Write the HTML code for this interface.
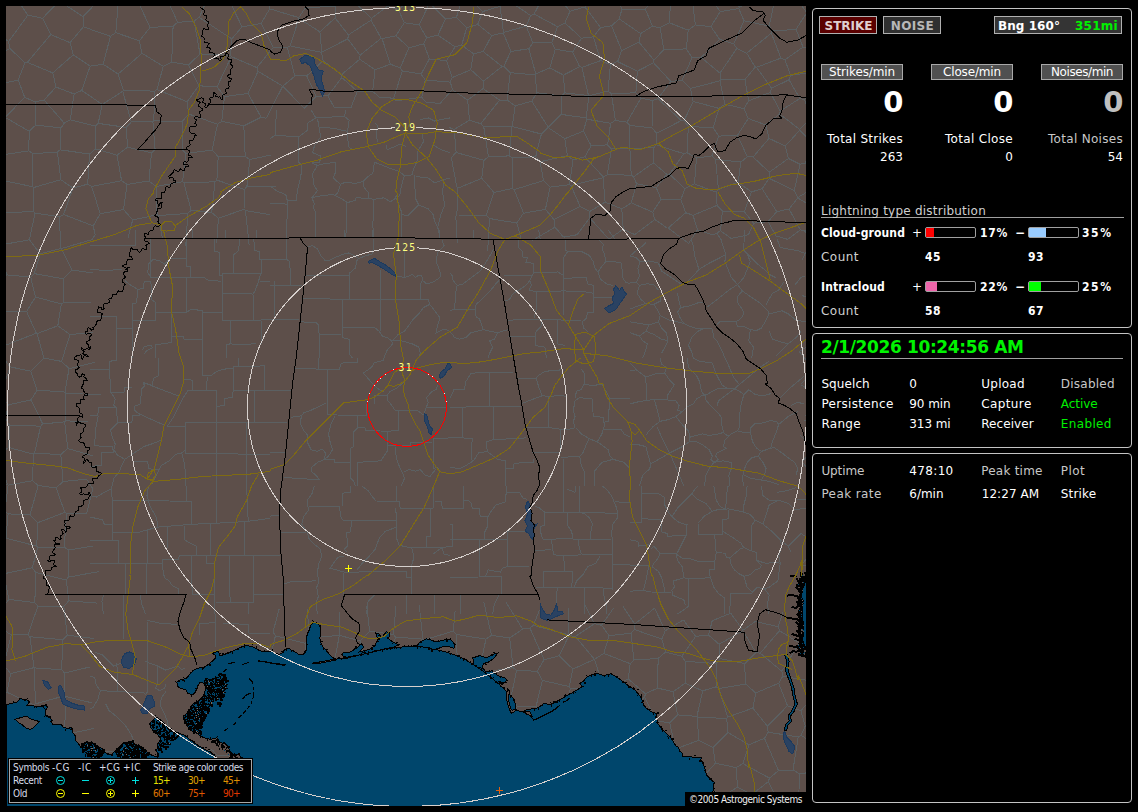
<!DOCTYPE html>
<html lang="en"><head><meta charset="utf-8"><title>Lightning Detector</title>
<style>
html,body{margin:0;padding:0;background:#000;}
body{width:1138px;height:812px;position:relative;overflow:hidden;font-family:"DejaVu Sans", "Liberation Sans", sans-serif;}
.t{position:absolute;white-space:pre;line-height:normal;}
.panel{position:absolute;border:1px solid #c4c4c4;border-radius:4px;box-sizing:border-box;background:#000;}
.box{position:absolute;box-sizing:border-box;}
#map{position:absolute;left:6px;top:6px;width:800px;height:800px;}
</style></head><body>
<svg id="map" viewBox="6 6 800 800" width="800" height="800">
<rect x="6" y="6" width="800" height="800" fill="#5d4f4a"/>
<path d="M286.6,238.7 L286.6,259.3 L289.8,261.6 L290.6,285.4 M270.0,259.3 L286.6,259.3 M270.0,285.4 L301.6,285.4 M274.7,280.6 L274.7,319.4 M270.0,319.4 L299.3,319.4 M300.1,321.8 L315.9,322.6 L318.3,324.9 L319.1,334.4 L319.1,358.0 M319.1,334.4 L341.2,334.4 M308.0,246.6 L312.7,245.8 L317.5,249.0 L320.6,255.3 L325.4,260.9 L330.1,260.1 L336.5,256.9 L344.4,253.7 L349.1,252.9 L355.4,256.1 L358.6,258.5 L364.9,256.1 L372.8,253.7 L373.6,239.5 M304.8,275.9 L349.1,275.9 L349.9,272.7 L355.4,268.0 L356.7,260.9 L358.6,258.5 M349.1,275.9 L349.1,298.8 M302.4,298.4 L322.2,298.4 L338.0,299.6 L358.6,299.6 L380.8,299.3 L396.6,299.3 L428.2,299.6 M380.8,269.6 L380.8,331.3 M342.0,300.4 L342.0,337.6 L349.1,339.2 L349.1,353.4 L352.3,358.0 M342.0,327.8 L374.4,327.3 L379.2,331.3 L382.3,336.0 L387.1,337.6 L391.8,340.8 L392.6,343.9 L387.1,350.3 L383.9,358.0 M404.5,250.6 L404.5,276.7 M396.6,275.9 L404.5,277.5 L409.2,275.9 L412.4,274.3 L415.6,277.5 L418.7,275.1 L421.9,275.9 L422.7,280.6 L426.6,283.8 L433.0,282.2 L437.7,279.1 L440.9,275.9 L439.3,269.6 L436.1,261.6 L437.7,252.2 L444.1,245.8 L441.7,239.5 M421.1,280.6 L420.3,299.6 M428.2,299.6 L429.8,304.4 L423.5,307.5 L418.7,313.9 L412.4,320.2 L409.2,324.9 L404.5,331.3 L398.2,334.4 L392.6,340.8 M429.8,304.4 L434.6,310.7 L440.1,317.8 L437.7,324.9 L436.1,332.8 L444.1,328.9 L450.1,331.3 M392.6,340.8 L401.3,340.8 L412.4,343.9 L418.7,347.1 L420.3,353.4 L418.7,358.0 M315.9,230.0 L315.9,237.9 M344.4,230.0 L344.4,237.9 M372.8,230.0 L372.8,237.9 M439.3,230.0 L439.3,237.9 M450.0,272.7 L452.4,275.9 L453.2,280.6 L457.1,285.4 L461.9,284.6 L467.4,280.6 L473.7,275.9 L480.1,271.1 L486.4,261.6 L491.1,253.7 L493.5,249.0 M457.1,285.4 L455.5,293.3 L454.7,309.1 L450.0,310.7 M454.7,309.1 L475.3,309.1 L476.1,304.4 L481.6,299.6 L489.6,291.7 L495.9,283.8 L499.1,280.6 M475.3,309.1 L476.1,317.0 L479.3,318.6 L481.6,324.9 L483.2,329.7 L470.6,332.8 L465.8,337.6 L459.5,339.2 L454.7,337.6 L450.0,331.3 M483.2,329.7 L497.5,332.8 L502.2,331.3 L507.8,329.7 M497.5,332.8 L494.3,339.2 L489.6,340.8 L492.7,347.1 L489.6,353.4 L488.0,358.0 M503.8,275.1 L532.3,275.1 L533.9,272.7 L551.3,272.7 L557.6,271.9 L563.1,275.1 M532.3,275.1 L529.9,280.6 L531.5,285.4 L529.1,290.1 L535.4,291.7 L541.8,292.0 L563.6,290.9 M504.6,301.2 L509.3,299.6 L513.3,293.3 L521.2,288.5 L525.9,285.4 L529.9,280.6 M536.2,292.0 L536.2,309.1 L533.9,318.6 M507.0,320.2 L533.9,319.4 L557.6,319.9 L567.1,320.2 L581.3,320.5 M565.5,239.5 L565.8,250.6 L567.9,251.4 L581.3,251.4 L589.2,255.3 L593.2,261.6 L594.8,268.0 L597.9,271.9 M567.9,251.4 L563.9,256.9 L563.6,315.4 M563.6,278.3 L586.1,277.5 L587.7,283.8 L593.2,285.4 L593.2,312.3 L587.7,312.3 L586.1,318.6 L582.1,321.8 L583.7,328.1 L587.7,331.3 M563.6,290.9 L584.5,291.7 L593.2,293.3 M593.2,297.2 L613.0,297.2 M597.9,271.9 L601.9,266.4 L605.9,261.6 L604.3,253.7 L601.9,249.0 L603.5,244.2 L598.7,239.5 M597.9,271.9 L600.3,279.1 L606.6,283.8 L613.0,285.4 M605.9,261.6 L614.6,261.6 L621.7,263.2 L622.5,277.5 L625.6,282.2 L630.1,283.8 M518.0,239.5 L518.0,247.4 L522.0,250.6 L522.8,256.9 L527.5,257.7 L525.9,262.4 L533.1,263.2 L533.9,272.7 M508.5,336.8 L535.4,336.0 L536.2,331.3 L541.0,326.5 L541.8,320.2 M535.4,336.0 L535.4,345.5 L544.9,347.1 L546.5,358.0 M557.6,319.9 L557.6,343.9 L565.5,345.5 M473.7,230.0 L473.7,238.7 M538.6,230.0 L540.2,238.7 M608.2,230.0 L614.6,238.7 M295.3,368.3 L318.3,369.1 L327.0,369.9 M318.3,358.0 L318.3,369.1 M327.0,369.9 L327.0,414.2 M327.0,369.9 L339.6,369.1 L340.4,364.3 L344.4,362.0 L357.8,362.0 L357.8,358.0 M327.0,414.2 L336.5,415.0 L357.8,415.3 L366.5,415.3 L366.8,403.9 M357.8,415.3 L357.8,427.6 L364.9,427.6 L365.7,430.8 L387.1,431.1 M270.0,390.4 L291.4,390.4 M270.0,422.9 L287.4,422.9 M270.0,452.9 L285.0,452.9 M290.6,417.3 L301.6,415.8 L304.0,412.6 L311.1,410.2 L317.5,407.1 L326.2,403.1 M301.6,415.8 L300.1,422.9 L304.0,430.8 L308.0,435.5 L307.2,441.9 L311.1,449.8 L317.5,451.4 L322.2,449.0 L325.4,452.9 L324.6,459.3 L334.9,459.3 L334.9,462.4 L349.9,462.4 M334.9,416.5 L330.9,424.5 L328.5,433.9 L330.1,441.9 L332.5,449.8 L328.5,456.1 L324.6,459.3 M357.8,427.6 L353.9,431.6 L353.9,446.6 L350.7,448.2 L350.7,478.3 L353.9,481.4 L355.4,486.0 M324.6,459.3 L317.5,462.4 L311.9,467.2 L311.9,471.9 L317.5,476.7 L319.1,479.8 L284.2,477.5 M357.8,486.0 L357.8,462.4 L380.8,460.8 L383.9,456.1 L387.1,451.4 L387.1,431.1 M387.1,431.1 L398.2,430.8 L399.0,410.2 L417.2,410.2 L423.5,415.0 M387.1,395.2 L387.9,400.7 L391.8,405.5 L395.0,410.2 L399.0,410.2 M374.4,403.9 L374.4,395.2 L387.1,395.2 L390.3,391.2 L396.6,388.1 L404.5,381.7 M363.4,373.0 L368.1,378.6 L373.6,384.9 L379.2,389.6 L383.9,391.2 M363.4,373.0 L371.3,367.5 L374.4,362.7 L383.1,360.4 L383.1,358.0 M387.1,431.1 L387.1,445.8 L410.8,445.8 L410.8,442.7 L432.2,442.7 M433.0,438.7 L433.0,468.8 L437.7,467.2 L440.1,471.9 M433.0,438.7 L450.1,437.9 M395.0,446.6 L396.6,459.3 L399.7,467.2 L402.9,473.5 L404.5,478.3 L401.3,486.0 M404.5,471.9 L409.2,469.6 L415.6,471.1 L420.3,469.6 L425.1,475.1 L429.8,476.7 L436.1,468.8 M424.3,413.4 L425.9,408.6 L428.2,402.3 L426.6,397.6 L431.4,392.0 L436.1,389.6 L437.7,384.9 M425.9,407.8 L445.6,407.4 M450.0,398.3 L454.0,389.6 L464.2,389.6 L465.8,381.7 L470.6,373.8 L480.1,372.2 L489.6,372.6 L513.3,373.0 M489.6,372.6 L489.6,406.3 M450.0,407.1 L462.7,407.1 L493.5,406.3 L521.2,406.3 M462.7,407.1 L462.7,437.9 L450.0,437.9 M462.7,437.9 L472.2,438.7 L471.4,452.9 L472.2,461.6 L465.8,465.6 L459.5,468.8 L450.0,467.2 M493.5,406.3 L493.5,439.5 L486.4,441.9 L487.2,451.4 L478.5,452.9 L473.7,460.8 L472.2,461.6 M493.5,439.5 L513.3,438.7 L525.9,437.9 M487.2,451.4 L497.5,459.3 L505.4,460.8 L505.4,486.0 M505.4,468.0 L513.3,468.0 L514.1,463.2 L533.9,462.4 L533.9,459.3 M518.0,378.6 L536.2,378.3 L538.6,375.4 L544.9,371.4 L551.3,370.7 L560.8,369.9 M536.2,378.3 L538.6,386.5 L541.8,395.2 L548.1,396.8 L554.4,396.0 L560.8,395.2 L566.3,396.8 M521.2,403.9 L529.1,400.7 L535.4,398.3 L541.8,396.0 M548.9,396.8 L548.9,427.6 M526.7,427.6 L548.9,427.6 L560.8,429.2 L560.8,433.9 M560.8,429.2 L567.1,430.0 L575.0,427.6 L573.4,421.3 L575.0,416.5 L573.4,410.2 L575.0,400.7 L579.7,397.6 L592.4,399.1 L593.2,416.5 L603.5,417.3 L604.3,426.0 L601.9,433.9 L597.2,441.9 M575.0,397.6 L576.6,391.2 L581.3,389.6 L584.5,383.3 L584.5,373.8 L581.3,369.1 M584.5,384.1 L592.4,385.7 L601.9,384.1 L609.8,398.3 L608.2,421.3 L604.3,422.1 M609.8,398.3 L630.1,398.3 M603.5,429.2 L620.9,429.2 L624.1,433.9 L630.1,437.1 M576.6,428.4 L581.3,433.9 L589.2,438.7 L597.2,441.9 L601.9,445.0 L608.2,449.8 L609.8,456.1 L613.0,459.3 M532.3,452.1 L544.9,452.9 L560.8,452.9 L560.8,433.9 M560.8,457.7 L568.7,456.9 L579.7,456.1 L582.9,452.9 L586.1,445.0 L589.2,438.7 M563.9,459.3 L563.9,486.0 M579.7,456.1 L581.3,465.6 L584.5,471.9 L584.5,486.0 M613.0,459.3 L601.9,462.4 L594.0,471.9 L594.0,486.0 M613.0,459.3 L624.1,462.4 L630.1,468.8 M314.3,486.0 L311.9,493.9 L307.2,500.2 L308.0,506.6 L308.8,509.7 L304.0,516.1 L301.6,524.0 L307.2,531.9 L308.8,538.2 L312.7,543.0 L320.6,549.3 L321.4,557.2 L318.3,565.1 L317.5,574.6 L319.1,580.9 L316.7,587.3 L318.3,596.8 L315.9,603.1 L317.5,614.0 M308.8,506.3 L339.6,506.3 L340.4,516.1 L342.8,520.0 L396.6,520.0 M350.7,486.0 L350.7,492.3 L342.8,493.1 L342.0,506.3 M351.5,520.0 L350.7,531.9 L346.7,532.7 L347.5,546.1 L344.4,549.3 L347.5,552.5 M281.1,532.4 L306.4,532.4 M270.0,555.6 L280.3,555.6 M270.0,594.4 L282.7,594.4 M270.0,516.1 L278.7,515.3 M283.4,584.1 L290.6,581.7 L315.9,580.9 M361.8,486.0 L368.1,490.7 L372.8,497.1 L376.0,501.0 L399.7,501.3 L400.1,508.2 L433.0,508.2 M396.6,486.0 L396.6,501.3 M395.8,508.2 L396.6,524.0 L396.6,538.2 L399.0,545.3 L410.8,547.7 L433.0,547.4 L450.1,546.9 M395.8,527.5 L385.5,531.1 L379.2,538.2 L375.2,549.3 L369.7,555.6 L363.4,561.9 L357.0,569.9 M343.6,556.4 L338.0,557.2 L333.3,563.5 L330.1,568.3 L336.5,569.9 L344.4,572.2 L406.1,571.4 L406.9,577.8 L411.6,577.8 M343.6,573.0 L343.6,593.6 M411.6,547.7 L414.0,557.2 L411.6,565.1 L411.6,593.6 M433.8,486.0 L433.8,508.2 M430.6,508.2 L430.6,536.6 L426.6,536.6 L426.6,547.4 M434.6,501.0 L440.9,501.0 L442.5,508.2 L450.1,508.2 M433.0,554.0 L441.7,547.7 L444.1,554.0 L450.1,555.6 M406.1,595.2 L406.1,614.0 M434.6,595.2 L434.6,614.0 M374.4,595.2 L368.1,601.5 L366.5,614.0 M463.4,486.0 L463.4,508.2 L450.0,508.2 M463.4,501.0 L468.2,500.2 L471.4,503.4 L472.2,508.2 L479.3,508.9 L480.1,516.1 L488.0,516.9 M506.2,486.0 L506.2,492.3 L519.6,492.6 L522.8,497.9 L527.5,499.4 M506.2,492.3 L505.4,501.8 L495.9,505.0 L491.1,511.3 L488.0,516.9 L487.2,527.1 L484.0,533.5 L484.0,539.0 M450.0,539.0 L507.0,539.0 L507.0,531.9 L525.9,531.9 M450.0,524.0 L452.4,524.8 L452.4,546.1 L450.0,546.9 M479.3,539.8 L479.3,577.0 M450.0,577.5 L479.3,577.0 L501.4,576.5 L501.9,594.4 M507.0,539.0 L507.0,566.7 L529.1,567.0 M507.0,566.7 L502.2,568.3 L500.6,572.2 L488.0,569.9 L485.6,576.5 M535.4,506.6 L538.6,507.4 L543.4,511.3 L544.9,512.1 L617.7,513.2 M544.9,512.1 L544.1,525.6 L540.2,526.3 L541.0,533.5 L542.6,539.0 M542.6,539.0 L551.3,539.5 L563.9,538.2 L578.2,539.5 L612.2,539.0 M551.3,539.5 L552.8,549.3 L553.6,554.8 L563.9,555.6 L576.6,555.3 L581.3,554.0 L612.2,554.4 M533.9,549.3 L536.2,550.9 L551.3,549.3 M563.9,486.0 L563.9,512.1 M579.7,486.0 L579.7,512.1 L584.5,513.7 L589.2,517.6 L592.4,524.0 L590.8,531.9 L590.8,539.0 M567.9,512.9 L567.9,525.6 L571.8,531.9 L572.6,538.2 M578.2,539.5 L579.0,546.1 L581.3,554.0 M563.9,555.6 L564.2,571.4 M543.4,571.4 L572.6,571.4 L571.8,587.3 M543.4,571.4 L543.7,587.3 M536.2,587.3 L612.2,588.1 M557.6,588.1 L556.0,596.8 L556.0,614.0 M584.5,588.1 L584.5,614.0 M603.5,588.1 L604.3,599.9 L606.6,603.1 L606.6,614.0 M600.3,555.6 L595.6,563.5 L587.7,566.7 L582.9,574.6 L576.6,580.9 L574.2,587.3 M612.2,538.2 L613.0,549.3 L612.2,565.1 L612.2,589.6 M612.2,564.3 L630.1,564.3 M617.7,513.2 L616.1,506.6 L611.4,495.5 L606.6,489.2 L601.9,486.0 M617.7,513.2 L617.7,517.6 L613.0,524.0 L611.4,533.5 L612.2,538.2 M614.6,501.8 L630.1,502.6 M460.3,595.2 L460.3,614.0 M499.1,595.2 L494.3,604.7 L492.7,614.0 M567.1,489.2 L575.0,492.3 L575.8,486.0 M90.0,245.8 L135.9,245.8 L135.9,236.3 M150.1,238.7 L150.1,249.8 L150.9,277.5 M90.0,269.6 L105.8,270.3 L122.4,269.6 M148.5,264.0 L153.3,259.3 L159.6,260.9 L164.4,264.0 L167.5,260.9 L170.7,258.5 L186.5,258.2 M148.5,264.0 L147.8,272.7 L150.9,277.5 M150.9,277.5 L186.5,277.2 L203.9,277.5 L208.7,280.6 L216.6,280.6 L221.3,282.2 M186.5,238.7 L186.5,266.4 L190.5,266.7 L190.5,277.2 M186.5,277.5 L186.5,312.3 M124.8,280.6 L131.1,285.4 L137.5,289.3 L143.8,288.5 L144.1,281.4 L150.9,281.4 M137.5,289.3 L136.7,302.8 L132.7,303.6 L132.7,358.0 M150.9,281.4 L151.7,299.6 L155.7,302.8 L155.7,320.2 L132.7,320.5 M155.7,312.3 L186.5,312.3 L191.3,309.1 L202.3,310.7 L202.7,358.0 M202.7,312.3 L222.1,312.3 M171.5,312.3 L171.5,342.3 L167.5,343.1 L155.7,344.7 L155.7,358.0 M171.5,336.8 L183.4,336.8 L184.1,339.2 L202.7,339.2 M90.0,316.2 L116.1,316.2 L116.9,328.1 L131.9,328.4 M116.9,328.1 L116.1,358.0 M214.2,238.7 L215.0,251.4 L219.0,252.2 L219.0,275.1 L222.1,275.1 M222.1,273.5 L260.9,273.5 M222.1,273.5 L222.1,320.2 M222.1,293.3 L245.9,293.3 L253.0,294.1 M222.1,320.2 L253.8,320.5 L270.1,319.4 M239.5,238.7 L238.7,250.6 L234.0,254.5 L233.2,273.5 M253.8,238.7 L254.6,250.6 L259.3,251.4 L259.3,259.3 L270.1,259.3 M260.9,273.5 L257.7,283.8 L254.6,291.7 L253.0,294.1 L253.8,320.5 M261.7,259.3 L261.7,273.5 M260.1,281.4 L270.1,281.4 M230.8,320.5 L230.0,343.9 L226.9,344.7 L226.1,358.0 M230.0,343.9 L246.6,344.7 L256.1,343.1 M261.7,320.5 L261.7,343.9 M142.2,350.3 L144.6,346.3 L150.9,345.5 L152.5,347.9 L147.0,350.3 L143.8,354.2 M225.3,230.0 L225.3,237.9 M256.1,230.0 L256.1,237.9 M192.8,230.0 L192.1,237.9 M135.9,230.0 L135.9,236.3 M90.0,369.1 L109.8,369.1 L109.8,361.2 L116.9,360.4 L116.9,358.0 M109.8,369.1 L110.3,392.0 L124.0,392.0 L124.8,387.3 L131.9,387.3 M110.6,392.0 L115.3,399.1 L113.7,405.5 L116.1,407.1 L117.7,422.9 L131.9,422.9 L132.4,415.8 L140.6,415.0 M90.0,415.8 L97.9,415.8 L98.2,407.1 L116.1,407.1 M98.2,415.8 L95.5,429.2 L94.7,445.8 L112.2,446.6 L113.7,452.9 L101.9,452.9 L101.1,465.6 L90.0,466.4 M117.7,422.9 L110.6,430.0 L112.2,437.1 L115.3,444.2 L113.7,449.8 L117.7,455.3 L124.8,459.3 L131.9,454.5 L143.8,446.6 L153.3,443.4 L161.2,440.3 M158.0,358.0 L158.8,375.4 L153.3,378.6 L152.5,385.7 L143.0,382.5 M143.0,382.5 L178.6,396.0 M143.0,382.5 L144.6,385.7 L141.4,388.9 L140.6,403.9 L134.3,406.3 L135.1,411.0 L139.8,414.2 L164.4,425.2 M183.4,379.4 L192.8,380.2 L192.8,389.6 M188.1,390.4 L216.6,390.4 L216.6,486.0 M188.1,390.4 L183.4,397.6 L178.6,407.1 L173.9,416.5 L167.5,426.0 L184.9,426.0 M185.7,422.1 L185.7,453.7 M185.7,422.1 L270.1,422.9 M185.7,453.7 L270.1,454.2 M202.3,358.0 L202.7,375.4 L211.8,375.1 L216.6,371.4 L224.5,369.1 L233.2,368.3 M233.2,366.7 L264.1,365.9 L264.8,389.6 M233.2,366.7 L233.2,390.4 M207.1,377.0 L206.8,390.4 M217.4,406.3 L224.5,405.5 L224.5,398.3 L232.4,397.6 L233.2,390.4 L270.1,390.4 M254.6,391.2 L254.6,422.9 M246.6,422.9 L246.6,486.0 M181.8,452.9 L184.9,465.6 L185.7,486.0 M185.7,449.8 L181.8,452.9 L175.4,454.5 L169.1,460.8 L161.2,465.6 L156.5,475.1 L151.7,484.6 M124.8,459.3 L121.6,465.6 L119.3,471.9 L113.7,478.3 L112.2,486.0 M133.5,461.6 L147.8,461.6 L148.5,468.8 L159.6,469.6 M238.7,358.0 L238.7,365.9 M111.4,486.0 L112.2,500.2 L112.2,539.8 M112.2,500.2 L147.0,500.6 L169.1,501.0 L191.3,501.3 L191.6,524.0 M90.0,495.5 L96.3,497.1 L104.2,492.3 L110.6,489.2 M90.0,516.9 L102.7,520.0 L104.2,524.0 L112.2,524.3 M112.2,532.4 L137.5,532.7 L148.5,529.5 L158.0,527.1 L167.5,526.3 L191.3,524.3 L216.6,523.2 L245.1,521.6 L270.1,518.4 M148.5,486.0 L147.0,495.5 L150.1,506.6 L156.5,517.6 L158.0,527.1 M90.0,540.3 L118.5,540.3 L118.8,563.2 M90.0,563.5 L162.8,563.2 M147.8,530.3 L147.8,563.2 M167.5,526.8 L167.5,547.7 M184.6,525.6 L184.6,539.8 L191.3,543.8 L196.0,546.1 L196.8,554.8 M179.4,555.3 L270.1,555.3 M179.4,555.3 L178.6,559.1 L162.8,559.6 L162.8,568.3 L164.4,577.8 L169.1,580.9 L172.3,585.7 L178.6,588.8 L178.9,594.4 M125.6,563.5 L125.6,594.4 M146.6,563.5 L146.6,594.4 M191.6,555.6 L192.1,594.4 M206.3,555.6 L206.3,563.2 L214.2,563.2 L215.0,614.0 M186.5,486.0 L186.5,501.0 M216.6,486.0 L216.6,523.2 M246.6,486.0 L248.2,520.8 M210.6,523.7 L210.6,555.3 M244.7,522.1 L244.7,555.3 M229.2,555.6 L229.6,593.6 L230.8,602.3 M253.0,555.6 L253.0,602.3 L215.8,602.8 M253.0,594.4 L270.1,594.4 M248.2,603.1 L248.2,614.0 M103.4,595.2 L101.9,601.5 L103.4,614.0 M123.2,595.2 L123.2,614.0 M140.3,595.2 L141.4,603.1 L145.4,614.0 M192.1,594.4 L215.0,594.4 M690.9,238.7 L693.3,245.8 L694.9,256.9 L698.0,266.4 L698.8,269.6 M698.8,269.6 L709.1,263.2 L718.6,258.5 L725.7,254.5 M698.8,269.6 L693.3,275.9 L688.5,280.6 M717.0,233.2 L721.0,239.5 L723.4,247.4 L725.7,254.5 L724.9,261.6 L728.1,269.6 L731.3,277.5 L737.6,284.6 M737.6,284.6 L743.9,277.5 L747.1,269.6 L750.3,261.6 L747.1,253.7 L743.9,250.6 L744.2,230.0 M737.6,284.6 L731.3,288.5 L724.9,293.3 L717.0,299.6 L707.5,306.7 M737.6,284.6 L742.3,290.9 L750.3,296.5 L759.7,302.8 L767.7,310.7 L769.2,313.9 M742.3,290.9 L737.6,296.5 L737.6,302.8 L742.3,309.1 L743.9,313.9 L740.8,318.6 L736.0,321.8 L728.1,321.0 L720.2,321.0 L717.0,324.9 M736.0,321.8 L737.6,326.5 L743.9,326.5 L750.3,329.7 L756.6,330.5 L761.3,328.1 L766.1,320.2 L769.2,313.9 M769.2,313.9 L781.9,310.7 L788.2,313.9 L796.1,320.2 L805.6,321.8 M747.1,253.7 L756.6,263.2 L764.5,269.6 L769.2,274.3 L775.6,277.5 M766.1,304.4 L772.4,293.3 L778.7,290.1 L783.5,282.2 M777.2,239.5 L780.3,247.4 L788.2,249.0 L797.7,250.6 L805.6,253.7 M794.6,285.4 L800.9,277.5 L805.6,275.9 M750.3,329.7 L748.7,340.8 L753.4,347.1 L751.8,358.0 M769.2,331.3 L772.4,339.2 L781.9,342.3 L788.2,343.9 L796.1,337.6 L800.9,331.3 M788.2,343.9 L781.9,350.3 L775.6,356.6 M630.0,256.1 L636.3,257.7 L640.3,261.6 L637.9,268.0 L639.5,275.9 L636.3,282.2 L630.0,282.2 M645.8,242.7 L642.7,245.8 L636.3,250.6 L630.0,256.1 M640.3,261.6 L649.0,260.9 L658.5,263.2 M636.3,282.2 L639.5,285.4 L647.4,283.8 L653.7,284.6 L658.5,290.1 M639.5,285.4 L637.1,293.3 L641.1,299.6 L645.8,303.6 L653.7,304.4 L660.1,301.2 L661.6,294.9 M658.5,263.2 L661.6,271.1 L671.1,277.5 L680.6,283.8 M677.5,293.3 L679.1,301.2 L680.6,307.5 L677.5,312.3 L680.6,318.6 L683.8,323.4 L690.1,326.5 L698.0,328.9 L704.4,328.1 L712.3,328.9 M680.6,307.5 L690.1,305.9 L698.0,302.8 L702.8,302.0 M630.0,309.1 L637.9,305.9 L645.8,303.6 M653.7,304.4 L656.9,309.1 L660.1,315.4 L658.5,321.8 L649.0,324.9 L639.5,323.4 L630.0,321.8 M660.1,315.4 L669.6,320.2 L677.5,321.8 L683.8,323.4 M658.5,321.8 L661.6,328.1 L666.4,332.8 L668.0,340.8 L664.8,347.1 L661.6,353.4 M649.0,324.9 L645.8,331.3 L639.5,336.0 L630.0,332.8 M645.8,331.3 L653.7,334.4 L661.6,339.2 L668.0,340.8 M704.4,328.1 L698.0,331.3 L691.7,337.6 L688.5,345.5 L691.7,351.8 L693.3,358.0 M712.3,328.9 L713.9,337.6 L717.0,340.8 L721.8,350.3 L724.9,358.0 M639.5,336.0 L642.7,340.8 L647.4,343.9 L645.8,350.3 L642.7,358.0 M630.0,370.7 L636.3,369.9 L645.8,377.0 L646.6,400.7 M645.8,377.0 L655.3,373.8 L664.8,373.0 L669.6,380.2 L674.3,384.9 L668.0,394.4 L667.2,399.9 M630.0,403.9 L639.5,401.5 L653.7,399.5 L667.2,399.9 L675.9,400.7 L679.1,405.5 L677.5,410.2 L682.2,411.8 M654.5,399.9 L657.7,411.8 L660.1,421.3 M682.2,411.8 L675.9,416.5 L668.0,419.7 L660.1,421.3 L653.7,426.0 L649.0,430.8 L645.8,435.5 M675.9,416.5 L682.2,424.5 L688.5,430.8 L690.1,437.1 L689.3,441.9 M656.9,426.8 L663.2,440.3 L669.6,452.9 L675.9,467.2 L680.6,478.3 L683.8,486.0 M689.3,441.9 L682.2,446.6 L675.9,449.8 L669.6,452.9 L661.6,457.7 L650.6,464.0 L649.8,468.8 L642.7,475.1 L639.5,486.0 M630.0,444.2 L639.5,445.0 L645.8,446.6 L650.6,464.0 M689.3,437.1 L696.5,435.5 L702.8,433.9 L709.1,435.5 L718.6,433.9 L723.4,432.4 L728.1,436.3 L731.3,433.9 M689.3,441.9 L696.5,441.9 L702.8,445.0 L709.1,449.8 L712.3,456.1 L710.7,459.3 L713.9,462.4 M713.9,462.4 L723.4,460.8 L731.3,462.4 L731.3,468.8 L728.9,475.1 L729.7,486.0 M713.9,462.4 L709.1,468.8 L705.9,475.1 L704.4,486.0 M731.3,433.9 L724.9,440.3 L723.4,446.6 L726.5,448.2 L717.0,452.9 L715.4,456.1 L718.6,459.3 L713.9,462.4 M723.4,432.4 L721.8,424.5 L721.0,416.5 L713.9,408.6 L709.1,403.9 L705.2,399.1 L705.9,395.2 L701.2,396.0 L696.5,399.1 L693.3,403.9 L687.0,407.1 L682.2,411.8 M705.9,395.2 L712.3,391.2 L718.6,388.1 L726.5,388.1 L734.4,388.9 L739.2,391.2 L743.9,394.4 L740.8,405.5 L739.2,418.1 L739.2,427.6 L737.6,430.8 L731.3,433.9 M717.0,405.5 L718.6,400.7 L724.9,396.0 L734.4,388.9 L740.8,383.3 L750.3,375.4 L759.7,367.5 L769.2,361.2 M687.0,358.0 L688.5,367.5 L696.5,375.4 L699.6,381.7 L701.2,389.6 L702.8,393.6 L705.9,395.2 M712.3,362.7 L715.4,372.2 L718.6,378.6 L721.8,384.9 L726.5,388.1 M731.3,372.2 L734.4,378.6 L739.2,384.1 M743.9,394.4 L748.7,389.6 L755.0,394.4 L762.9,396.0 L770.8,393.6 M737.6,430.8 L743.9,432.4 L750.3,432.4 L751.0,427.6 L755.0,423.7 L762.9,422.9 L770.8,420.5 L777.2,422.1 L778.7,424.5 M750.3,432.4 L752.6,441.9 L756.6,448.2 L761.3,451.4 L770.8,448.2 L774.0,447.4 M778.7,424.5 L775.6,433.9 L772.4,441.9 L770.8,448.2 M778.7,424.5 L788.2,416.5 L797.7,411.8 M780.3,397.6 L789.8,388.1 L797.7,381.7 L804.1,376.2 M791.4,405.5 L797.7,402.3 L804.1,403.9 M761.3,451.4 L758.2,456.1 L751.8,457.7 L747.1,462.4 L743.9,470.3 L742.3,478.3 L743.9,486.0 M758.2,456.1 L762.9,462.4 L766.1,468.8 L764.5,475.1 L761.3,479.8 M774.0,447.4 L781.9,452.9 L788.2,457.7 L794.6,462.4 L797.7,468.8 L796.1,475.1 M743.9,475.1 L750.3,478.3 L759.7,479.8 L769.2,481.4 L778.7,484.6 M630.0,362.7 L634.7,367.5 L636.3,369.9 M660.1,358.0 L661.6,364.3 L666.4,367.5 L664.8,373.0 M693.3,358.0 L699.6,361.2 L709.1,362.7 L712.3,362.7 M724.9,358.0 L728.1,364.3 L731.3,372.2 M641.9,486.0 L641.4,522.4 L630.0,522.7 M641.9,493.9 L658.5,493.6 L664.0,497.1 L664.8,505.0 L668.0,511.3 L671.9,516.9 M641.4,518.4 L650.6,519.2 L660.9,520.0 L661.6,531.9 L667.2,533.5 L668.0,536.6 L677.5,535.1 L686.2,535.1 M671.9,516.9 L679.1,522.4 L687.0,524.8 L686.2,535.1 L682.2,543.0 L677.5,552.5 L675.9,554.0 M671.9,516.9 L677.5,508.2 L685.4,500.2 L691.7,493.9 L694.9,489.2 L698.0,486.0 M691.7,493.9 L696.5,498.7 L705.9,503.4 L712.3,511.3 L704.4,516.1 L698.0,523.2 L698.4,534.3 L722.6,534.3 L722.6,519.2 L728.9,518.9 L728.9,509.7 M712.3,511.3 L718.6,509.4 L728.9,508.9 L740.8,511.3 L750.3,514.5 L755.0,520.0 L762.9,524.0 M713.9,486.0 L716.2,500.2 L720.2,506.6 L724.9,508.9 M728.1,486.0 L726.5,495.5 L725.7,508.9 M747.1,486.0 L746.3,495.5 L743.9,505.0 L743.9,512.1 M755.0,520.0 L751.8,525.6 L751.5,550.9 M722.6,531.1 L731.3,536.6 L740.8,543.0 L743.9,547.7 L751.5,550.9 L756.6,552.5 L756.6,560.4 L761.3,565.1 L759.7,568.3 M714.7,535.1 L715.4,544.5 L716.2,552.5 L714.7,561.9 L714.7,569.9 L709.9,569.1 L709.1,573.0 L710.7,577.8 M675.9,554.0 L682.2,558.0 L690.1,558.8 L698.0,561.2 L714.7,561.9 M660.1,553.2 L675.9,553.2 M650.6,549.3 L653.7,546.1 L660.1,553.2 L657.7,558.8 L653.7,563.5 L652.2,566.7 M675.9,554.0 L677.5,560.4 L682.2,566.7 L683.8,577.8 L688.5,578.6 L710.7,577.8 M716.2,552.5 L724.9,553.2 L726.5,557.2 L729.7,558.0 L731.3,565.1 L734.4,569.9 L739.2,573.8 L743.9,576.2 L750.3,574.6 L755.0,569.9 L759.7,568.3 M729.7,558.0 L736.0,552.5 L740.8,548.5 L743.9,547.7 M710.7,577.8 L713.9,587.3 L718.6,593.6 L724.9,598.3 L724.9,614.0 M743.9,576.2 L747.1,587.3 L751.8,592.0 L755.0,590.4 L756.6,587.3 M730.5,593.6 L751.8,593.3 L756.6,587.3 L764.5,588.8 L769.2,595.2 L767.7,603.1 L768.4,614.0 M730.5,593.6 L729.7,614.0 M688.5,578.6 L688.5,606.3 L682.2,611.0 L677.5,614.0 M683.8,577.8 L673.5,580.9 L674.3,587.3 L671.9,590.4 L672.7,595.2 L683.8,599.9 L685.4,604.7 M630.0,565.1 L649.0,565.1 L645.8,580.9 L643.4,590.4 L630.0,591.2 M643.4,590.4 L650.6,592.0 L671.1,592.3 M652.2,566.7 L658.5,571.4 L661.6,577.8 L664.0,587.3 L664.8,592.0 M630.0,539.8 L637.9,541.4 L638.7,546.1 L650.6,544.5 M762.9,524.0 L769.2,505.0 L778.7,500.2 L788.2,503.4 L794.6,509.7 L805.6,508.2 M762.9,524.0 L772.4,531.9 L780.3,539.8 L788.2,546.1 L791.4,552.5 M756.6,560.4 L766.1,563.5 L775.6,561.9 L780.3,563.5 M780.3,539.8 L781.9,546.1 L778.7,555.6 L780.3,563.5 L778.7,574.6 L777.9,580.9 L769.2,587.3 L764.5,588.8 M788.2,546.1 L794.6,539.8 L800.9,533.5 L805.6,536.6 M761.3,486.0 L762.9,495.5 L769.2,500.2 L778.7,500.2 M777.2,492.3 L786.6,490.7 L796.1,487.6 M276.3,110.0 L275.5,135.3 L287.4,136.1 L298.5,136.9 L298.5,162.2 L301.6,164.6 L300.9,176.5 L297.7,189.1 L296.1,200.2 L287.4,201.0 M270.0,138.5 L275.5,135.3 M270.0,185.9 L276.3,190.7 L285.8,194.7 L287.4,201.0 L286.6,238.0 M270.0,203.4 L287.4,204.1 M311.1,110.0 L315.9,117.9 L308.0,122.7 L307.2,130.6 L298.5,136.9 M315.9,117.9 L330.1,117.1 L344.4,116.3 L345.9,110.0 M344.4,116.3 L349.1,120.3 L347.5,131.4 L348.3,146.4 L352.3,149.6 M317.5,118.7 L319.1,127.4 L333.3,128.2 L347.5,131.4 M319.1,127.4 L320.6,136.9 L314.3,146.4 L312.7,152.7 L320.6,155.9 L319.8,162.2 L311.9,163.0 M311.9,163.0 L317.5,165.4 L323.8,163.8 L335.7,162.2 L335.7,171.7 L333.3,178.0 L340.4,184.4 L338.0,192.3 L334.9,195.4 M317.5,165.4 L312.7,173.3 L313.5,184.4 L317.5,190.7 L311.9,197.8 L314.3,203.4 L313.5,208.1 L315.9,212.8 L315.9,238.0 M311.9,197.8 L322.2,195.4 L333.3,194.7 L334.9,195.4 L341.2,198.6 L347.5,202.6 L355.4,200.2 L356.2,197.8 L368.1,198.3 L373.6,199.4 M340.4,184.4 L345.9,182.0 L355.4,183.6 L363.4,181.2 L368.1,176.5 L372.8,173.3 L374.4,162.2 M363.4,181.2 L364.1,187.5 L368.1,192.3 L368.9,198.3 M346.7,202.6 L345.9,238.0 M373.6,199.4 L373.6,212.8 L372.8,223.9 L373.6,238.0 M374.4,162.2 L380.8,164.6 L390.3,168.5 L399.7,171.7 L404.5,175.7 L412.4,174.9 L413.2,170.1 M373.6,199.4 L383.9,197.8 L390.3,201.8 L395.0,198.6 L396.6,195.4 M404.5,175.7 L401.3,185.9 L399.7,195.4 L396.6,198.6 L401.3,211.3 L401.3,238.0 M413.2,170.1 L417.2,160.6 L417.9,151.1 L423.5,141.6 L421.9,133.7 M414.0,174.9 L414.8,185.9 L415.6,198.6 L418.7,204.9 L428.2,208.9 L433.0,214.4 L434.6,220.8 L437.7,227.1 M415.6,176.5 L428.2,178.0 L434.6,182.8 L444.1,179.6 L450.1,178.0 M402.1,214.4 L407.7,216.0 L412.4,211.3 L418.7,204.9 M444.1,179.6 L442.5,192.3 L444.8,204.9 L440.9,214.4 L437.7,227.1 L440.1,238.0 M386.3,144.8 L387.1,149.6 L393.4,147.2 L399.7,144.0 L406.1,146.4 M374.4,122.7 L377.6,125.8 L376.0,135.3 L377.6,141.6 M420.3,119.5 L428.2,117.9 L434.6,121.1 L440.9,119.5 L450.1,117.9 M433.0,144.8 L440.9,149.6 L450.1,152.7 M123.2,614.0 L124.0,639.3 M147.0,620.3 L147.8,691.5 L145.4,694.7 M147.0,620.3 L161.2,623.5 L177.0,624.3 M199.2,634.6 L199.2,623.5 L215.0,622.7 L215.8,614.0 M215.8,622.7 L215.8,647.2 M222.9,623.5 L248.2,624.3 L249.0,633.0 L270.1,633.8 M145.4,661.5 L158.0,666.2 L165.9,670.2 L172.3,667.8 L177.8,666.2 L181.8,669.4 L184.9,668.6 M158.0,666.2 L157.2,683.6 L155.7,688.4 L159.6,690.7 L164.4,688.4 L165.9,684.4 M90.0,676.5 L94.7,677.3 L96.3,685.2 L100.3,690.7 L97.9,699.4 L93.2,707.4 L90.0,708.9 M100.3,690.7 L116.9,691.5 L145.4,693.1 M105.8,704.2 L109.0,710.5 L116.9,716.8 L124.8,724.8 L131.1,734.3 L134.3,742.0 M165.9,691.5 L161.2,697.9 L160.4,705.8 L164.4,713.7 L167.5,721.6 L169.1,731.1 M94.7,652.0 L102.7,655.1 L109.0,661.5 L113.7,666.2 L121.6,663.1 M116.9,663.1 L117.7,691.5 M835.1,828.3 L835.2,814.4 L835.3,800.5 M1817.9,756.0 L1326.6,778.2 L835.3,800.5 M333.3,753.2 L350.7,754.7 L368.0,756.3 M333.3,753.2 L334.8,768.5 L336.2,783.8 M368.0,756.3 L365.6,769.1 L363.1,781.8 M363.1,781.8 L349.7,782.8 L336.2,783.8 M657.6,688.1 L651.5,690.9 L645.4,693.8 M657.6,688.1 L665.4,689.9 L673.1,691.8 M677.5,714.9 L675.3,703.3 L673.1,691.8 M677.5,714.9 L673.6,718.9 L669.7,722.9 M669.7,722.9 L663.0,721.9 L656.3,721.0 M656.3,721.0 L650.5,709.1 L644.6,697.2 M644.6,697.2 L645.0,695.5 L645.4,693.8 M625.5,722.8 L632.8,728.3 L640.0,733.9 M625.5,722.8 L625.5,718.1 L625.5,713.5 M656.3,721.0 L648.1,727.4 L640.0,733.9 M644.6,697.2 L635.1,705.3 L625.5,713.5 M302.3,755.0 L299.2,740.4 L296.1,725.8 M302.3,755.0 L317.1,753.2 L331.8,751.4 M331.8,751.4 L333.7,739.2 L335.6,727.1 M335.6,727.1 L318.8,723.3 L301.9,719.5 M301.9,719.5 L299.0,722.6 L296.1,725.8 M302.3,755.0 L301.4,756.0 L300.5,756.9 M331.8,751.4 L332.6,752.3 L333.3,753.2 M307.7,787.1 L319.8,788.6 L331.9,790.0 M307.7,787.1 L304.9,784.7 L302.2,782.3 M336.2,783.8 L334.1,786.9 L331.9,790.0 M302.2,782.3 L301.3,769.6 L300.5,756.9 M275.5,724.4 L285.8,725.1 L296.1,725.8 M275.5,724.4 L272.6,726.9 L269.6,729.5 M269.6,729.5 L272.9,743.7 L276.3,757.9 M300.5,756.9 L288.4,757.4 L276.3,757.9 M243.1,782.7 L227.6,783.5 L212.0,784.4 M243.1,782.7 L243.7,770.1 L244.3,757.5 M244.3,757.5 L243.3,756.1 L242.2,754.7 M242.2,754.7 L229.7,755.0 L217.1,755.3 M217.1,755.3 L213.6,769.0 L210.1,782.8 M210.1,782.8 L211.1,783.6 L212.0,784.4 M247.2,730.6 L244.7,742.7 L242.2,754.7 M272.9,760.6 L274.6,759.2 L276.3,757.9 M272.9,760.6 L258.6,759.1 L244.3,757.5 M272.9,760.6 L272.0,774.8 L271.1,789.1 M243.1,782.7 L244.9,784.9 L246.6,787.1 M246.6,787.1 L258.8,788.1 L271.1,789.1 M288.4,936.1 L297.1,879.7 L305.9,823.3 M288.4,936.1 L278.4,878.4 L268.4,820.7 M305.9,823.3 L303.1,820.4 L300.4,817.6 M300.4,817.6 L288.4,814.7 L276.5,811.9 M268.4,820.7 L272.4,816.3 L276.5,811.9 M307.7,787.1 L304.0,802.4 L300.4,817.6 M302.2,782.3 L288.2,787.3 L274.3,792.3 M276.5,811.9 L275.4,802.1 L274.3,792.3 M271.1,789.1 L272.7,790.7 L274.3,792.3 M218.1,810.3 L215.1,797.4 L212.0,784.4 M218.1,810.3 L219.6,811.5 L221.0,812.8 M246.6,787.1 L243.1,799.4 L239.7,811.7 M221.0,812.8 L230.3,812.2 L239.7,811.7 M268.4,820.7 L257.9,820.1 L247.4,819.5 M247.4,819.5 L243.5,815.6 L239.7,811.7 M218.1,810.3 L201.3,813.7 L184.5,817.0 M210.1,782.8 L201.4,783.1 L192.6,783.5 M192.6,783.5 L188.6,800.2 L184.5,817.0 M305.9,823.3 L319.5,820.0 L333.1,816.7 M368.6,953.7 L350.9,885.2 L333.1,816.7 M331.9,790.0 L334.1,800.8 L336.3,811.6 M333.1,816.7 L334.7,814.2 L336.3,811.6 M1042.5,604.9 L982.5,596.2 L922.5,587.6 M1042.5,604.9 L936.7,610.2 L830.9,615.6 M922.5,587.6 L880.5,587.4 L838.5,587.3 M838.5,587.3 L832.9,598.2 L827.4,609.2 M830.9,615.6 L829.2,612.4 L827.4,609.2 M1123.6,611.3 L982.5,629.0 L841.4,646.7 M1123.6,611.3 L1083.1,608.1 L1042.5,604.9 M830.9,615.6 L827.9,624.1 L824.8,632.5 M841.4,646.7 L833.1,639.6 L824.8,632.5 M841.4,646.7 L834.2,659.9 L827.0,673.1 M863.8,693.3 L845.4,683.2 L827.0,673.1 M835.1,828.3 L825.2,830.6 L815.2,832.9 M835.3,800.5 L834.1,799.5 L833.0,798.6 M833.0,798.6 L817.6,803.6 L802.2,808.6 M815.2,832.9 L811.9,831.2 L808.5,829.5 M802.2,808.6 L805.4,819.1 L808.5,829.5 M270.5,697.2 L273.0,694.3 L275.4,691.5 M270.5,697.2 L273.0,710.8 L275.5,724.4 M301.9,719.5 L302.6,706.3 L303.3,693.0 M303.3,693.0 L289.3,692.3 L275.4,691.5 M363.1,781.8 L367.0,786.2 L371.0,790.5 M336.3,811.6 L349.9,812.2 L363.4,812.8 M371.0,790.5 L367.2,801.7 L363.4,812.8 M463.9,1041.5 L463.3,995.9 L462.6,950.3 M463.9,1041.5 L495.4,941.8 L527.0,842.1 M527.0,842.1 L520.0,828.7 L513.0,815.4 M462.6,950.3 L475.2,886.7 L487.8,823.2 M487.8,823.2 L500.4,819.3 L513.0,815.4 M712.2,620.8 L710.4,627.9 L708.5,635.0 M683.6,620.1 L689.6,628.3 L695.6,636.4 M695.6,636.4 L702.1,635.7 L708.5,635.0 M685.1,683.2 L693.9,687.0 L702.7,690.9 M685.1,683.2 L685.2,672.3 L685.2,661.3 M685.2,661.3 L700.7,662.4 L716.1,663.5 M716.1,663.5 L716.2,675.1 L716.2,686.8 M716.2,686.8 L709.4,688.8 L702.7,690.9 M677.5,714.9 L687.2,715.6 L696.9,716.4 M673.1,691.8 L679.1,687.5 L685.1,683.2 M696.9,716.4 L699.8,703.6 L702.7,690.9 M657.6,688.1 L657.9,673.3 L658.1,658.5 M681.8,656.3 L683.5,658.8 L685.2,661.3 M681.8,656.3 L673.7,654.2 L665.5,652.1 M665.5,652.1 L661.8,655.3 L658.1,658.5 M719.9,658.6 L719.5,651.5 L719.1,644.3 M719.9,658.6 L732.3,661.1 L744.7,663.6 M719.1,644.3 L731.0,637.5 L742.9,630.7 M742.9,630.7 L749.5,641.7 L756.0,652.7 M744.7,663.6 L750.3,658.2 L756.0,652.7 M681.8,656.3 L688.7,646.4 L695.6,636.4 M708.5,635.0 L713.8,639.6 L719.1,644.3 M716.1,663.5 L718.0,661.1 L719.9,658.6 M730.6,613.2 L721.4,617.0 L712.2,620.8 M730.8,613.3 L736.9,621.8 L743.0,630.2 M743.0,630.2 L742.9,630.5 L742.9,630.7 M665.3,630.7 L663.5,634.9 L661.8,639.1 M665.3,630.7 L659.9,619.4 L654.6,608.2 M661.8,639.1 L648.1,634.3 L634.4,629.5 M654.6,608.2 L644.7,616.1 L634.7,624.0 M634.7,624.0 L634.6,626.8 L634.4,629.5 M683.0,620.1 L683.3,620.1 L683.6,620.1 M683.0,620.1 L674.2,625.4 L665.3,630.7 M665.5,652.1 L663.7,645.6 L661.8,639.1 M633.8,660.0 L646.0,659.3 L658.1,658.5 M633.8,660.0 L632.5,646.6 L631.2,633.2 M631.2,633.2 L632.8,631.4 L634.4,629.5 M630.2,663.7 L629.2,671.3 L628.2,678.9 M630.2,663.7 L617.0,658.5 L603.8,653.4 M628.2,678.9 L616.5,684.3 L604.8,689.7 M603.8,653.4 L599.2,656.4 L594.6,659.3 M594.6,659.3 L599.1,674.0 L603.5,688.6 M603.5,688.6 L604.2,689.1 L604.8,689.7 M633.8,660.0 L632.0,661.8 L630.2,663.7 M645.4,693.8 L636.8,686.3 L628.2,678.9 M609.1,635.6 L620.2,634.4 L631.2,633.2 M609.1,635.6 L606.5,644.5 L603.8,653.4 M625.5,713.5 L615.3,705.1 L605.1,696.6 M605.1,696.6 L605.0,693.1 L604.8,689.7 M569.4,686.6 L569.8,687.4 L570.3,688.2 M569.4,686.6 L571.1,677.8 L572.9,669.1 M572.9,669.1 L583.6,664.2 L594.4,659.3 M594.4,659.3 L594.5,659.3 L594.6,659.3 M570.3,688.2 L586.9,688.4 L603.5,688.6 M568.6,700.1 L569.5,694.2 L570.3,688.2 M568.6,700.1 L578.3,711.2 L587.9,722.2 M587.9,722.2 L596.5,709.4 L605.1,696.6 M572.9,669.1 L566.0,662.4 L559.2,655.8 M594.4,659.3 L584.9,647.9 L575.5,636.4 M575.5,636.4 L572.2,636.0 L568.9,635.6 M559.2,655.8 L564.0,645.7 L568.9,635.6 M1114.3,324.0 L985.0,333.8 L855.7,343.6 M1114.3,324.0 L983.4,314.4 L852.5,304.7 M852.5,304.7 L843.0,310.0 L833.5,315.2 M833.5,315.2 L833.1,323.5 L832.6,331.8 M832.6,331.8 L844.2,337.7 L855.7,343.6 M1825.4,184.6 L1670.8,193.9 L1516.3,203.3 M1516.3,203.3 L1177.4,240.2 L838.5,277.1 M852.5,304.7 L842.7,294.8 L832.9,284.9 M838.5,277.1 L835.7,281.0 L832.9,284.9 M838.5,277.1 L835.8,265.7 L833.1,254.2 M832.9,284.9 L830.4,285.6 L828.0,286.2 M828.0,286.2 L819.7,276.9 L811.4,267.6 M811.4,267.6 L822.2,260.9 L833.1,254.2 M831.8,216.1 L831.2,230.3 L830.5,244.6 M831.8,216.1 L936.2,220.3 L1040.5,224.5 M1040.5,224.5 L937.7,237.3 L834.8,250.0 M830.5,244.6 L832.6,247.3 L834.8,250.0 M1516.3,203.3 L1278.4,213.9 L1040.5,224.5 M834.8,250.0 L834.0,252.1 L833.1,254.2 M973.3,4.8 L931.0,9.7 L888.7,14.6 M973.3,4.8 L908.6,-9.0 L843.9,-22.9 M843.9,-22.9 L836.8,-17.5 L829.7,-12.2 M829.7,-12.2 L831.4,-3.2 L833.0,5.8 M888.7,14.6 L860.9,10.2 L833.0,5.8 M843.9,-22.9 L832.3,-44.2 L820.6,-65.6 M829.7,-12.2 L823.5,-16.1 L817.2,-20.0 M817.2,-20.0 L818.9,-42.8 L820.6,-65.6 M764.8,-17.6 L765.1,-11.6 L765.3,-5.6 M764.8,-17.6 L767.8,-19.9 L770.8,-22.2 M770.8,-22.2 L781.3,-22.0 L791.8,-21.8 M765.3,-5.6 L769.6,-0.7 L773.9,4.1 M773.9,4.1 L786.4,2.8 L798.9,1.5 M791.8,-21.8 L796.3,-15.9 L800.9,-10.1 M798.9,1.5 L799.9,-4.3 L800.9,-10.1 M809.0,-212.3 L789.9,-117.3 L770.8,-22.2 M809.0,-212.3 L811.0,-161.0 L813.0,-109.6 M813.0,-109.6 L802.4,-65.7 L791.8,-21.8 M817.2,-20.0 L809.0,-15.0 L800.9,-10.1 M820.6,-65.6 L816.8,-87.6 L813.0,-109.6 M735.2,-625.6 L742.3,-326.1 L749.4,-26.6 M735.2,-625.6 L735.0,-654.1 L734.9,-682.6 M749.4,-26.6 L757.1,-22.1 L764.8,-17.6 M631.3,202.8 L633.9,193.3 L636.5,183.7 M631.3,202.8 L642.0,207.5 L652.7,212.2 M636.5,183.7 L646.4,185.7 L656.3,187.7 M652.7,212.2 L656.9,205.7 L661.1,199.2 M656.3,187.7 L658.7,193.5 L661.1,199.2 M828.3,579.0 L827.4,575.6 L826.6,572.2 M828.3,579.0 L833.4,583.1 L838.5,587.3 M922.5,587.6 L878.9,572.8 L835.2,558.1 M835.2,558.1 L830.9,565.1 L826.6,572.2 M101.0,394.8 L83.3,394.0 L65.7,393.1 M65.7,393.1 L65.6,407.0 L65.6,420.8 M87.7,421.8 L76.7,421.3 L65.6,420.8 M44.0,358.1 L52.8,359.7 L61.6,361.4 M44.0,358.1 L37.4,364.6 L30.8,371.2 M65.0,392.1 L51.1,391.1 L37.2,390.2 M65.0,392.1 L67.0,380.4 L69.0,368.7 M37.2,390.2 L34.0,380.7 L30.8,371.2 M69.0,368.7 L65.3,365.0 L61.6,361.4 M68.3,577.2 L68.4,563.6 L68.5,550.0 M68.3,577.2 L83.9,574.3 L99.5,571.5 M68.5,550.0 L80.8,548.0 L93.2,546.1 M65.7,393.1 L65.3,392.6 L65.0,392.1 M69.0,368.7 L81.9,365.5 L94.8,362.3 M150.4,789.1 L151.3,775.2 L152.2,761.4 M150.4,789.1 L152.6,791.4 L154.8,793.7 M152.2,761.4 L157.0,758.1 L161.8,754.9 M185.4,778.2 L170.1,786.0 L154.8,793.7 M185.4,778.2 L182.0,767.8 L178.6,757.4 M161.8,754.9 L170.2,756.1 L178.6,757.4 M212.3,749.9 L197.5,751.5 L182.7,753.0 M217.1,755.3 L214.7,752.6 L212.3,749.9 M185.4,778.2 L189.0,780.9 L192.6,783.5 M178.6,757.4 L180.7,755.2 L182.7,753.0 M155.8,816.6 L157.1,815.2 L158.4,813.9 M158.4,813.9 L171.0,816.0 L183.5,818.1 M183.5,818.1 L195.4,853.0 L207.3,888.0 M207.3,888.0 L209.6,906.4 L211.9,924.8 M154.8,793.7 L156.6,803.8 L158.4,813.9 M184.5,817.0 L184.0,817.5 L183.5,818.1 M221.0,812.8 L214.2,850.4 L207.3,888.0 M247.4,819.5 L229.6,872.1 L211.9,924.8 M827.4,609.2 L818.8,605.3 L810.2,601.4 M808.9,636.9 L816.9,634.7 L824.8,632.5 M808.9,636.9 L805.5,624.1 L802.1,611.4 M802.1,611.4 L806.2,606.4 L810.2,601.4 M828.3,579.0 L818.4,586.9 L808.5,594.7 M808.5,594.7 L809.3,598.1 L810.2,601.4 M799.4,643.0 L801.5,642.6 L803.5,642.2 M799.4,643.0 L790.6,657.1 L781.8,671.3 M803.5,642.2 L813.6,657.9 L823.7,673.7 M781.8,671.3 L782.3,673.7 L782.8,676.2 M782.8,676.2 L798.7,678.9 L814.6,681.7 M814.6,681.7 L819.1,677.7 L823.7,673.7 M779.5,630.8 L769.9,641.9 L760.2,653.1 M779.5,630.8 L789.5,636.9 L799.4,643.0 M760.2,653.1 L771.0,662.2 L781.8,671.3 M808.9,636.9 L806.2,639.5 L803.5,642.2 M827.0,673.1 L825.4,673.4 L823.7,673.7 M716.2,686.8 L717.6,687.7 L719.0,688.5 M744.7,663.6 L745.1,673.8 L745.6,684.0 M745.6,684.0 L732.3,686.3 L719.0,688.5 M787.5,705.7 L783.1,694.5 L778.7,683.3 M787.5,705.7 L777.5,716.0 L767.4,726.3 M778.7,683.3 L767.2,688.1 L755.7,692.9 M755.7,692.9 L754.3,700.5 L752.9,708.1 M767.4,726.3 L760.1,717.2 L752.9,708.1 M760.2,653.1 L758.1,652.9 L756.0,652.7 M782.8,676.2 L780.7,679.7 L778.7,683.3 M745.6,684.0 L750.6,688.5 L755.7,692.9 M719.0,688.5 L723.3,702.8 L727.7,717.1 M727.7,717.1 L740.3,712.6 L752.9,708.1 M831.3,721.3 L818.3,723.6 L805.3,725.9 M831.3,721.3 L832.8,716.9 L834.2,712.4 M834.2,712.4 L824.3,704.3 L814.5,696.2 M814.5,696.2 L807.6,703.4 L800.8,710.6 M800.8,710.6 L803.0,718.3 L805.3,725.9 M801.2,735.3 L812.7,743.0 L824.3,750.6 M801.2,735.3 L803.2,730.6 L805.3,725.9 M824.3,750.6 L830.5,742.1 L836.6,733.5 M836.6,733.5 L834.0,727.4 L831.3,721.3 M1817.9,756.0 L1360.3,754.6 L902.7,753.1 M863.8,693.3 L849.0,702.9 L834.2,712.4 M902.7,753.1 L869.6,743.3 L836.6,733.5 M814.6,681.7 L814.5,688.9 L814.5,696.2 M787.5,705.7 L794.2,708.1 L800.8,710.6 M798.2,737.1 L783.2,734.6 L768.2,732.2 M798.2,737.1 L799.7,736.2 L801.2,735.3 M768.2,732.2 L767.8,729.2 L767.4,726.3 M696.9,716.4 L697.2,716.7 L697.5,717.0 M727.7,717.1 L727.2,717.8 L726.7,718.6 M697.5,717.0 L712.1,717.8 L726.7,718.6 M842.0,766.8 L833.3,759.6 L824.5,752.3 M842.0,766.8 L836.1,776.5 L830.1,786.3 M824.5,752.3 L814.7,762.7 L805.0,773.1 M830.1,786.3 L817.5,779.7 L805.0,773.1 M824.3,750.6 L824.4,751.5 L824.5,752.3 M902.7,753.1 L872.4,760.0 L842.0,766.8 M833.0,798.6 L831.5,792.4 L830.1,786.3 M798.2,737.1 L795.6,753.5 L793.0,770.0 M799.3,773.7 L796.1,771.8 L793.0,770.0 M799.3,773.7 L802.1,773.4 L805.0,773.1 M799.3,773.7 L799.0,790.1 L798.8,806.4 M802.2,808.6 L800.5,807.5 L798.8,806.4 M594.2,973.3 L604.0,910.1 L613.9,846.9 M613.9,846.9 L623.0,838.8 L632.0,830.6 M632.0,830.6 L640.9,839.3 L649.8,848.0 M649.8,848.0 L659.5,920.7 L669.2,993.4 M808.5,829.5 L801.0,834.2 L793.5,839.0 M793.5,839.0 L783.5,1292.6 L773.4,1746.2 M778.5,770.6 L774.0,774.4 L769.5,778.1 M778.5,770.6 L771.5,754.5 L764.5,738.3 M769.5,778.1 L756.2,770.9 L742.9,763.6 M742.9,763.6 L745.9,754.2 L748.9,744.8 M764.5,738.3 L756.7,741.5 L748.9,744.8 M768.2,732.2 L766.4,735.2 L764.5,738.3 M793.0,770.0 L785.7,770.3 L778.5,770.6 M726.7,718.6 L727.3,725.6 L727.8,732.5 M727.8,732.5 L738.4,738.6 L748.9,744.8 M594.2,973.3 L585.4,921.2 L576.6,869.1 M613.9,846.9 L606.0,833.8 L598.2,820.6 M576.6,869.1 L583.5,845.4 L590.3,821.6 M590.3,821.6 L594.3,821.1 L598.2,820.6 M632.0,830.6 L632.2,823.4 L632.3,816.3 M632.3,816.3 L617.5,816.5 L602.7,816.7 M602.7,816.7 L600.4,818.7 L598.2,820.6 M610.3,761.5 L605.9,774.5 L601.5,787.4 M610.3,761.5 L621.4,769.8 L632.6,778.1 M624.5,792.1 L628.6,785.1 L632.6,778.1 M624.5,792.1 L614.9,791.9 L605.2,791.7 M605.2,791.7 L603.4,789.6 L601.5,787.4 M634.7,813.4 L637.1,812.8 L639.6,812.3 M634.7,813.4 L629.6,802.7 L624.5,792.1 M639.6,812.3 L648.4,799.7 L657.2,787.1 M657.2,787.1 L648.1,781.7 L638.9,776.2 M638.9,776.2 L635.8,777.2 L632.6,778.1 M632.3,816.3 L633.5,814.8 L634.7,813.4 M602.7,816.7 L604.0,804.2 L605.2,791.7 M338.3,724.0 L353.5,724.1 L368.7,724.2 M338.3,724.0 L337.2,713.1 L336.1,702.2 M368.7,724.2 L369.4,711.0 L370.1,697.9 M336.1,702.2 L349.9,696.3 L363.7,690.4 M370.1,697.9 L366.9,694.2 L363.7,690.4 M309.7,667.0 L306.7,679.8 L303.7,692.7 M309.7,667.0 L321.5,667.2 L333.2,667.3 M333.2,667.3 L334.9,668.5 L336.6,669.6 M336.6,669.6 L335.5,685.1 L334.4,700.5 M334.4,700.5 L319.0,696.6 L303.7,692.7 M307.0,662.7 L308.4,664.8 L309.7,667.0 M307.0,662.7 L306.2,653.0 L305.5,643.3 M305.5,643.3 L307.6,640.6 L309.6,637.9 M309.6,637.9 L324.5,636.6 L339.4,635.4 M339.4,635.4 L336.3,651.4 L333.2,667.3 M336.1,702.2 L335.2,701.4 L334.4,700.5 M363.7,690.4 L363.2,680.3 L362.8,670.2 M362.8,670.2 L349.7,669.9 L336.6,669.6 M338.3,724.0 L337.0,725.5 L335.6,727.1 M303.3,693.0 L303.5,692.9 L303.7,692.7 M307.0,662.7 L287.6,664.2 L268.3,665.7 M305.5,643.3 L290.5,639.6 L275.4,635.8 M275.4,635.8 L271.9,650.8 L268.3,665.7 M275.4,691.5 L271.8,678.6 L268.3,665.8 M339.4,635.4 L339.4,635.3 L339.5,635.3 M366.3,666.0 L364.6,668.1 L362.8,670.2 M366.3,666.0 L363.2,653.5 L360.0,641.0 M360.0,641.0 L349.7,638.2 L339.5,635.3 M544.9,811.1 L554.4,807.0 L563.8,802.9 M544.9,811.1 L545.2,821.9 L545.5,832.7 M545.5,832.7 L551.9,834.5 L558.2,836.4 M558.2,836.4 L567.1,825.1 L575.9,813.9 M563.8,802.9 L567.7,804.2 L571.5,805.6 M571.5,805.6 L573.7,809.7 L575.9,813.9 M552.8,781.3 L558.3,792.1 L563.8,802.9 M552.8,781.3 L536.5,788.2 L520.3,795.1 M520.7,799.0 L520.5,797.1 L520.3,795.1 M520.7,799.0 L532.8,805.1 L544.9,811.1 M527.0,842.1 L536.2,837.4 L545.5,832.7 M513.0,815.4 L516.9,807.2 L520.7,799.0 M576.6,869.1 L567.4,852.7 L558.2,836.4 M590.3,821.6 L583.1,817.8 L575.9,813.9 M552.8,781.3 L553.1,780.0 L553.5,778.8 M585.3,786.4 L578.4,796.0 L571.5,805.6 M585.3,786.4 L580.3,776.2 L575.2,766.0 M575.2,766.0 L564.4,772.4 L553.5,778.8 M585.3,786.4 L593.4,786.9 L601.5,787.4 M375.2,903.8 L369.7,858.8 L364.3,813.9 M375.2,903.8 L388.4,861.4 L401.7,819.0 M364.3,813.9 L382.4,815.6 L400.5,817.3 M401.7,819.0 L401.1,818.2 L400.5,817.3 M368.6,953.7 L371.9,928.8 L375.2,903.8 M363.4,812.8 L363.8,813.4 L364.3,813.9 M371.0,790.5 L383.5,789.5 L396.0,788.4 M396.0,788.4 L398.2,802.8 L400.5,817.3 M450.3,787.5 L452.9,799.8 L455.6,812.1 M450.3,787.5 L467.1,785.9 L483.8,784.4 M455.6,812.1 L466.6,811.8 L477.7,811.5 M477.7,811.5 L480.9,798.1 L484.0,784.8 M483.8,784.4 L483.9,784.6 L484.0,784.8 M487.8,823.2 L482.7,817.3 L477.7,811.5 M519.5,794.0 L501.8,789.4 L484.0,784.8 M519.5,794.0 L519.9,794.6 L520.3,795.1 M446.4,859.8 L449.7,837.3 L452.9,814.8 M446.4,859.8 L432.4,839.1 L418.3,818.5 M452.9,814.8 L440.0,812.7 L427.1,810.7 M418.3,818.5 L422.7,814.6 L427.1,810.7 M462.6,950.3 L454.5,905.0 L446.4,859.8 M455.6,812.1 L454.2,813.5 L452.9,814.8 M401.7,819.0 L410.0,818.8 L418.3,818.5 M396.0,788.4 L396.7,787.5 L397.3,786.6 M428.0,787.5 L412.7,787.0 L397.3,786.6 M428.0,787.5 L427.6,799.1 L427.1,810.7 M456.3,634.5 L456.9,650.0 L457.5,665.6 M456.3,634.5 L471.1,636.8 L485.9,639.2 M457.5,665.6 L468.7,666.9 L479.8,668.2 M485.9,639.2 L482.9,653.7 L479.8,668.2 M482.9,693.5 L482.0,694.7 L481.0,695.9 M482.9,693.5 L483.1,682.9 L483.3,672.3 M481.0,695.9 L468.8,698.4 L456.5,700.9 M456.5,700.9 L455.0,684.7 L453.5,668.4 M457.5,665.6 L455.5,667.0 L453.5,668.4 M483.3,672.3 L481.5,670.3 L479.8,668.2 M585.0,604.8 L589.8,614.3 L594.5,623.7 M613.6,608.1 L607.5,616.7 L601.5,625.2 M601.5,625.2 L598.0,624.5 L594.5,623.7 M609.1,635.6 L605.3,630.4 L601.5,625.2 M623.1,606.7 L628.9,615.3 L634.7,624.0 M575.5,636.4 L585.0,630.1 L594.5,623.7 M829.1,169.7 L844.5,175.1 L859.9,180.6 M829.1,169.7 L831.5,157.8 L833.9,146.0 M833.9,146.0 L946.9,143.2 L1060.0,140.3 M859.9,180.6 L1027.4,167.3 L1195.0,154.1 M1195.0,154.1 L1127.5,147.2 L1060.0,140.3 M831.1,195.5 L825.7,189.7 L820.3,184.0 M831.1,195.5 L845.5,188.0 L859.9,180.6 M820.3,184.0 L820.6,179.1 L821.0,174.2 M821.0,174.2 L825.1,171.9 L829.1,169.7 M1825.4,184.6 L1510.2,169.3 L1195.0,154.1 M831.8,216.1 L830.3,214.8 L828.7,213.6 M828.7,213.6 L829.9,204.6 L831.1,195.5 M840.3,61.2 L837.1,69.5 L834.0,77.7 M834.0,77.7 L875.1,95.9 L916.1,114.1 M916.1,114.1 L988.1,127.2 L1060.0,140.3 M813.9,50.6 L808.5,48.8 L803.0,47.1 M813.9,50.6 L821.8,47.2 L829.6,43.8 M803.0,47.1 L799.6,38.2 L796.1,29.4 M829.6,43.8 L829.8,43.3 L830.0,42.8 M830.0,42.8 L824.8,28.9 L819.6,15.0 M796.1,29.4 L801.4,21.0 L806.7,12.7 M806.7,12.7 L813.1,13.8 L819.6,15.0 M840.3,61.2 L834.9,52.5 L829.6,43.8 M888.7,14.6 L859.4,28.7 L830.0,42.8 M833.0,5.8 L826.3,10.4 L819.6,15.0 M771.8,30.9 L784.0,30.2 L796.1,29.4 M771.8,30.9 L770.5,28.5 L769.2,26.1 M769.2,26.1 L771.6,15.1 L773.9,4.1 M798.9,1.5 L802.8,7.1 L806.7,12.7 M834.0,77.7 L829.1,80.6 L824.2,83.6 M813.9,50.6 L813.5,61.4 L813.0,72.3 M813.0,72.3 L818.6,77.9 L824.2,83.6 M549.4,-26.3 L555.9,-20.5 L562.4,-14.7 M549.4,-26.3 L559.0,-63.5 L568.6,-100.8 M584.2,-28.8 L576.4,-64.8 L568.6,-100.8 M584.2,-28.8 L583.0,-26.4 L581.9,-23.9 M581.9,-23.9 L572.1,-19.3 L562.4,-14.7 M652.0,127.9 L654.3,130.6 L656.7,133.2 M652.0,127.9 L652.2,114.2 L652.4,100.5 M652.4,100.5 L655.2,99.6 L657.9,98.6 M657.9,98.6 L669.6,109.6 L681.3,120.5 M656.7,133.2 L669.0,126.9 L681.3,120.5 M611.4,148.7 L609.4,161.7 L607.3,174.6 M611.4,148.7 L620.5,148.5 L629.5,148.2 M629.5,148.2 L629.7,148.4 L629.9,148.6 M629.9,148.6 L630.6,161.9 L631.2,175.2 M631.2,175.2 L619.3,174.9 L607.3,174.6 M654.9,219.5 L661.2,223.9 L667.5,228.3 M654.9,219.5 L653.8,215.9 L652.7,212.2 M680.8,199.6 L670.9,199.4 L661.1,199.2 M680.8,199.6 L683.3,206.1 L685.7,212.7 M667.5,228.3 L667.8,228.2 L668.2,228.1 M668.2,228.1 L676.9,220.4 L685.7,212.7 M694.5,183.9 L705.4,188.1 L716.3,192.2 M694.5,183.9 L689.7,186.3 L684.9,188.6 M717.1,205.4 L716.7,198.8 L716.3,192.2 M717.1,205.4 L705.1,210.3 L693.0,215.3 M684.9,188.6 L682.9,194.1 L680.8,199.6 M693.0,215.3 L689.4,214.0 L685.7,212.7 M17.9,0.7 L22.9,7.9 L27.9,15.1 M17.9,0.7 L2.1,7.0 L-13.6,13.3 M27.9,15.1 L18.3,28.3 L8.6,41.5 M8.6,41.5 L-4.8,32.0 L-18.1,22.6 M-13.6,13.3 L-15.9,17.9 L-18.1,22.6 M-7.9,-27.3 L5.0,-17.2 L17.9,-7.0 M-7.9,-27.3 L-14.3,-21.0 L-20.6,-14.6 M-20.6,-14.6 L-17.1,-0.7 L-13.6,13.3 M17.9,-7.0 L17.9,-3.1 L17.9,0.7 M-232.9,-12.2 L-127.6,6.0 L-22.3,24.2 M-232.9,-12.2 L-126.7,-13.4 L-20.6,-14.6 M-22.3,24.2 L-20.2,23.4 L-18.1,22.6 M-7.9,-27.3 L-2.1,-139.7 L3.8,-252.0 M17.9,-7.0 L23.2,-12.3 L28.5,-17.7 M28.5,-17.7 L16.1,-134.9 L3.8,-252.0 M843.3,475.7 L839.1,484.0 L834.8,492.3 M843.3,475.7 L961.1,489.0 L1078.9,502.3 M912.6,509.8 L995.8,506.0 L1078.9,502.3 M912.6,509.8 L877.2,506.7 L841.7,503.6 M841.7,503.6 L838.2,498.0 L834.8,492.3 M823.1,471.0 L833.1,473.3 L843.1,475.5 M823.1,471.0 L819.0,473.4 L815.0,475.8 M843.3,475.7 L843.2,475.6 L843.1,475.5 M834.8,492.3 L827.7,493.3 L820.7,494.3 M820.7,494.3 L817.8,485.1 L815.0,475.8 M35.5,572.3 L50.9,576.2 L66.3,580.2 M35.5,572.3 L35.2,587.5 L34.9,602.7 M34.9,602.7 L36.4,604.5 L37.9,606.3 M37.9,606.3 L50.8,606.3 L63.8,606.3 M66.3,580.2 L67.5,590.6 L68.7,600.9 M68.7,600.9 L66.3,603.6 L63.8,606.3 M32.3,567.8 L35.0,557.8 L37.7,547.8 M32.3,567.8 L33.9,570.0 L35.5,572.3 M68.3,577.2 L67.3,578.7 L66.3,580.2 M37.7,547.8 L51.0,547.4 L64.2,547.1 M68.5,550.0 L66.3,548.5 L64.2,547.1 M97.0,603.1 L82.9,602.0 L68.7,600.9 M32.3,567.8 L18.0,570.8 L3.7,573.8 M34.9,602.7 L22.0,601.0 L9.0,599.3 M9.0,599.3 L6.3,586.5 L3.7,573.8 M-85.0,472.7 L-57.1,479.1 L-29.2,485.5 M-85.0,472.7 L-54.9,459.2 L-24.9,445.7 M-29.2,485.5 L-22.5,469.8 L-15.8,454.1 M-15.8,454.1 L-20.3,449.9 L-24.9,445.7 M-1238.9,521.8 L-662.0,497.3 L-85.0,472.7 M-173.9,409.5 L-101.0,418.7 L-28.1,428.0 M-24.9,445.7 L-26.5,436.8 L-28.1,428.0 M-173.9,409.5 L-101.0,403.1 L-28.2,396.8 M-28.2,396.8 L-27.2,410.9 L-26.3,425.1 M-28.1,428.0 L-27.2,426.5 L-26.3,425.1 M-29.2,485.5 L-28.6,486.3 L-28.0,487.0 M-28.0,487.0 L-10.1,485.9 L7.8,484.8 M-15.8,454.1 L-9.3,454.6 L-2.8,455.2 M7.8,484.8 L2.5,470.0 L-2.8,455.2 M65.6,420.8 L65.1,421.3 L64.7,421.8 M92.9,455.9 L80.3,452.2 L67.7,448.5 M64.7,421.8 L66.2,435.2 L67.7,448.5 M31.0,399.9 L19.7,402.4 L8.3,404.9 M31.0,399.9 L36.9,411.9 L42.7,423.9 M42.7,423.9 L41.7,425.0 L40.7,426.1 M40.7,426.1 L25.1,425.8 L9.5,425.5 M8.3,404.9 L6.9,411.4 L5.5,417.9 M5.5,417.9 L7.5,421.7 L9.5,425.5 M0.7,394.3 L5.4,380.6 L10.0,366.9 M0.7,394.3 L4.5,399.6 L8.3,404.9 M37.2,390.2 L34.1,395.1 L31.0,399.9 M10.0,366.9 L20.4,369.0 L30.8,371.2 M64.7,421.8 L53.7,422.9 L42.7,423.9 M-24.6,391.8 L-26.4,394.3 L-28.2,396.8 M-24.6,391.8 L-12.0,393.1 L0.7,394.3 M-26.3,425.1 L-10.4,421.5 L5.5,417.9 M-2.8,455.2 L3.0,451.3 L8.7,447.5 M8.7,447.5 L9.1,436.5 L9.5,425.5 M61.6,361.4 L65.8,347.9 L70.0,334.5 M92.9,332.7 L81.5,333.6 L70.0,334.5 M37.1,333.6 L47.5,329.7 L57.8,325.8 M37.1,333.6 L40.5,345.9 L44.0,358.1 M57.8,325.8 L63.9,330.1 L70.0,334.5 M-17.9,817.4 L-17.6,817.1 L-17.4,816.9 M-17.9,817.4 L-169.2,814.5 L-320.5,811.6 M-17.4,816.9 L-21.8,802.5 L-26.3,788.2 M-26.3,788.2 L-173.4,799.9 L-320.5,811.6 M-1238.9,521.8 L-708.0,533.3 L-177.1,544.7 M-32.3,607.2 L-29.4,603.2 L-26.6,599.2 M-177.1,544.7 L-136.8,550.6 L-96.4,556.5 M-96.4,556.5 L-61.5,571.1 L-26.6,585.8 M-26.6,599.2 L-26.6,592.5 L-26.6,585.8 M125.0,821.4 L140.4,819.0 L155.8,816.6 M125.0,821.4 L110.4,868.1 L95.8,914.8 M84.4,991.4 L90.1,953.1 L95.8,914.8 M123.7,819.4 L123.3,803.5 L122.9,787.7 M123.7,819.4 L107.6,814.0 L91.5,808.6 M91.5,808.6 L95.3,795.7 L99.2,782.9 M99.2,782.9 L109.4,783.8 L119.5,784.8 M119.5,784.8 L121.2,786.2 L122.9,787.7 M125.0,821.4 L124.3,820.4 L123.7,819.4 M150.4,789.1 L136.6,788.4 L122.9,787.7 M89.1,810.7 L92.4,862.7 L95.8,914.8 M89.1,810.7 L90.3,809.6 L91.5,808.6 M152.2,761.4 L141.5,758.8 L130.9,756.1 M130.9,756.1 L125.2,770.5 L119.5,784.8 M86.7,513.5 L89.8,501.0 L92.8,488.6 M64.2,547.1 L65.4,530.4 L66.7,513.6 M86.7,513.5 L76.7,513.5 L66.7,513.6 M37.7,547.8 L37.3,547.0 L36.8,546.1 M36.8,546.1 L37.2,534.4 L37.7,522.7 M37.7,522.7 L51.2,517.6 L64.8,512.4 M66.7,513.6 L65.7,513.0 L64.8,512.4 M92.8,488.6 L89.7,483.9 L86.6,479.2 M755.2,621.5 L766.7,624.1 L778.1,626.7 M778.1,626.7 L780.4,619.6 L782.6,612.5 M779.5,630.8 L778.8,628.7 L778.1,626.7 M743.0,630.2 L749.1,625.9 L755.2,621.5 M751.8,976.8 L740.8,910.1 L729.8,843.3 M751.8,976.8 L758.2,906.9 L764.6,837.0 M729.8,843.3 L736.4,836.9 L742.9,830.5 M764.6,837.0 L753.8,833.7 L742.9,830.5 M793.5,839.0 L782.4,834.1 L771.3,829.2 M773.4,1746.2 L762.6,1361.5 L751.8,976.8 M771.3,829.2 L767.9,833.1 L764.6,837.0 M798.8,806.4 L790.4,807.8 L782.0,809.2 M769.5,778.1 L768.9,779.8 L768.4,781.5 M768.4,781.5 L775.2,795.4 L782.0,809.2 M771.3,829.2 L771.7,824.4 L772.2,819.6 M782.0,809.2 L777.1,814.4 L772.2,819.6 M679.4,923.2 L674.3,958.3 L669.2,993.4 M679.4,923.2 L693.5,875.3 L707.5,827.4 M729.8,843.3 L719.0,835.4 L708.3,827.4 M707.5,827.4 L707.9,827.4 L708.3,827.4 M657.2,787.1 L659.4,786.8 L661.7,786.5 M638.9,776.2 L642.1,763.7 L645.3,751.2 M645.3,751.2 L656.5,752.6 L667.7,754.0 M661.7,786.5 L664.7,770.3 L667.7,754.0 M585.2,757.3 L586.6,740.6 L588.0,723.9 M585.2,757.3 L597.6,758.9 L610.0,760.5 M613.0,754.9 L610.7,743.8 L608.3,732.6 M613.0,754.9 L611.5,757.7 L610.0,760.5 M608.3,732.6 L598.2,728.2 L588.0,723.9 M610.3,761.5 L610.2,761.0 L610.0,760.5 M575.2,766.0 L575.6,764.6 L576.0,763.2 M576.0,763.2 L580.6,760.3 L585.2,757.3 M625.5,722.8 L616.9,727.7 L608.3,732.6 M640.0,733.9 L640.5,740.2 L641.0,746.6 M641.0,746.6 L627.0,750.8 L613.0,754.9 M641.0,746.6 L643.2,748.9 L645.3,751.2 M587.9,722.2 L587.9,723.0 L587.9,723.8 M587.9,723.8 L588.0,723.8 L588.0,723.9 M564.8,731.7 L562.9,740.0 L561.0,748.3 M564.8,731.7 L555.1,724.7 L545.5,717.6 M561.0,748.3 L548.3,750.9 L535.5,753.6 M545.5,717.6 L536.6,734.2 L527.7,750.9 M535.5,753.6 L531.6,752.2 L527.7,750.9 M587.9,723.8 L576.4,727.8 L564.8,731.7 M576.0,763.2 L568.5,755.8 L561.0,748.3 M568.6,700.1 L556.8,707.5 L544.9,714.8 M544.9,714.8 L545.2,716.2 L545.5,717.6 M553.5,778.8 L544.5,766.2 L535.5,753.6 M428.5,698.0 L412.5,696.3 L396.4,694.6 M428.5,698.0 L428.1,683.1 L427.8,668.2 M425.2,665.7 L426.5,666.9 L427.8,668.2 M425.2,665.7 L411.4,669.0 L397.6,672.3 M397.6,672.3 L397.0,683.4 L396.4,694.6 M429.2,699.1 L428.9,698.6 L428.5,698.0 M429.2,699.1 L442.1,700.7 L455.1,702.3 M456.5,700.9 L455.8,701.6 L455.1,702.3 M453.5,668.4 L440.6,668.3 L427.8,668.2 M423.9,640.0 L424.6,652.9 L425.2,665.7 M423.9,640.0 L438.5,635.6 L453.1,631.2 M453.1,631.2 L454.7,632.9 L456.3,634.5 M387.3,664.4 L392.4,668.3 L397.6,672.3 M387.3,664.4 L391.4,650.7 L395.5,637.0 M395.5,637.0 L409.2,638.1 L422.9,639.2 M422.9,639.2 L423.4,639.6 L423.9,640.0 M387.3,664.4 L376.8,665.2 L366.3,666.0 M370.1,697.9 L383.2,696.3 L396.4,694.6 M396.4,694.6 L396.4,694.6 L396.4,694.6 M428.0,787.5 L430.2,785.7 L432.3,783.9 M450.3,787.5 L448.7,786.0 L447.2,784.4 M447.2,784.4 L439.7,784.2 L432.3,783.9 M429.2,699.1 L424.9,712.4 L420.5,725.6 M396.4,694.6 L397.3,707.7 L398.3,720.8 M420.5,725.6 L409.4,723.2 L398.3,720.8 M396.0,606.5 L394.7,620.5 L393.4,634.4 M366.7,606.2 L368.2,618.7 L369.7,631.3 M393.4,634.4 L381.5,632.8 L369.7,631.3 M395.5,637.0 L394.4,635.7 L393.4,634.4 M360.0,641.0 L364.8,636.1 L369.7,631.3 M339.5,635.3 L339.4,623.9 L339.3,612.4 M483.8,602.3 L487.7,618.9 L491.5,635.4 M453.1,631.2 L454.2,620.9 L455.2,610.5 M485.9,639.2 L488.7,637.3 L491.5,635.4 M422.9,639.2 L421.0,621.9 L419.2,604.7 M569.4,686.6 L555.8,683.5 L542.3,680.4 M544.9,714.8 L540.5,710.7 L536.0,706.6 M536.0,706.6 L539.2,693.5 L542.3,680.4 M482.9,693.5 L497.0,695.2 L511.1,696.8 M481.0,695.9 L484.3,708.7 L487.7,721.4 M511.1,696.8 L514.3,701.7 L517.4,706.6 M517.4,706.6 L513.3,713.5 L509.2,720.5 M487.7,721.4 L498.4,720.9 L509.2,720.5 M527.7,750.9 L524.3,751.6 L520.9,752.4 M517.4,706.6 L526.7,706.6 L536.0,706.6 M509.2,720.5 L515.0,736.4 L520.9,752.4 M519.5,794.0 L520.1,773.2 L520.7,752.5 M520.7,752.5 L520.8,752.4 L520.9,752.4 M509.7,638.0 L511.4,652.8 L513.1,667.6 M509.7,638.0 L516.2,633.5 L522.6,629.1 M522.6,629.1 L526.3,628.6 L529.9,628.1 M529.9,628.1 L537.0,644.0 L544.1,659.8 M544.1,659.8 L540.7,665.5 L537.3,671.2 M537.3,671.2 L526.9,670.9 L516.6,670.7 M513.1,667.6 L514.8,669.1 L516.6,670.7 M491.5,635.4 L500.6,636.7 L509.7,638.0 M483.3,672.3 L498.2,670.0 L513.1,667.6 M505.7,601.7 L514.2,615.4 L522.6,629.1 M533.4,625.4 L531.6,626.8 L529.9,628.1 M533.4,625.4 L536.4,617.7 L539.4,610.1 M559.2,655.8 L551.6,657.8 L544.1,659.8 M568.1,634.7 L568.5,635.1 L568.9,635.6 M568.1,634.7 L550.7,630.0 L533.4,625.4 M542.3,680.4 L539.8,675.8 L537.3,671.2 M511.1,696.8 L513.8,683.7 L516.6,670.7 M568.1,634.7 L568.1,621.3 L568.1,608.0 M840.2,453.0 L832.1,450.2 L824.0,447.3 M840.2,453.0 L841.7,464.3 L843.1,475.5 M823.1,471.0 L823.5,459.2 L823.8,447.4 M823.8,447.4 L823.9,447.3 L824.0,447.3 M832.6,331.8 L826.0,334.8 L819.5,337.7 M819.5,337.7 L819.4,337.9 L819.3,338.0 M819.3,338.0 L823.1,350.8 L826.8,363.6 M855.7,343.6 L845.6,353.3 L835.4,363.0 M835.4,363.0 L831.1,363.3 L826.8,363.6 M819.5,337.7 L813.3,331.2 L807.2,324.7 M819.3,338.0 L809.3,344.9 L799.3,351.7 M833.5,315.2 L825.4,309.3 L817.3,303.3 M807.2,324.7 L812.3,314.0 L817.3,303.3 M828.0,286.2 L822.2,293.3 L816.3,300.4 M817.3,303.3 L816.8,301.8 L816.3,300.4 M715.6,159.3 L728.3,160.7 L740.9,162.0 M715.6,159.3 L717.0,174.4 L718.4,189.4 M740.9,162.0 L739.5,172.1 L738.1,182.3 M718.4,189.4 L728.3,185.8 L738.1,182.3 M694.5,183.9 L695.5,170.9 L696.5,158.0 M716.3,192.2 L717.4,190.8 L718.4,189.4 M696.5,158.0 L704.2,157.0 L711.9,155.9 M711.9,155.9 L713.8,157.6 L715.6,159.3 M828.7,213.6 L826.2,213.8 L823.7,214.0 M820.3,184.0 L809.0,190.8 L797.7,197.6 M797.7,197.6 L797.7,197.7 L797.7,197.9 M823.7,214.0 L810.7,205.9 L797.7,197.9 M794.3,190.5 L781.8,184.5 L769.2,178.4 M794.3,190.5 L797.2,177.4 L800.0,164.2 M788.4,158.5 L794.2,161.3 L800.0,164.2 M788.4,158.5 L778.8,165.4 L769.2,172.2 M769.2,172.2 L769.2,175.3 L769.2,178.4 M821.0,174.2 L812.8,168.8 L804.7,163.3 M804.7,163.3 L802.3,163.7 L800.0,164.2 M797.7,197.6 L796.0,194.1 L794.3,190.5 M785.2,146.2 L777.2,142.3 L769.1,138.4 M785.2,146.2 L786.8,152.3 L788.4,158.5 M769.1,138.4 L761.1,147.7 L753.1,157.0 M753.1,157.0 L761.2,164.6 L769.2,172.2 M804.7,163.3 L810.0,154.6 L815.4,145.8 M785.2,146.2 L792.5,138.2 L799.8,130.1 M799.8,130.1 L807.6,138.0 L815.4,145.8 M833.9,146.0 L831.9,144.7 L829.8,143.5 M829.8,143.5 L822.6,144.7 L815.4,145.8 M771.7,88.3 L764.1,77.8 L756.4,67.4 M771.7,88.3 L780.4,84.0 L789.0,79.8 M756.4,67.4 L768.6,62.7 L780.9,58.1 M789.0,79.8 L789.8,77.5 L790.6,75.3 M790.6,75.3 L787.8,67.6 L784.9,59.8 M784.9,59.8 L782.9,58.9 L780.9,58.1 M803.0,47.1 L794.0,53.4 L784.9,59.8 M813.0,72.3 L801.8,73.8 L790.6,75.3 M771.8,30.9 L771.6,32.1 L771.3,33.2 M771.3,33.2 L776.1,45.6 L780.9,58.1 M747.3,156.7 L742.4,146.0 L737.4,135.3 M747.3,156.7 L744.1,159.4 L740.9,162.0 M711.9,155.9 L715.3,146.0 L718.7,136.1 M718.7,136.1 L728.1,135.7 L737.4,135.3 M769.1,138.4 L767.3,131.6 L765.6,124.8 M765.6,124.8 L756.9,121.7 L748.3,118.5 M753.1,157.0 L750.2,156.9 L747.3,156.7 M737.4,135.3 L742.9,126.9 L748.3,118.5 M611.4,93.6 L613.4,107.0 L615.3,120.4 M611.4,93.6 L623.7,93.2 L635.9,92.8 M641.0,98.0 L638.4,95.4 L635.9,92.8 M641.0,98.0 L634.0,110.1 L627.0,122.2 M627.0,122.2 L621.1,121.3 L615.3,120.4 M629.9,125.5 L640.9,126.7 L652.0,127.9 M629.9,125.5 L628.4,123.8 L627.0,122.2 M652.4,100.5 L646.7,99.3 L641.0,98.0 M586.1,117.9 L587.5,106.8 L588.9,95.8 M586.1,117.9 L573.7,116.2 L561.3,114.4 M561.3,114.4 L561.2,105.1 L561.2,95.9 M588.5,95.5 L588.7,95.6 L588.9,95.8 M588.5,95.5 L576.6,94.2 L564.6,92.9 M564.6,92.9 L562.9,94.4 L561.2,95.9 M629.9,125.5 L629.7,136.8 L629.5,148.2 M611.4,148.7 L609.5,146.8 L607.6,144.9 M615.3,120.4 L613.0,121.8 L610.6,123.3 M607.6,144.9 L609.1,134.1 L610.6,123.3 M608.0,91.1 L598.4,93.4 L588.9,95.8 M608.0,91.1 L609.7,92.4 L611.4,93.6 M586.1,117.9 L586.4,118.5 L586.7,119.2 M610.6,123.3 L598.7,121.2 L586.7,119.2 M593.3,36.9 L597.0,48.7 L600.7,60.6 M593.3,36.9 L587.4,37.5 L581.5,38.2 M581.5,38.2 L577.0,45.1 L572.6,52.1 M572.6,52.1 L576.1,59.4 L579.6,66.7 M600.7,60.6 L591.3,64.0 L581.9,67.4 M579.6,66.7 L580.8,67.0 L581.9,67.4 M608.0,91.1 L609.2,77.8 L610.5,64.6 M610.5,64.6 L605.6,62.6 L600.7,60.6 M588.5,95.5 L585.2,81.5 L581.9,67.4 M563.5,75.1 L564.1,84.0 L564.6,92.9 M563.5,75.1 L571.6,70.9 L579.6,66.7 M563.5,75.1 L556.6,71.5 L549.7,68.0 M572.6,52.1 L563.9,50.7 L555.3,49.3 M555.3,49.3 L552.5,58.7 L549.7,68.0 M570.0,11.3 L564.6,4.6 L559.3,-2.1 M570.0,11.3 L577.5,9.1 L585.0,7.0 M559.3,-2.1 L560.8,-8.4 L562.4,-14.7 M581.9,-23.9 L585.2,-11.6 L588.4,0.6 M585.0,7.0 L586.7,3.8 L588.4,0.6 M564.9,22.9 L573.2,30.5 L581.5,38.2 M564.9,22.9 L567.4,17.1 L570.0,11.3 M593.3,36.9 L597.0,32.3 L600.6,27.6 M585.0,7.0 L592.8,17.3 L600.6,27.6 M608.7,-23.3 L616.4,-31.3 L624.2,-39.4 M608.7,-23.3 L610.9,-13.8 L613.1,-4.4 M613.1,-4.4 L616.0,-2.1 L619.0,0.1 M619.0,0.1 L629.4,-8.8 L639.7,-17.7 M624.2,-39.4 L631.9,-28.5 L639.7,-17.7 M584.2,-28.8 L596.4,-26.1 L608.7,-23.3 M568.6,-100.8 L549.3,-619.1 L530.1,-1137.5 M644.6,-265.1 L634.4,-152.2 L624.2,-39.4 M588.4,0.6 L600.7,-1.9 L613.1,-4.4 M600.6,27.6 L606.1,26.7 L611.6,25.8 M611.6,25.8 L615.4,22.3 L619.2,18.9 M619.2,18.9 L620.5,14.3 L621.8,9.8 M621.8,9.8 L620.4,4.9 L619.0,0.1 M653.8,147.6 L653.6,155.2 L653.4,162.8 M653.8,147.6 L655.0,146.2 L656.2,144.8 M656.2,144.8 L670.0,149.3 L683.8,153.7 M653.4,162.8 L660.1,168.6 L666.8,174.4 M683.8,153.7 L676.7,164.0 L669.5,174.2 M669.5,174.2 L668.2,174.3 L666.8,174.4 M633.6,176.9 L643.5,169.8 L653.4,162.8 M633.6,176.9 L632.4,176.0 L631.2,175.2 M629.9,148.6 L641.9,148.1 L653.8,147.6 M656.7,133.2 L656.5,139.0 L656.2,144.8 M636.5,183.7 L635.1,180.3 L633.6,176.9 M656.3,187.7 L661.5,181.1 L666.8,174.4 M684.9,188.6 L677.2,181.4 L669.5,174.2 M696.5,158.0 L691.8,155.3 L687.0,152.7 M687.0,152.7 L685.4,153.2 L683.8,153.7 M684.0,120.7 L686.2,123.6 L688.4,126.4 M684.0,120.7 L688.6,111.1 L693.2,101.5 M688.4,126.4 L700.8,127.1 L713.1,127.8 M693.2,101.5 L706.1,104.9 L719.0,108.4 M719.0,108.4 L716.1,118.1 L713.1,127.8 M687.0,152.7 L687.7,139.5 L688.4,126.4 M681.3,120.5 L682.7,120.6 L684.0,120.7 M718.7,136.1 L715.9,131.9 L713.1,127.8 M724.8,104.2 L721.9,106.3 L719.0,108.4 M724.8,104.2 L734.4,106.4 L744.0,108.6 M744.0,108.6 L746.1,113.6 L748.3,118.5 M520.9,238.2 L518.9,230.6 L516.8,223.0 M487.7,251.1 L488.6,234.8 L489.5,218.5 M489.5,218.5 L503.1,220.8 L516.8,223.0 M532.4,240.5 L543.7,233.8 L555.0,227.2 M554.0,219.7 L554.5,223.4 L555.0,227.2 M554.0,219.7 L549.7,214.5 L545.4,209.4 M545.4,209.4 L534.5,211.3 L523.5,213.2 M516.8,223.0 L520.1,218.1 L523.5,213.2 M457.2,242.8 L456.5,229.4 L455.8,216.0 M455.8,216.0 L456.3,215.5 L456.9,215.0 M489.5,218.5 L488.0,216.8 L486.4,215.1 M456.9,215.0 L471.7,215.1 L486.4,215.1 M421.8,97.3 L424.0,99.9 L426.1,102.4 M421.8,97.3 L409.1,99.0 L396.4,100.7 M449.6,-38.6 L452.2,-32.3 L454.7,-26.0 M449.6,-38.6 L434.0,-30.8 L418.4,-23.0 M454.7,-26.0 L452.8,-18.3 L450.9,-10.6 M450.9,-10.6 L439.7,-6.6 L428.4,-2.6 M418.4,-23.0 L418.0,-19.6 L417.6,-16.1 M417.6,-16.1 L419.2,-12.1 L420.8,-8.1 M420.8,-8.1 L424.6,-5.3 L428.4,-2.6 M450.9,-10.6 L456.5,-5.4 L462.0,-0.1 M462.0,-0.1 L459.2,8.6 L456.4,17.4 M456.4,17.4 L450.9,18.2 L445.5,19.0 M445.5,19.0 L437.5,11.1 L429.5,3.1 M428.4,-2.6 L429.0,0.3 L429.5,3.1 M634.7,234.6 L644.8,227.0 L654.9,219.5 M688.6,243.4 L693.1,236.6 L697.5,229.7 M697.5,229.7 L705.5,232.4 L713.4,235.1 M668.2,228.1 L678.4,235.8 L688.6,243.4 M693.0,215.3 L695.3,222.5 L697.5,229.7 M717.1,205.4 L719.7,208.2 L722.3,211.0 M722.3,211.0 L721.5,220.9 L720.6,230.8 M720.6,230.8 L717.0,232.9 L713.4,235.1 M720.6,230.8 L725.8,234.6 L731.0,238.4 M555.0,227.2 L559.3,232.2 L563.5,237.2 M634.7,234.6 L628.9,231.8 L623.2,229.1 M631.3,202.8 L626.6,205.9 L621.8,208.9 M623.2,229.1 L622.5,219.0 L621.8,208.9 M603.1,177.7 L586.9,181.6 L570.8,185.5 M603.1,177.7 L604.1,189.9 L605.1,202.1 M570.8,185.5 L575.5,195.9 L580.2,206.4 M580.2,206.4 L585.0,208.9 L589.7,211.5 M589.7,211.5 L597.4,206.8 L605.1,202.1 M607.3,174.6 L605.4,175.8 L603.4,177.0 M603.1,177.7 L603.2,177.4 L603.4,177.0 M621.8,208.9 L613.5,205.5 L605.1,202.1 M-27.1,55.5 L-23.4,60.0 L-19.8,64.4 M-27.1,55.5 L-464.0,21.4 L-900.9,-12.7 M-19.8,64.4 L-31.9,77.1 L-43.9,89.8 M-900.9,-12.7 L-472.4,38.6 L-43.9,89.8 M-22.3,24.2 L-24.7,39.9 L-27.1,55.5 M-581.9,161.8 L-561.6,161.0 L-541.4,160.2 M-541.4,160.2 L-286.2,141.6 L-31.1,123.0 M-43.9,89.8 L-40.5,92.6 L-37.1,95.4 M-37.1,95.4 L-34.1,109.2 L-31.1,123.0 M8.6,41.5 L9.2,45.0 L9.9,48.4 M-19.8,64.4 L-19.3,64.5 L-18.8,64.7 M9.9,48.4 L-4.5,56.5 L-18.8,64.7 M-541.4,160.2 L-285.5,155.7 L-29.6,151.2 M-31.1,123.0 L-28.6,124.9 L-26.0,126.9 M-26.0,126.9 L-26.5,138.0 L-27.1,149.2 M-29.6,151.2 L-28.3,150.2 L-27.1,149.2 M-581.9,161.8 L-346.5,178.1 L-111.1,194.3 M-111.1,194.3 L-70.6,186.7 L-30.0,179.0 M-29.6,151.2 L-29.8,165.1 L-30.0,179.0 M3.8,-252.0 L3.6,-337.1 L3.4,-422.3 M912.6,509.8 L874.4,517.7 L836.2,525.6 M841.7,503.6 L836.2,510.0 L830.8,516.4 M836.2,525.6 L833.5,521.0 L830.8,516.4 M817.4,499.4 L819.0,496.9 L820.7,494.3 M817.4,499.4 L819.7,506.6 L822.1,513.7 M822.1,513.7 L826.4,515.1 L830.8,516.4 M815.0,475.8 L814.0,475.6 L813.0,475.4 M813.0,447.1 L818.4,447.2 L823.8,447.4 M813.0,447.1 L807.7,454.6 L802.4,462.1 M813.0,475.4 L807.7,468.7 L802.4,462.1 M813.0,447.1 L806.5,441.1 L800.0,435.1 M817.4,499.4 L807.4,499.5 L797.4,499.6 M808.5,524.4 L815.3,519.1 L822.1,513.7 M130.9,756.1 L128.8,753.1 L126.7,750.0 M-23.3,636.9 L-22.7,649.9 L-22.1,662.9 M-23.3,636.9 L-10.4,633.1 L2.5,629.3 M11.2,634.9 L6.9,632.1 L2.5,629.3 M11.2,634.9 L7.5,650.0 L3.8,665.1 M3.8,665.1 L-9.1,664.0 L-22.1,662.9 M-32.3,607.2 L-29.4,621.0 L-26.6,634.7 M-26.6,634.7 L-24.9,635.8 L-23.3,636.9 M1.1,609.7 L-12.7,604.4 L-26.6,599.2 M1.1,609.7 L1.8,619.5 L2.5,629.3 M27.9,634.8 L32.9,620.5 L37.9,606.3 M27.9,634.8 L19.5,634.9 L11.2,634.9 M9.0,599.3 L5.1,604.5 L1.1,609.7 M67.2,635.2 L80.4,636.8 L93.6,638.5 M67.2,635.2 L65.5,620.7 L63.8,606.3 M-96.4,556.5 L-63.7,553.3 L-30.9,550.1 M-26.6,585.8 L-21.6,580.9 L-16.5,576.1 M-30.9,550.1 L-23.7,563.1 L-16.5,576.1 M3.7,573.8 L2.3,573.0 L0.9,572.3 M0.9,572.3 L-7.8,574.2 L-16.5,576.1 M-24.2,512.2 L-9.7,511.4 L4.9,510.6 M-24.2,512.2 L-25.3,513.7 L-26.3,515.2 M-26.3,515.2 L-23.2,527.0 L-20.0,538.8 M4.9,510.6 L6.5,512.3 L8.1,513.9 M8.1,513.9 L7.0,526.1 L6.0,538.3 M-20.0,538.8 L-10.7,541.5 L-1.3,544.2 M6.0,538.3 L2.3,541.3 L-1.3,544.2 M-28.0,487.0 L-26.1,499.6 L-24.2,512.2 M8.1,485.1 L7.9,484.9 L7.8,484.8 M8.1,485.1 L6.5,497.8 L4.9,510.6 M-177.1,544.7 L-101.7,530.0 L-26.3,515.2 M-30.9,550.1 L-25.5,544.4 L-20.0,538.8 M36.8,546.1 L21.4,542.2 L6.0,538.3 M30.0,514.7 L33.8,518.7 L37.7,522.7 M30.0,514.7 L19.0,514.3 L8.1,513.9 M0.9,572.3 L-0.2,558.2 L-1.3,544.2 M38.2,485.5 L47.2,486.8 L56.2,488.0 M38.2,485.5 L35.4,483.1 L32.7,480.7 M32.7,480.7 L33.0,467.5 L33.3,454.2 M56.2,488.0 L59.6,484.7 L63.0,481.5 M63.0,481.5 L61.9,468.0 L60.8,454.6 M60.8,454.6 L47.7,453.9 L34.5,453.3 M33.3,454.2 L33.9,453.8 L34.5,453.3 M30.0,514.7 L34.1,500.1 L38.2,485.5 M64.8,512.4 L60.5,500.2 L56.2,488.0 M8.1,485.1 L20.4,482.9 L32.7,480.7 M8.7,447.5 L21.0,450.8 L33.3,454.2 M86.6,479.2 L74.8,480.3 L63.0,481.5 M67.7,448.5 L64.2,451.5 L60.8,454.6 M40.7,426.1 L37.6,439.7 L34.5,453.3 M0.7,281.2 L0.0,293.2 L-0.7,305.3 M0.7,281.2 L-13.0,280.0 L-26.7,278.9 M-26.7,278.9 L-28.6,293.0 L-30.5,307.1 M-0.7,305.3 L-15.6,306.2 L-30.5,307.1 M89.1,810.7 L79.3,810.0 L69.5,809.4 M58.2,868.6 L71.3,930.0 L84.4,991.4 M58.2,868.6 L59.9,843.7 L61.6,818.7 M61.6,818.7 L65.6,814.1 L69.5,809.4 M100.8,752.2 L113.8,751.1 L126.7,750.0 M100.8,752.2 L97.0,758.6 L93.2,764.9 M99.2,782.9 L97.6,780.9 L95.9,778.9 M93.2,764.9 L94.6,771.9 L95.9,778.9 M69.5,809.4 L64.3,798.0 L59.1,786.6 M95.9,778.9 L77.5,782.7 L59.1,786.6 M273.0,631.9 L276.2,620.2 L279.3,608.5 M275.4,635.8 L274.2,633.9 L273.0,631.9 M307.2,608.9 L308.4,623.4 L309.6,637.9 M700.4,822.5 L698.5,817.8 L696.6,813.1 M700.4,822.5 L689.4,828.3 L678.5,834.0 M696.6,813.1 L686.6,806.9 L676.7,800.8 M676.7,800.8 L669.6,811.6 L662.6,822.4 M678.5,834.0 L671.0,829.7 L663.5,825.4 M662.6,822.4 L663.1,823.9 L663.5,825.4 M679.4,923.2 L678.9,878.6 L678.5,834.0 M707.5,827.4 L703.9,825.0 L700.4,822.5 M639.6,812.3 L651.1,817.3 L662.6,822.4 M661.7,786.5 L668.0,789.9 L674.3,793.2 M674.3,793.2 L675.5,797.0 L676.7,800.8 M649.8,848.0 L656.7,836.7 L663.5,825.4 M742.9,830.5 L741.0,822.9 L739.1,815.4 M772.2,819.6 L762.0,813.1 L751.8,806.6 M739.1,815.4 L745.4,811.0 L751.8,806.6 M708.3,827.4 L718.1,819.8 L728.0,812.1 M739.1,815.4 L733.5,813.7 L728.0,812.1 M768.4,781.5 L760.2,788.0 L751.9,794.5 M751.9,794.5 L751.8,800.5 L751.8,806.6 M696.6,813.1 L703.9,801.5 L711.1,789.8 M728.0,812.1 L726.1,803.9 L724.2,795.6 M711.1,789.8 L717.7,792.7 L724.2,795.6 M742.9,763.6 L739.6,765.6 L736.3,767.6 M751.9,794.5 L744.7,790.8 L737.4,787.1 M736.3,767.6 L736.9,777.3 L737.4,787.1 M737.4,787.1 L730.8,791.3 L724.2,795.6 M447.2,784.4 L452.9,770.7 L458.6,756.9 M432.3,783.9 L428.5,770.1 L424.6,756.3 M458.6,756.9 L441.6,756.6 L424.6,756.3 M397.3,786.6 L397.3,773.7 L397.3,760.7 M397.3,760.7 L408.8,756.6 L420.2,752.4 M424.6,756.3 L422.4,754.3 L420.2,752.4 M369.2,724.6 L381.5,724.1 L393.8,723.6 M369.2,724.6 L370.1,739.4 L370.9,754.2 M393.8,723.6 L394.7,741.5 L395.5,759.5 M370.9,754.2 L383.2,756.9 L395.5,759.5 M368.7,724.2 L369.0,724.4 L369.2,724.6 M398.3,720.8 L396.0,722.2 L393.8,723.6 M368.0,756.3 L369.5,755.3 L370.9,754.2 M420.5,725.6 L422.4,728.8 L424.3,732.1 M397.3,760.7 L396.4,760.1 L395.5,759.5 M424.3,732.1 L422.3,742.2 L420.2,752.4 M840.2,453.0 L852.5,446.0 L864.7,438.9 M1344.7,509.7 L1211.8,506.0 L1078.9,502.3 M864.7,438.9 L1325.2,424.2 L1785.7,409.5 M847.9,379.9 L841.7,371.5 L835.4,363.0 M847.9,379.9 L1172.9,392.1 L1497.8,404.4 M1785.7,409.5 L1641.8,406.9 L1497.8,404.4 M824.0,447.3 L827.2,437.9 L830.4,428.4 M804.3,420.0 L817.3,424.2 L830.4,428.4 M864.7,438.9 L849.2,432.5 L833.7,426.1 M830.4,428.4 L832.0,427.2 L833.7,426.1 M799.3,351.7 L807.1,360.8 L814.9,369.8 M801.0,383.8 L808.0,376.8 L814.9,369.8 M826.8,363.6 L823.7,366.2 L820.7,368.9 M814.9,369.8 L817.8,369.4 L820.7,368.9 M765.6,124.8 L772.6,119.4 L779.6,114.0 M799.8,130.1 L799.8,129.8 L799.8,129.5 M799.8,129.5 L789.7,121.7 L779.6,114.0 M748.6,100.8 L759.5,96.6 L770.3,92.4 M748.6,100.8 L746.3,104.7 L744.0,108.6 M770.3,92.4 L775.3,101.8 L780.2,111.2 M780.2,111.2 L779.9,112.6 L779.6,114.0 M770.3,92.4 L771.0,90.4 L771.7,88.3 M789.0,79.8 L794.4,89.1 L799.9,98.4 M780.2,111.2 L790.0,104.8 L799.9,98.4 M739.3,7.5 L739.1,8.0 L738.8,8.6 M739.3,7.5 L735.6,-5.5 L731.9,-18.5 M738.8,8.6 L729.5,10.1 L720.2,11.6 M720.2,11.6 L715.1,4.5 L709.9,-2.6 M709.9,-2.6 L713.6,-10.9 L717.2,-19.1 M731.9,-18.5 L728.0,-19.8 L724.2,-21.1 M724.2,-21.1 L720.7,-20.1 L717.2,-19.1 M769.2,26.1 L756.6,23.4 L744.0,20.8 M765.3,-5.6 L752.3,1.0 L739.3,7.5 M744.0,20.8 L741.4,14.7 L738.8,8.6 M749.4,-26.6 L740.6,-22.5 L731.9,-18.5 M735.2,-625.6 L729.7,-323.4 L724.2,-21.1 M734.9,-682.6 L717.6,-355.5 L700.4,-28.4 M700.4,-28.4 L708.8,-23.8 L717.2,-19.1 M607.6,144.9 L599.4,145.3 L591.1,145.7 M586.7,119.2 L585.1,125.1 L583.6,131.0 M583.6,131.0 L587.3,138.3 L591.1,145.7 M548.1,127.6 L548.1,127.3 L548.2,127.1 M548.1,127.6 L556.4,133.1 L564.8,138.7 M548.2,127.1 L554.7,120.7 L561.3,114.4 M583.6,131.0 L574.2,134.8 L564.8,138.7 M603.4,177.0 L594.1,167.0 L584.8,156.9 M591.1,145.7 L588.0,151.3 L584.8,156.9 M611.6,25.8 L616.7,38.2 L621.7,50.5 M619.2,18.9 L629.9,26.3 L640.6,33.6 M640.6,33.6 L639.8,37.9 L639.0,42.1 M639.0,42.1 L630.4,46.3 L621.7,50.5 M610.5,64.6 L614.0,63.0 L617.6,61.5 M617.6,61.5 L619.7,56.0 L621.7,50.5 M635.9,92.8 L636.6,82.0 L637.3,71.2 M617.6,61.5 L627.4,66.4 L637.3,71.2 M450.3,82.1 L451.4,85.9 L452.4,89.7 M450.3,82.1 L437.8,81.1 L425.2,80.0 M425.2,80.0 L423.5,88.7 L421.8,97.3 M426.1,102.4 L433.1,102.9 L440.1,103.4 M440.1,103.4 L446.2,96.5 L452.4,89.7 M418.4,-23.0 L403.9,-55.8 L389.4,-88.6 M417.6,-16.1 L401.2,-16.1 L384.9,-16.0 M384.9,-16.0 L387.2,-52.3 L389.4,-88.6 M239.6,-46.7 L256.8,-31.6 L274.0,-16.5 M239.6,-46.7 L238.5,-26.7 L237.4,-6.6 M237.4,-6.6 L252.6,-3.8 L267.8,-1.0 M267.8,-1.0 L270.9,-8.8 L274.0,-16.5 M212.0,-107.1 L203.2,-174.8 L194.3,-242.5 M212.0,-107.1 L225.8,-76.9 L239.6,-46.7 M194.3,-242.5 L182.3,-957.3 L170.2,-1672.2 M344.9,-1475.5 L322.3,-767.6 L299.6,-59.7 M299.6,-59.7 L288.9,-39.2 L278.1,-18.7 M274.0,-16.5 L276.1,-17.6 L278.1,-18.7 M420.8,-8.1 L409.5,0.7 L398.3,9.5 M429.5,3.1 L424.3,14.0 L419.2,24.9 M419.2,24.9 L411.7,23.8 L404.3,22.7 M404.3,22.7 L401.3,16.1 L398.3,9.5 M523.5,213.2 L518.9,201.4 L514.2,189.6 M493.9,192.4 L490.2,203.8 L486.4,215.1 M493.9,192.4 L503.1,190.5 L512.3,188.5 M512.3,188.5 L513.3,189.0 L514.2,189.6 M484.0,160.3 L470.0,156.4 L456.1,152.5 M484.0,160.3 L482.9,169.3 L481.8,178.3 M481.8,178.3 L469.8,183.3 L457.7,188.2 M451.3,157.5 L453.7,155.0 L456.1,152.5 M451.3,157.5 L454.1,172.4 L456.9,187.4 M456.9,187.4 L457.3,187.8 L457.7,188.2 M493.9,192.4 L487.9,185.3 L481.8,178.3 M456.9,215.0 L457.3,201.6 L457.7,188.2 M449.0,127.4 L451.6,128.4 L454.3,129.4 M454.3,129.4 L455.2,141.0 L456.1,152.5 M483.2,51.6 L492.6,59.0 L502.0,66.5 M483.2,51.6 L478.3,52.7 L473.4,53.7 M502.0,66.5 L492.8,73.8 L483.6,81.2 M483.6,81.2 L477.2,75.5 L470.8,69.7 M473.4,53.7 L472.1,61.7 L470.8,69.7 M437.8,35.2 L446.4,41.0 L455.0,46.8 M437.8,35.2 L432.3,36.5 L426.8,37.8 M426.8,37.8 L425.2,40.8 L423.7,43.8 M423.7,43.8 L426.6,51.3 L429.4,58.9 M429.4,58.9 L438.0,59.8 L446.6,60.7 M446.6,60.7 L450.8,53.7 L455.0,46.8 M466.6,27.8 L461.5,22.6 L456.4,17.4 M466.6,27.8 L464.2,36.4 L461.7,45.0 M445.5,19.0 L441.7,27.1 L437.8,35.2 M461.7,45.0 L458.3,45.9 L455.0,46.8 M419.2,24.9 L423.0,31.4 L426.8,37.8 M409.0,47.7 L402.5,41.8 L395.9,35.8 M409.0,47.7 L416.4,45.8 L423.7,43.8 M404.3,22.7 L400.1,29.2 L395.9,35.8 M421.1,74.1 L425.2,66.5 L429.4,58.9 M421.1,74.1 L423.1,77.0 L425.2,80.0 M450.3,82.1 L451.2,79.8 L452.2,77.6 M452.2,77.6 L449.4,69.1 L446.6,60.7 M461.7,45.0 L467.5,49.4 L473.4,53.7 M452.2,77.6 L461.5,73.7 L470.8,69.7 M577.2,234.7 L583.5,226.2 L589.7,217.8 M589.7,217.8 L599.3,228.5 L608.9,239.3 M563.5,237.2 L570.4,235.9 L577.2,234.7 M554.0,219.7 L567.1,213.0 L580.2,206.4 M589.7,211.5 L589.7,214.6 L589.7,217.8 M623.2,229.1 L616.0,234.2 L608.9,239.3 M103.1,64.2 L96.7,65.2 L90.2,66.2 M103.1,64.2 L106.8,50.3 L110.4,36.3 M90.2,66.2 L81.7,60.5 L73.3,54.8 M70.0,42.6 L71.6,48.7 L73.3,54.8 M70.0,42.6 L76.7,34.7 L83.4,26.8 M83.4,26.8 L96.9,31.6 L110.4,36.3 M103.1,64.2 L110.6,69.1 L118.1,74.0 M118.1,74.0 L130.1,63.7 L142.0,53.3 M142.0,53.3 L140.7,47.1 L139.4,40.8 M139.4,40.8 L127.6,36.7 L115.8,32.7 M110.4,36.3 L113.1,34.5 L115.8,32.7 M212.0,-107.1 L209.8,-92.8 L207.6,-78.5 M194.3,-242.5 L173.3,-145.1 L152.4,-47.8 M152.4,-47.8 L157.3,-28.5 L162.2,-9.2 M207.6,-78.5 L196.2,-47.4 L184.9,-16.3 M184.9,-16.3 L174.1,-12.4 L163.4,-8.6 M162.2,-9.2 L162.8,-8.9 L163.4,-8.6 M-37.1,95.4 L-24.0,96.0 L-10.9,96.7 M-26.0,126.9 L-14.6,121.5 L-3.1,116.2 M-10.9,96.7 L-7.0,106.5 L-3.1,116.2 M-18.8,64.7 L-12.0,74.8 L-5.2,84.9 M-10.9,96.7 L-8.0,90.8 L-5.2,84.9 M188.5,65.0 L180.1,63.6 L171.7,62.2 M188.5,65.0 L194.3,59.4 L200.0,53.9 M171.7,62.2 L172.4,44.1 L173.1,26.1 M200.0,53.9 L197.0,37.4 L194.1,21.0 M194.1,21.0 L185.9,21.7 L177.7,22.3 M173.1,26.1 L175.4,24.2 L177.7,22.3 M163.2,66.3 L160.1,77.9 L157.0,89.5 M163.2,66.3 L167.5,64.2 L171.7,62.2 M157.0,89.5 L172.0,95.6 L187.1,101.7 M198.8,85.8 L192.9,93.8 L187.1,101.7 M198.8,85.8 L193.6,75.4 L188.5,65.0 M198.8,85.8 L207.9,86.3 L217.1,86.8 M217.1,86.8 L224.2,71.7 L231.3,56.6 M231.3,56.6 L230.9,56.0 L230.6,55.3 M230.6,55.3 L215.3,54.6 L200.0,53.9 M142.0,53.3 L152.6,59.8 L163.2,66.3 M139.4,40.8 L144.7,34.1 L150.1,27.5 M150.1,27.5 L161.6,26.8 L173.1,26.1 M150.1,27.5 L144.0,14.4 L137.9,1.2 M137.9,1.2 L150.1,-4.0 L162.2,-9.2 M163.4,-8.6 L170.5,6.8 L177.7,22.3 M92.1,239.6 L93.6,237.2 L95.1,234.8 M1.9,155.8 L1.4,166.8 L0.9,177.8 M1.9,155.8 L-12.6,152.5 L-27.1,149.2 M-30.0,179.0 L-25.7,182.5 L-21.4,185.9 M-21.4,185.9 L-10.3,181.9 L0.9,177.8 M188.7,114.0 L203.1,119.1 L217.5,124.3 M188.7,114.0 L185.4,117.8 L182.2,121.6 M212.2,150.1 L199.1,151.8 L186.1,153.4 M212.2,150.1 L214.8,137.2 L217.5,124.3 M182.2,121.6 L182.2,135.8 L182.2,150.0 M186.1,153.4 L184.1,151.7 L182.2,150.0 M216.9,180.1 L217.5,168.3 L218.2,156.6 M216.9,180.1 L215.9,180.9 L215.0,181.8 M218.2,156.6 L215.2,153.4 L212.2,150.1 M215.0,181.8 L199.4,182.3 L183.9,182.8 M183.9,182.8 L183.2,182.3 L182.6,181.7 M186.1,153.4 L184.3,167.6 L182.6,181.7 M28.5,-17.7 L37.4,-17.9 L46.3,-18.1 M3.4,-422.3 L31.7,-235.1 L60.0,-47.9 M46.3,-18.1 L53.1,-33.0 L60.0,-47.9 M60.9,128.0 L60.4,138.9 L60.0,149.8 M60.9,128.0 L62.6,125.6 L64.2,123.1 M64.2,123.1 L67.3,121.5 L70.3,119.9 M70.3,119.9 L82.9,123.0 L95.4,126.1 M60.0,149.8 L74.7,151.9 L89.5,154.1 M95.4,126.1 L95.5,137.5 L95.6,148.8 M89.5,154.1 L92.5,151.5 L95.6,148.8 M81.7,90.4 L77.9,92.2 L74.1,94.0 M81.7,90.4 L92.0,97.4 L102.2,104.5 M102.2,104.5 L100.2,113.9 L98.2,123.4 M98.2,123.4 L96.8,124.8 L95.4,126.1 M74.1,94.0 L72.2,106.9 L70.3,119.9 M98.2,123.4 L112.2,125.4 L126.3,127.4 M117.0,155.2 L122.2,151.2 L127.5,147.3 M117.0,155.2 L106.3,152.0 L95.6,148.8 M126.3,127.4 L126.9,137.3 L127.5,147.3 M87.7,184.2 L89.6,185.3 L91.6,186.4 M87.7,184.2 L88.6,169.2 L89.5,154.1 M91.6,186.4 L106.6,183.6 L121.6,180.7 M121.6,180.7 L119.3,168.0 L117.0,155.2 M835.2,558.1 L835.1,557.8 L835.1,557.5 M1344.7,509.7 L1094.1,525.8 L843.5,541.8 M835.1,557.5 L839.3,549.7 L843.5,541.8 M836.2,525.6 L835.8,527.5 L835.4,529.5 M843.5,541.8 L839.5,535.7 L835.4,529.5 M826.6,572.2 L814.7,568.5 L802.9,564.9 M-23.4,688.3 L-24.6,677.9 L-25.8,667.5 M-23.4,688.3 L-59.5,700.5 L-95.7,712.6 M-25.8,667.5 L-114.2,664.1 L-202.6,660.6 M-95.7,712.6 L-334.2,728.2 L-572.8,743.8 M-24.9,721.3 L-60.3,717.0 L-95.7,712.6 M-24.9,721.3 L-20.9,708.1 L-16.8,694.9 M-16.8,694.9 L-20.1,691.6 L-23.4,688.3 M-26.6,634.7 L-114.6,647.6 L-202.6,660.6 M-22.1,662.9 L-23.9,665.2 L-25.8,667.5 M67.2,635.2 L64.9,637.5 L62.7,639.8 M27.9,634.8 L28.9,635.8 L29.9,636.7 M29.9,636.7 L46.3,638.2 L62.7,639.8 M61.7,669.7 L62.2,654.7 L62.7,639.8 M61.7,669.7 L63.1,671.3 L64.6,673.0 M64.6,673.0 L77.4,669.9 L90.2,666.9 M10.7,673.6 L8.8,682.9 L6.9,692.2 M10.7,673.6 L22.4,670.6 L34.1,667.6 M34.1,667.6 L34.3,667.8 L34.5,667.9 M34.5,667.9 L34.9,685.9 L35.3,703.9 M6.9,692.2 L20.5,698.6 L34.0,705.0 M34.0,705.0 L34.6,704.5 L35.3,703.9 M-16.8,694.9 L-7.2,695.0 L2.4,695.1 M2.4,695.1 L4.7,693.6 L6.9,692.2 M3.8,665.1 L7.3,669.3 L10.7,673.6 M29.9,636.7 L32.0,652.2 L34.1,667.6 M61.7,669.7 L48.1,668.8 L34.5,667.9 M64.6,673.0 L64.7,684.3 L64.9,695.7 M64.9,695.7 L50.1,699.8 L35.3,703.9 M36.3,333.2 L31.4,322.3 L26.6,311.4 M36.3,333.2 L20.2,339.5 L4.2,345.8 M26.6,311.4 L15.0,311.2 L3.5,311.1 M3.5,311.1 L0.2,324.0 L-3.2,336.8 M-3.2,336.8 L0.5,341.3 L4.2,345.8 M-24.6,391.8 L-26.9,381.4 L-29.2,371.0 M10.0,366.9 L7.4,363.3 L4.7,359.7 M4.7,359.7 L-12.2,365.3 L-29.2,371.0 M37.1,333.6 L36.7,333.4 L36.3,333.2 M4.7,359.7 L4.4,352.7 L4.2,345.8 M-892.4,319.0 L-864.3,319.1 L-836.1,319.1 M-836.1,319.1 L-435.1,342.9 L-34.1,366.7 M-29.2,371.0 L-31.6,368.9 L-34.1,366.7 M-127.8,315.8 L-77.4,327.7 L-27.0,339.7 M-127.8,315.8 L-79.5,311.8 L-31.3,307.9 M-31.3,307.9 L-26.5,321.8 L-21.8,335.7 M-27.0,339.7 L-24.4,337.7 L-21.8,335.7 M-836.1,319.1 L-592.3,313.6 L-348.5,308.0 M-348.5,308.0 L-238.1,311.9 L-127.8,315.8 M-34.1,366.7 L-30.5,353.2 L-27.0,339.7 M-33.3,271.9 L-190.9,290.0 L-348.5,308.0 M-33.3,271.9 L-30.0,275.4 L-26.7,278.9 M-30.5,307.1 L-30.9,307.5 L-31.3,307.9 M3.5,311.1 L1.4,308.2 L-0.7,305.3 M-3.2,336.8 L-12.5,336.2 L-21.8,335.7 M38.4,810.9 L39.1,797.8 L39.9,784.7 M38.4,810.9 L34.2,815.7 L29.9,820.5 M39.9,784.7 L24.7,789.2 L9.5,793.8 M29.9,820.5 L20.9,820.3 L11.8,820.2 M9.5,793.8 L7.3,803.7 L5.1,813.7 M11.8,820.2 L8.4,816.9 L5.1,813.7 M58.2,868.6 L44.0,844.6 L29.9,820.5 M61.6,818.7 L50.0,814.8 L38.4,810.9 M-17.4,816.9 L-6.1,815.3 L5.1,813.7 M-26.3,788.2 L-26.1,787.9 L-25.9,787.7 M-25.9,787.7 L-11.5,786.6 L2.9,785.5 M2.9,785.5 L6.2,789.6 L9.5,793.8 M2.9,725.5 L4.8,726.9 L6.6,728.3 M2.9,725.5 L-9.2,725.7 L-21.2,725.9 M6.6,728.3 L8.7,741.1 L10.7,753.9 M-21.2,725.9 L-22.9,740.3 L-24.5,754.7 M-24.5,754.7 L-23.4,755.7 L-22.4,756.7 M-22.4,756.7 L-9.5,757.7 L3.3,758.7 M10.7,753.9 L7.0,756.3 L3.3,758.7 M2.4,695.1 L2.6,710.3 L2.9,725.5 M32.6,716.6 L19.6,722.5 L6.6,728.3 M32.6,716.6 L33.3,710.8 L34.0,705.0 M-24.9,721.3 L-23.1,723.6 L-21.2,725.9 M-572.8,743.8 L-298.7,749.3 L-24.5,754.7 M-25.9,787.7 L-24.1,772.2 L-22.4,756.7 M2.9,785.5 L3.1,772.1 L3.3,758.7 M32.6,716.6 L33.3,717.7 L34.0,718.7 M65.7,696.4 L65.3,696.0 L64.9,695.7 M65.7,696.4 L65.2,713.7 L64.7,731.1 M34.0,718.7 L49.3,724.9 L64.7,731.1 M40.1,784.3 L47.9,784.4 L55.6,784.5 M40.1,784.3 L35.1,770.8 L30.2,757.2 M55.6,784.5 L62.2,769.8 L68.7,755.0 M30.2,757.2 L32.8,754.5 L35.3,751.9 M35.3,751.9 L49.2,748.4 L63.0,744.9 M68.7,755.0 L65.9,749.9 L63.0,744.9 M59.1,786.6 L57.4,785.6 L55.6,784.5 M39.9,784.7 L40.0,784.5 L40.1,784.3 M10.7,753.9 L20.4,755.5 L30.2,757.2 M93.2,764.9 L81.0,759.9 L68.7,755.0 M34.0,718.7 L34.7,735.3 L35.3,751.9 M66.4,734.3 L64.7,739.6 L63.0,744.9 M66.4,734.3 L65.5,732.7 L64.7,731.1 M94.3,728.4 L80.4,731.3 L66.4,734.3 M245.4,210.5 L247.3,227.7 L249.1,244.9 M245.4,210.5 L257.9,212.6 L270.3,214.7 M216.9,180.1 L230.6,184.8 L244.4,189.6 M218.2,156.6 L231.7,156.5 L245.2,156.4 M244.4,189.6 L245.6,188.1 L246.9,186.6 M245.2,156.4 L247.5,157.9 L249.8,159.5 M246.9,186.6 L248.3,173.0 L249.8,159.5 M715.3,763.3 L710.0,769.3 L704.7,775.4 M715.3,763.3 L714.2,755.4 L713.1,747.6 M713.1,747.6 L705.8,744.0 L698.4,740.4 M695.1,775.0 L685.0,762.7 L675.0,750.3 M695.1,775.0 L699.9,775.2 L704.7,775.4 M698.4,740.4 L687.0,744.7 L675.6,749.1 M675.6,749.1 L675.3,749.7 L675.0,750.3 M711.1,789.8 L707.9,782.6 L704.7,775.4 M736.3,767.6 L725.8,765.4 L715.3,763.3 M727.8,732.5 L720.5,740.0 L713.1,747.6 M697.5,717.0 L698.0,728.7 L698.4,740.4 M674.3,793.2 L684.7,784.1 L695.1,775.0 M667.7,754.0 L671.4,752.1 L675.0,750.3 M669.7,722.9 L672.6,736.0 L675.6,749.1 M457.3,729.9 L471.1,727.5 L484.9,725.0 M457.3,729.9 L457.0,730.3 L456.8,730.7 M456.8,730.7 L459.0,742.9 L461.2,755.0 M484.9,725.0 L488.5,740.2 L492.1,755.4 M461.2,755.0 L471.9,758.7 L482.7,762.5 M482.7,762.5 L487.4,758.9 L492.1,755.4 M455.1,702.3 L456.2,716.1 L457.3,729.9 M487.7,721.4 L486.3,723.2 L484.9,725.0 M424.3,732.1 L440.6,731.4 L456.8,730.7 M458.6,756.9 L459.9,755.9 L461.2,755.0 M520.7,752.5 L506.4,753.9 L492.1,755.4 M483.8,784.4 L483.2,773.4 L482.7,762.5 M847.0,406.4 L840.9,412.3 L834.7,418.1 M847.0,406.4 L841.3,398.6 L835.6,390.8 M834.7,418.1 L828.1,410.5 L821.6,402.9 M835.6,390.8 L833.2,390.8 L830.8,390.8 M830.8,390.8 L826.6,394.4 L822.3,397.9 M821.6,402.9 L822.0,400.4 L822.3,397.9 M1497.8,404.4 L1172.4,405.4 L847.0,406.4 M833.7,426.1 L834.2,422.1 L834.7,418.1 M847.9,379.9 L841.7,385.4 L835.6,390.8 M804.9,415.8 L813.2,409.4 L821.6,402.9 M820.7,368.9 L825.8,379.9 L830.8,390.8 M801.4,385.2 L811.9,391.5 L822.3,397.9 M816.3,300.4 L809.0,297.9 L801.7,295.4 M811.4,267.6 L809.6,267.4 L807.9,267.2 M797.7,197.9 L793.4,203.5 L789.1,209.0 M769.2,178.4 L765.7,183.5 L762.1,188.7 M789.1,209.0 L782.9,210.3 L776.8,211.6 M776.8,211.6 L769.4,200.2 L762.1,188.7 M738.1,182.3 L744.8,187.1 L751.5,191.9 M722.3,211.0 L733.3,211.4 L744.4,211.8 M744.4,211.8 L747.9,201.9 L751.5,191.9 M751.5,191.9 L756.8,190.3 L762.1,188.7 M804.6,231.0 L802.4,230.5 L800.3,229.9 M804.6,231.0 L807.9,236.0 L811.2,240.9 M800.3,229.9 L794.0,234.7 L787.8,239.4 M811.2,240.9 L806.5,250.6 L801.9,260.3 M823.7,214.0 L814.1,222.5 L804.6,231.0 M789.1,209.0 L794.7,219.5 L800.3,229.9 M830.5,244.6 L820.9,242.7 L811.2,240.9 M811.5,116.8 L807.9,108.2 L804.3,99.6 M811.5,116.8 L819.1,117.6 L826.7,118.3 M836.8,110.2 L830.3,97.5 L823.9,84.7 M836.8,110.2 L831.8,114.3 L826.7,118.3 M823.9,84.7 L814.1,92.2 L804.3,99.6 M799.8,129.5 L805.7,123.1 L811.5,116.8 M799.9,98.4 L802.1,99.0 L804.3,99.6 M829.8,143.5 L828.3,130.9 L826.7,118.3 M916.1,114.1 L876.5,112.2 L836.8,110.2 M824.2,83.6 L824.0,84.1 L823.9,84.7 M771.3,33.2 L759.0,43.2 L746.7,53.2 M756.4,67.4 L755.8,67.2 L755.3,67.1 M746.7,53.2 L751.0,60.1 L755.3,67.1 M744.0,20.8 L738.9,32.3 L733.8,43.8 M733.8,43.8 L735.3,46.1 L736.7,48.5 M746.7,53.2 L741.7,50.9 L736.7,48.5 M748.6,100.8 L746.8,90.2 L745.0,79.6 M755.3,67.1 L750.1,73.3 L745.0,79.6 M657.9,98.6 L664.4,90.0 L670.8,81.4 M637.3,71.2 L645.4,67.0 L653.6,62.8 M670.8,81.4 L662.2,72.1 L653.6,62.8 M639.0,42.1 L646.5,51.2 L654.0,60.2 M653.6,62.8 L653.8,61.5 L654.0,60.2 M720.2,11.6 L715.6,19.1 L710.9,26.6 M733.8,43.8 L726.7,41.5 L719.6,39.2 M710.9,26.6 L715.2,32.9 L719.6,39.2 M663.6,-61.6 L672.3,-42.2 L681.0,-22.7 M663.6,-61.6 L657.0,-38.7 L650.3,-15.8 M681.0,-22.7 L667.3,-17.6 L653.6,-12.4 M650.3,-15.8 L652.0,-14.1 L653.6,-12.4 M644.6,-265.1 L654.1,-163.4 L663.6,-61.6 M700.4,-28.4 L692.7,-24.5 L685.1,-20.6 M685.1,-20.6 L683.0,-21.7 L681.0,-22.7 M639.7,-17.7 L645.0,-16.7 L650.3,-15.8 M621.8,9.8 L633.6,9.5 L645.4,9.2 M653.6,-12.4 L654.4,-8.9 L655.1,-5.4 M645.4,9.2 L650.3,1.9 L655.1,-5.4 M640.6,33.6 L646.5,29.9 L652.4,26.2 M645.4,9.2 L648.9,17.7 L652.4,26.2 M663.7,49.6 L658.9,54.9 L654.0,60.2 M663.7,49.6 L661.9,38.6 L660.1,27.7 M652.4,26.2 L656.3,27.0 L660.1,27.7 M692.5,1.2 L690.1,-0.5 L687.8,-2.2 M692.5,1.2 L693.9,13.1 L695.4,24.9 M687.8,-2.2 L679.1,1.7 L670.3,5.5 M670.3,5.5 L669.8,14.1 L669.3,22.7 M669.3,22.7 L678.7,26.5 L688.2,30.2 M688.2,30.2 L691.8,27.6 L695.4,24.9 M709.9,-2.6 L701.2,-0.7 L692.5,1.2 M685.1,-20.6 L686.4,-11.4 L687.8,-2.2 M710.9,26.6 L703.2,25.8 L695.4,24.9 M655.1,-5.4 L662.7,0.1 L670.3,5.5 M660.1,27.7 L664.7,25.2 L669.3,22.7 M663.7,49.6 L675.0,49.3 L686.3,48.9 M686.3,48.9 L687.3,39.6 L688.2,30.2 M488.4,156.7 L486.1,141.7 L483.7,126.6 M488.4,156.7 L498.9,156.3 L509.3,155.9 M509.3,155.9 L510.6,141.4 L511.9,127.0 M483.7,126.6 L497.8,126.8 L511.9,127.0 M512.0,157.6 L512.1,173.1 L512.3,188.5 M512.0,157.6 L510.6,156.8 L509.3,155.9 M484.0,160.3 L486.2,158.5 L488.4,156.7 M541.4,134.0 L526.8,130.3 L512.3,126.6 M541.4,134.0 L538.5,145.4 L535.7,156.8 M512.3,126.6 L512.1,126.8 L511.9,127.0 M535.7,156.8 L523.8,157.2 L512.0,157.6 M549.4,-26.3 L542.2,-23.1 L535.1,-20.0 M559.3,-2.1 L550.2,-0.8 L541.1,0.6 M535.1,-20.0 L534.2,-18.2 L533.4,-16.4 M533.4,-16.4 L537.2,-7.9 L541.1,0.6 M507.6,-23.2 L513.8,-35.4 L520.0,-47.6 M507.6,-23.2 L497.6,-21.9 L487.6,-20.7 M485.8,-22.3 L483.9,-151.7 L482.0,-281.1 M485.8,-22.3 L486.1,-21.8 L486.3,-21.3 M520.0,-47.6 L516.8,-396.5 L513.6,-745.4 M486.3,-21.3 L487.0,-21.0 L487.6,-20.7 M513.6,-745.4 L497.8,-513.3 L482.0,-281.1 M535.1,-20.0 L527.5,-33.8 L520.0,-47.6 M533.4,-16.4 L525.5,-14.3 L517.7,-12.2 M517.7,-12.2 L512.6,-17.7 L507.6,-23.2 M500.0,6.2 L506.1,4.6 L512.1,2.9 M500.0,6.2 L493.8,-7.2 L487.6,-20.7 M517.7,-12.2 L514.9,-4.6 L512.1,2.9 M449.6,-38.6 L465.8,-159.8 L482.0,-281.1 M454.7,-26.0 L470.2,-24.1 L485.8,-22.3 M462.0,-0.1 L466.3,-0.5 L470.5,-0.9 M470.5,-0.9 L478.4,-11.1 L486.3,-21.3 M530.1,-1137.5 L521.8,-941.4 L513.6,-745.4 M344.9,-1475.5 L351.7,-1183.3 L358.5,-891.1 M358.5,-891.1 L372.9,-495.0 L387.3,-99.0 M387.3,-99.0 L388.4,-93.8 L389.4,-88.6 M564.9,22.9 L561.3,24.8 L557.6,26.7 M555.3,49.3 L553.6,46.1 L551.8,42.9 M557.6,26.7 L554.7,34.8 L551.8,42.9 M541.1,0.6 L537.6,7.4 L534.1,14.1 M557.6,26.7 L545.9,20.4 L534.1,14.1 M512.1,2.9 L521.4,9.3 L530.7,15.6 M534.1,14.1 L532.4,14.9 L530.7,15.6 M470.5,-0.9 L476.6,5.3 L482.6,11.6 M500.0,6.2 L500.0,6.3 L500.0,6.3 M482.6,11.6 L491.3,8.9 L500.0,6.3 M466.6,27.8 L472.2,26.1 L477.7,24.4 M482.6,11.6 L480.2,18.0 L477.7,24.4 M483.2,51.6 L487.5,43.5 L491.7,35.5 M477.7,24.4 L484.7,29.9 L491.7,35.5 M421.1,74.1 L411.7,72.5 L402.3,71.0 M409.0,47.7 L404.6,57.8 L400.2,67.9 M402.3,71.0 L401.3,69.5 L400.2,67.9 M396.4,100.7 L395.0,99.4 L393.6,98.1 M402.3,71.0 L398.0,84.6 L393.6,98.1 M393.6,98.1 L386.9,97.9 L380.1,97.7 M515.2,105.8 L523.5,103.5 L531.8,101.2 M515.2,105.8 L511.1,102.9 L507.0,100.0 M507.0,100.0 L508.6,86.3 L510.3,72.7 M531.8,101.2 L534.3,97.0 L536.9,92.7 M536.9,92.7 L536.0,83.8 L535.0,75.0 M535.0,75.0 L522.7,73.8 L510.3,72.7 M548.1,127.6 L544.7,130.8 L541.4,134.0 M548.2,127.1 L540.0,114.2 L531.8,101.2 M512.3,126.6 L513.7,116.2 L515.2,105.8 M561.2,95.9 L549.0,94.3 L536.9,92.7 M549.7,68.0 L542.8,70.9 L535.8,73.9 M535.8,73.9 L535.4,74.4 L535.0,75.0 M499.6,100.1 L491.4,94.4 L483.1,88.6 M499.6,100.1 L490.2,111.9 L480.8,123.7 M483.1,88.6 L475.4,94.4 L467.7,100.2 M467.7,100.2 L468.6,110.2 L469.4,120.2 M480.8,123.7 L475.1,122.0 L469.4,120.2 M503.7,66.4 L502.9,66.5 L502.0,66.5 M503.7,66.4 L507.0,69.6 L510.3,72.7 M483.6,81.2 L483.4,84.9 L483.1,88.6 M507.0,100.0 L503.3,100.0 L499.6,100.1 M483.7,126.6 L482.2,125.2 L480.8,123.7 M452.4,89.7 L460.1,94.9 L467.7,100.2 M454.3,129.4 L461.9,124.8 L469.4,120.2 M384.9,-16.0 L384.4,-15.4 L383.9,-14.8 M398.3,9.5 L392.9,7.9 L387.4,6.4 M383.9,-14.8 L385.7,-4.2 L387.4,6.4 M187.1,101.7 L187.9,107.8 L188.7,114.0 M217.5,124.3 L219.6,122.8 L221.7,121.3 M217.1,86.8 L220.8,91.7 L224.6,96.6 M221.7,121.3 L223.1,108.9 L224.6,96.6 M245.2,156.4 L244.5,141.1 L243.8,125.8 M221.7,121.3 L232.7,123.5 L243.8,125.8 M299.6,-59.7 L308.4,-40.9 L317.3,-22.1 M278.1,-18.7 L290.7,-14.1 L303.3,-9.5 M303.3,-9.5 L310.3,-15.8 L317.3,-22.1 M540.0,161.8 L541.8,171.2 L543.5,180.6 M540.0,161.8 L553.7,158.7 L567.4,155.6 M569.4,184.7 L571.2,172.3 L573.0,159.9 M569.4,184.7 L559.7,185.9 L550.1,187.1 M550.1,187.1 L546.8,183.9 L543.5,180.6 M567.4,155.6 L570.2,157.7 L573.0,159.9 M535.7,156.8 L537.9,159.3 L540.0,161.8 M514.2,189.6 L528.9,185.1 L543.5,180.6 M564.8,138.7 L566.1,147.2 L567.4,155.6 M570.8,185.5 L570.1,185.1 L569.4,184.7 M584.8,156.9 L578.9,158.4 L573.0,159.9 M545.4,209.4 L547.8,198.3 L550.1,187.1 M204.0,6.9 L209.1,3.5 L214.2,0.0 M204.0,6.9 L201.6,12.2 L199.2,17.4 M199.2,17.4 L215.5,28.2 L231.8,38.9 M214.2,0.0 L221.7,0.2 L229.2,0.3 M229.2,0.3 L235.6,13.6 L242.1,26.9 M242.1,26.9 L236.9,32.9 L231.8,38.9 M207.6,-78.5 L210.9,-39.3 L214.2,0.0 M184.9,-16.3 L194.4,-4.7 L204.0,6.9 M194.1,21.0 L196.6,19.2 L199.2,17.4 M230.6,55.3 L231.2,47.1 L231.8,38.9 M237.4,-6.6 L233.3,-3.2 L229.2,0.3 M261.1,23.5 L251.6,25.2 L242.1,26.9 M261.1,23.5 L265.4,16.1 L269.7,8.8 M269.7,8.8 L268.8,3.9 L267.8,-1.0 M3.3,154.7 L16.1,152.8 L28.8,150.9 M3.3,154.7 L2.5,136.4 L1.7,118.1 M1.7,118.1 L3.4,117.7 L5.1,117.3 M5.1,117.3 L17.1,124.3 L29.2,131.3 M28.8,150.9 L29.0,141.1 L29.2,131.3 M1.9,155.8 L2.6,155.3 L3.3,154.7 M0.9,177.8 L2.4,179.2 L3.8,180.6 M3.8,180.6 L18.3,183.7 L32.7,186.7 M32.7,153.7 L32.7,170.2 L32.7,186.7 M32.7,153.7 L30.8,152.3 L28.8,150.9 M-3.1,116.2 L-0.7,117.2 L1.7,118.1 M35.8,125.0 L32.5,128.1 L29.2,131.3 M35.8,125.0 L48.4,126.5 L60.9,128.0 M57.4,152.2 L45.1,152.9 L32.7,153.7 M57.4,152.2 L58.7,151.0 L60.0,149.8 M18.2,80.2 L21.5,88.8 L24.7,97.4 M18.2,80.2 L21.5,71.5 L24.9,62.8 M24.9,62.8 L26.1,62.6 L27.3,62.4 M27.3,62.4 L40.0,67.6 L52.7,72.9 M52.7,72.9 L54.4,80.0 L56.0,87.1 M56.0,87.1 L50.0,93.5 L44.0,100.0 M24.7,97.4 L30.2,99.7 L35.6,101.9 M35.6,101.9 L39.8,100.9 L44.0,100.0 M-5.2,84.9 L6.5,82.5 L18.2,80.2 M5.1,117.3 L14.9,107.4 L24.7,97.4 M9.9,48.4 L17.4,55.6 L24.9,62.8 M27.9,15.1 L35.2,16.7 L42.5,18.3 M42.5,18.3 L46.6,26.4 L50.7,34.6 M50.7,34.6 L39.0,48.5 L27.3,62.4 M70.0,42.6 L60.3,38.6 L50.7,34.6 M73.3,54.8 L63.0,63.8 L52.7,72.9 M90.2,66.2 L85.9,78.3 L81.7,90.4 M74.1,94.0 L65.1,90.5 L56.0,87.1 M64.2,123.1 L54.1,111.5 L44.0,100.0 M35.8,125.0 L35.7,113.4 L35.6,101.9 M93.0,273.0 L82.5,271.5 L72.1,270.0 M92.1,239.6 L76.7,244.1 L61.2,248.6 M61.2,248.6 L66.7,259.3 L72.1,270.0 M93.2,225.9 L96.7,219.8 L100.2,213.8 M93.2,225.9 L78.4,220.2 L63.6,214.5 M100.2,213.8 L95.9,200.1 L91.6,186.4 M87.7,184.2 L80.3,186.1 L73.0,188.0 M63.6,214.5 L68.3,201.2 L73.0,188.0 M3.8,180.6 L3.7,196.6 L3.5,212.6 M32.7,186.7 L33.1,187.1 L33.4,187.6 M3.5,212.6 L18.7,212.1 L34.0,211.7 M34.0,211.7 L33.7,199.6 L33.4,187.6 M57.4,152.2 L59.1,165.9 L60.8,179.7 M33.4,187.6 L47.1,183.6 L60.8,179.7 M73.0,188.0 L66.9,183.9 L60.8,179.7 M127.1,184.4 L138.0,182.7 L149.0,181.0 M127.1,184.4 L125.3,196.9 L123.5,209.5 M157.1,214.8 L144.9,217.4 L132.7,219.9 M157.1,214.8 L156.7,200.7 L156.3,186.5 M156.3,186.5 L152.6,183.8 L149.0,181.0 M123.5,209.5 L128.1,214.7 L132.7,219.9 M121.6,180.7 L124.3,182.6 L127.1,184.4 M127.5,147.3 L139.5,150.0 L151.5,152.8 M151.5,152.8 L150.2,166.9 L149.0,181.0 M100.2,213.8 L111.8,211.6 L123.5,209.5 M127.9,238.2 L130.3,229.0 L132.7,219.9 M162.6,239.2 L160.3,227.4 L157.9,215.6 M157.9,215.6 L157.5,215.2 L157.1,214.8 M182.2,150.0 L168.7,149.8 L155.1,149.5 M182.6,181.7 L169.4,184.1 L156.3,186.5 M155.1,149.5 L153.3,151.2 L151.5,152.8 M95.1,234.8 L94.2,230.4 L93.2,225.9 M131.3,121.9 L142.1,121.9 L152.9,121.8 M131.3,121.9 L127.0,106.6 L122.7,91.3 M154.7,91.2 L139.0,90.6 L123.3,90.1 M154.7,91.2 L154.3,106.0 L153.8,120.8 M153.8,120.8 L153.4,121.3 L152.9,121.8 M123.3,90.1 L123.0,90.7 L122.7,91.3 M126.3,127.4 L128.8,124.7 L131.3,121.9 M155.1,149.5 L154.0,135.7 L152.9,121.8 M102.2,104.5 L112.5,97.9 L122.7,91.3 M118.1,74.0 L120.7,82.0 L123.3,90.1 M157.0,89.5 L155.8,90.3 L154.7,91.2 M182.2,121.6 L168.0,121.2 L153.8,120.8 M42.5,18.3 L50.9,9.7 L59.3,1.1 M83.4,26.8 L83.3,21.7 L83.1,16.6 M59.3,1.1 L71.2,8.9 L83.1,16.6 M46.3,-18.1 L52.9,-9.8 L59.5,-1.5 M59.3,1.1 L59.4,-0.2 L59.5,-1.5 M60.0,-47.9 L69.9,-34.0 L79.9,-20.1 M59.5,-1.5 L69.7,-10.8 L79.9,-20.1 M803.1,562.9 L810.7,553.4 L818.4,544.0 M807.6,530.8 L812.8,536.2 L818.0,541.6 M818.4,544.0 L818.2,542.8 L818.0,541.6 M808.5,524.4 L808.0,527.6 L807.6,530.8 M835.1,557.5 L826.7,550.8 L818.4,544.0 M835.4,529.5 L826.7,535.5 L818.0,541.6 M244.4,189.6 L244.2,199.5 L244.0,209.4 M244.0,209.4 L244.7,210.0 L245.4,210.5 M246.9,186.6 L261.4,186.3 L275.8,186.1 M249.8,159.5 L260.3,157.3 L270.8,155.1 M185.7,246.5 L186.8,229.9 L187.8,213.4 M216.7,242.7 L217.6,230.4 L218.4,218.2 M187.8,213.4 L189.5,211.8 L191.2,210.3 M191.2,210.3 L201.4,211.4 L211.7,212.6 M211.7,212.6 L215.1,215.4 L218.4,218.2 M157.9,215.6 L172.9,214.5 L187.8,213.4 M244.0,209.4 L231.2,213.8 L218.4,218.2 M183.9,182.8 L187.5,196.6 L191.2,210.3 M215.0,181.8 L213.3,197.2 L211.7,212.6 M753.7,223.2 L760.9,222.4 L768.1,221.7 M753.7,223.2 L751.0,229.0 L748.4,234.8 M768.1,221.7 L772.1,228.8 L776.0,235.9 M776.8,211.6 L772.4,216.7 L768.1,221.7 M744.4,211.8 L749.0,217.5 L753.7,223.2 M731.0,238.4 L739.7,236.6 L748.4,234.8 M787.8,239.4 L781.9,237.6 L776.0,235.9 M720.0,73.1 L720.4,76.1 L720.8,79.1 M720.0,73.1 L710.6,65.3 L701.2,57.5 M720.0,80.8 L705.3,84.6 L690.6,88.5 M720.0,80.8 L720.4,79.9 L720.8,79.1 M690.6,88.5 L686.4,84.5 L682.1,80.4 M682.1,80.4 L687.1,69.1 L692.0,57.8 M701.2,57.5 L696.6,57.7 L692.0,57.8 M736.7,48.5 L728.4,60.8 L720.0,73.1 M745.0,79.6 L732.9,79.3 L720.8,79.1 M719.6,39.2 L710.4,48.4 L701.2,57.5 M724.8,104.2 L722.4,92.5 L720.0,80.8 M693.2,101.5 L691.9,95.0 L690.6,88.5 M670.8,81.4 L676.5,80.9 L682.1,80.4 M686.3,48.9 L689.2,53.3 L692.0,57.8 M526.2,26.1 L529.5,34.4 L532.8,42.7 M526.2,26.1 L514.9,29.3 L503.5,32.5 M510.9,51.4 L507.1,42.1 L503.2,32.9 M510.9,51.4 L519.9,50.1 L528.8,48.7 M528.8,48.7 L530.8,45.7 L532.8,42.7 M503.2,32.9 L503.4,32.7 L503.5,32.5 M551.8,42.9 L542.3,42.8 L532.8,42.7 M530.7,15.6 L528.4,20.8 L526.2,26.1 M500.0,6.3 L501.8,19.4 L503.5,32.5 M503.7,66.4 L507.3,58.9 L510.9,51.4 M491.7,35.5 L497.5,34.2 L503.2,32.9 M535.8,73.9 L532.3,61.3 L528.8,48.7 M387.3,-99.0 L373.0,-62.5 L358.6,-26.1 M383.9,-14.8 L376.4,-14.7 L368.9,-14.7 M358.6,-26.1 L363.7,-20.4 L368.9,-14.7 M387.4,6.4 L379.3,12.4 L371.2,18.5 M371.2,18.5 L364.0,11.3 L356.8,4.2 M368.9,-14.7 L362.8,-5.2 L356.8,4.2 M261.1,23.5 L267.2,35.5 L273.3,47.5 M231.3,56.6 L244.1,62.1 L256.8,67.6 M256.8,67.6 L265.0,57.5 L273.3,47.5 M351.0,107.5 L342.8,107.7 L334.5,108.0 M305.3,8.0 L320.5,7.0 L335.8,6.1 M305.3,8.0 L302.0,12.8 L298.7,17.6 M298.7,17.6 L298.8,18.0 L298.9,18.4 M298.9,18.4 L309.4,25.1 L319.9,31.9 M319.9,31.9 L327.5,24.9 L335.1,17.9 M335.8,6.1 L335.5,12.0 L335.1,17.9 M269.7,8.8 L284.2,13.2 L298.7,17.6 M303.3,-9.5 L304.3,-0.8 L305.3,8.0 M321.8,52.1 L320.8,42.0 L319.9,31.9 M321.8,52.1 L334.8,45.5 L347.8,38.8 M348.4,34.9 L348.1,36.9 L347.8,38.8 M348.4,34.9 L341.7,26.4 L335.1,17.9 M395.9,35.8 L389.0,37.2 L382.1,38.6 M371.2,18.5 L371.2,19.3 L371.1,20.2 M371.1,20.2 L376.1,29.2 L381.2,38.3 M382.1,38.6 L381.7,38.4 L381.2,38.3 M400.2,67.9 L395.3,66.1 L390.4,64.2 M382.1,38.6 L386.2,51.4 L390.4,64.2 M371.1,20.2 L359.7,27.5 L348.4,34.9 M347.8,38.8 L353.9,47.0 L360.1,55.1 M381.2,38.3 L370.6,46.7 L360.1,55.1 M60.9,248.5 L50.6,251.1 L40.2,253.8 M60.9,248.5 L60.1,232.6 L59.4,216.7 M40.2,253.8 L34.8,246.8 L29.4,239.8 M29.4,239.8 L32.2,226.5 L35.1,213.1 M59.4,216.7 L47.2,214.9 L35.1,213.1 M61.2,248.6 L61.1,248.5 L60.9,248.5 M63.6,214.5 L61.5,215.6 L59.4,216.7 M34.0,211.7 L34.5,212.4 L35.1,213.1 M63.2,278.8 L48.7,276.2 L34.2,273.6 M63.2,278.8 L63.5,290.5 L63.9,302.2 M61.4,303.9 L62.7,303.1 L63.9,302.2 M61.4,303.9 L48.4,300.5 L35.5,297.0 M35.5,297.0 L33.1,287.1 L30.7,277.1 M30.7,277.1 L32.4,275.4 L34.2,273.6 M72.1,270.0 L67.6,274.4 L63.2,278.8 M40.2,253.8 L37.2,263.7 L34.2,273.6 M91.1,303.0 L77.5,302.6 L63.9,302.2 M57.8,325.8 L59.6,314.9 L61.4,303.9 M26.6,311.4 L31.0,304.2 L35.5,297.0 M0.7,281.2 L3.8,278.0 L6.9,274.9 M6.9,274.9 L18.8,276.0 L30.7,277.1 M2.5,213.3 L2.1,229.0 L1.7,244.7 M2.5,213.3 L-10.5,211.6 L-23.5,210.0 M-29.8,215.1 L-26.6,212.5 L-23.5,210.0 M-29.8,215.1 L-28.9,228.0 L-27.9,241.0 M-27.9,241.0 L-26.1,243.2 L-24.2,245.4 M-24.2,245.4 L-12.5,246.4 L-0.8,247.5 M-0.8,247.5 L0.4,246.1 L1.7,244.7 M3.5,212.6 L3.0,213.0 L2.5,213.3 M29.4,239.8 L15.6,242.3 L1.7,244.7 M-21.4,185.9 L-22.5,198.0 L-23.5,210.0 M-111.1,194.3 L-70.5,204.7 L-29.8,215.1 M-892.4,319.0 L-460.2,280.0 L-27.9,241.0 M-33.3,271.9 L-28.8,258.7 L-24.2,245.4 M6.9,274.9 L3.0,261.2 L-0.8,247.5 M104.7,-34.4 L95.2,-26.8 L85.8,-19.2 M104.7,-34.4 L114.6,-25.4 L124.5,-16.4 M85.8,-19.2 L91.4,-8.5 L96.9,2.1 M96.9,2.1 L107.5,3.1 L118.1,4.1 M124.5,-16.4 L125.3,-9.3 L126.2,-2.2 M126.2,-2.2 L122.2,0.9 L118.1,4.1 M170.2,-1672.2 L137.5,-853.3 L104.7,-34.4 M79.9,-20.1 L82.9,-19.6 L85.8,-19.2 M152.4,-47.8 L138.4,-32.1 L124.5,-16.4 M83.1,16.6 L90.0,9.4 L96.9,2.1 M115.8,32.7 L117.0,18.4 L118.1,4.1 M137.9,1.2 L132.1,-0.5 L126.2,-2.2 M65.7,696.4 L78.7,699.6 L91.7,702.8 M318.4,-21.8 L328.0,-9.1 L337.6,3.5 M318.4,-21.8 L328.3,-26.2 L338.3,-30.6 M338.3,-30.6 L343.1,-27.1 L347.8,-23.6 M347.8,-23.6 L344.3,-10.7 L340.9,2.2 M337.6,3.5 L339.3,2.9 L340.9,2.2 M317.3,-22.1 L317.8,-21.9 L318.4,-21.8 M335.8,6.1 L336.7,4.8 L337.6,3.5 M358.5,-891.1 L348.4,-460.9 L338.3,-30.6 M358.6,-26.1 L353.2,-24.9 L347.8,-23.6 M356.8,4.2 L348.8,3.2 L340.9,2.2 M224.6,96.6 L236.3,95.0 L248.1,93.4 M243.8,125.8 L252.5,121.5 L261.1,117.2 M248.1,93.4 L254.6,105.3 L261.1,117.2 M256.8,67.6 L257.4,69.5 L258.0,71.3 M248.1,93.4 L253.1,82.4 L258.0,71.3 M290.2,45.9 L305.9,49.2 L321.6,52.4 M290.2,45.9 L288.8,46.7 L287.4,47.6 M287.4,47.6 L291.2,61.8 L294.9,76.0 M321.6,52.4 L322.4,56.6 L323.2,60.7 M323.2,60.7 L314.9,68.3 L306.7,75.9 M294.9,76.0 L300.8,75.9 L306.7,75.9 M321.8,52.1 L321.7,52.3 L321.6,52.4 M298.9,18.4 L294.6,32.1 L290.2,45.9 M273.3,47.5 L280.3,47.5 L287.4,47.6 M359.7,59.2 L367.4,64.5 L375.0,69.7 M359.7,59.2 L350.6,67.0 L341.4,74.8 M375.0,69.7 L373.8,80.6 L372.6,91.4 M341.7,77.5 L341.6,76.2 L341.4,74.8 M341.7,77.5 L349.6,84.4 L357.4,91.4 M357.4,91.4 L365.0,91.4 L372.6,91.4 M390.4,64.2 L382.7,67.0 L375.0,69.7 M360.1,55.1 L359.9,57.1 L359.7,59.2 M323.2,60.7 L332.3,67.8 L341.4,74.8 M380.1,97.7 L376.3,94.5 L372.6,91.4 M328.0,95.9 L322.0,96.0 L316.1,96.2 M328.0,95.9 L334.9,86.7 L341.7,77.5 M316.1,96.2 L311.4,86.0 L306.7,75.9 M351.0,107.5 L354.2,99.4 L357.4,91.4 M334.5,108.0 L331.2,101.9 L328.0,95.9 M282.8,86.2 L282.8,86.2 L282.7,86.2 M282.8,86.2 L293.5,97.2 L304.2,108.2 M282.7,86.2 L274.5,102.2 L266.4,118.2 M258.0,71.3 L270.4,78.8 L282.7,86.2 M294.9,76.0 L288.9,81.1 L282.8,86.2 M316.1,96.2 L310.1,102.2 L304.2,108.2 M261.1,117.2 L263.8,117.7 L266.4,118.2" fill="none" stroke="#5b6062" stroke-width="1" shape-rendering="crispEdges"/>
<path d="M299.7,59.3 L304.4,55.8 L309.1,55.0 L313.9,58.1 L315.1,64.1 L318.6,70.0 L323.4,71.2 L321.0,78.3 L322.7,84.2 L324.6,91.3 L322.7,96.1 L319.8,90.2 L316.3,84.2 L313.9,75.9 L310.3,66.4 L305.6,62.2 L302.0,63.6Z M368.5,261.3 L374.4,258.4 L380.3,262.0 L386.3,265.5 L391.0,269.1 L395.7,273.9 L396.2,276.7 L391.0,273.9 L383.9,269.1 L377.9,265.5 L372.0,262.7 L369.2,263.2Z M438.9,377.1 L440.8,372.3 L445.1,368.7 L447.9,363.3 L450.3,364.0 L451.5,367.6 L446.7,371.1 L444.4,375.9 L440.8,378.2Z M604.5,308.3 L608.8,313.0 L615.9,309.4 L620.7,302.3 L626.6,294.0 L624.2,291.6 L621.9,286.9 L619.5,290.5 L615.9,285.7 L613.5,289.3 L614.7,294.0 L612.4,297.6 L613.5,303.5 L608.8,305.9Z M526.2,502.6 L528.6,501.4 L529.8,507.4 L532.2,513.3 L531.0,520.4 L534.5,525.2 L536.9,524.0 L533.3,529.9 L534.5,535.8 L532.2,539.4 L528.6,533.5 L525.0,531.1 L527.4,526.3 L525.0,520.4 L527.4,514.5 L525.8,508.6Z M424.2,413.7 L426.6,414.8 L427.8,419.6 L429.4,425.5 L432.5,429.1 L431.3,434.5 L428.5,432.6 L427.8,427.9 L425.4,423.1 L424.2,418.4Z M122.2,657.9 L124.6,653.8 L129.3,651.9 L134.0,653.8 L136.4,659.0 L134.0,665.0 L129.3,668.5 L123.8,667.3 L121.5,662.6Z M142.3,707.7 L144.7,701.7 L147.1,695.8 L151.8,695.8 L154.2,701.7 L154.2,706.5 L149.5,708.9 L147.1,713.6 L142.3,713.6 L140.5,710.0Z M42.7,680.4 L47.4,681.6 L51.0,687.5 L48.6,689.4 L45.1,686.3Z M58.1,686.3 L60.5,685.1 L64.1,692.3 L65.2,699.4 L71.2,702.9 L78.3,705.3 L84.2,706.0 L84.2,710.0 L75.9,708.9 L68.8,706.5 L62.9,704.1 L60.5,697.0 L58.1,692.3Z M540.0,603.3 L542.4,609.2 L545.9,614.0 L550.7,615.1 L554.2,610.4 L556.6,604.0 L557.8,611.1 L562.5,611.1 L563.3,614.0 L556.6,616.3 L551.9,618.7 L547.1,620.4 L542.4,618.7 L540.0,617.5Z M784.4,730.2 L786.7,737.3 L791.5,742.1 L795.0,746.8 L792.7,753.9 L789.1,751.6 L785.6,744.4 L783.2,737.3Z" fill="#2a4262" stroke="#1c3a5e" stroke-width="1" shape-rendering="crispEdges"/>
<path d="M6.0,806.0 L6.0,705.0 L6.0,705.0 L11.1,703.4 L17.4,701.9 L19.8,698.7 L26.1,699.5 L29.3,701.9 L26.9,705.8 L31.6,705.8 L41.1,706.6 L46.7,705.0 L47.5,707.4 L45.1,710.6 L45.9,716.1 L50.6,717.7 L52.2,724.0 L57.0,724.8 L60.1,724.0 L63.3,727.2 L68.0,728.8 L71.2,727.2 L72.8,732.7 L75.2,735.9 L75.9,740.6 L79.1,744.6 L82.3,748.5 L86.2,742.2 L91.0,742.2 L94.9,744.6 L98.9,747.8 L103.6,749.3 L105.2,752.5 L110.8,754.9 L115.5,750.9 L120.3,745.4 L126.6,742.2 L131.3,741.4 L136.1,744.6 L140.8,747.0 L145.6,750.1 L147.9,753.3 L151.9,755.7 L158.2,756.5 L157.6,755.3 L156.8,750.5 L157.6,744.1 L160.8,739.3 L157.6,734.5 L154.4,731.3 L150.4,727.3 L149.6,723.3 L152.8,720.1 L156.0,716.9 L160.8,720.1 L167.2,726.5 L172.0,730.5 L178.4,732.9 L184.8,735.3 L189.6,739.3 L196.1,744.1 L204.1,748.9 L210.5,752.1 L216.9,757.7 L220.1,762.5 L242.5,762.5 L240.9,757.7 L239.3,754.5 L232.9,754.5 L229.7,750.5 L226.5,744.1 L220.1,742.5 L216.9,737.7 L210.5,739.3 L204.1,737.7 L200.9,736.1 L196.1,732.9 L189.6,729.7 L186.4,724.9 L183.2,718.5 L186.4,713.7 L191.2,708.9 L194.5,704.1 L200.9,699.3 L204.1,694.5 L205.7,688.0 L204.1,683.2 L200.1,682.4 L197.7,686.4 L196.1,691.2 L192.9,694.5 L188.0,693.7 L185.6,689.6 L181.6,688.8 L177.6,686.4 L176.8,682.4 L180.0,680.0 L186.4,678.4 L189.6,674.4 L194.5,669.6 L199.3,668.0 L204.1,667.2 L208.9,664.0 L213.7,660.0 L216.1,656.0 L212.9,653.6 L215.3,651.2 L218.5,652.0 L220.1,656.0 L228.1,652.8 L234.5,650.4 L240.9,647.2 L245.7,645.6 L252.1,646.4 L258.5,649.6 L261.7,651.2 L266.5,652.0 L271.3,651.2 L276.1,653.6 L279.8,654.3 L281.7,653.1 L284.8,649.4 L288.5,648.1 L292.1,650.6 L295.8,652.4 L299.5,654.9 L303.2,654.3 L305.7,651.8 L306.9,646.9 L306.3,642.0 L306.9,635.8 L308.7,630.9 L310.6,626.0 L313.1,621.7 L317.4,623.5 L320.4,626.0 L321.0,632.1 L319.8,638.3 L321.0,643.2 L322.9,646.9 L325.4,649.4 L327.8,652.4 L330.3,655.5 L332.7,657.4 L335.2,659.2 L350.7,657.1 L360.2,654.3 L369.6,651.4 L376.8,650.0 L383.9,649.1 L393.4,647.9 L405.2,646.7 L417.1,646.2 L426.6,647.2 L436.1,649.5 L445.6,651.9 L455.1,655.0 L464.5,659.0 L474.0,665.0 L481.2,669.7 L485.9,673.3 L493.0,679.2 L500.1,685.1 L504.9,689.9 L509.6,694.6 L514.4,699.4 L515.6,706.5 L516.2,710.3 L521.9,711.7 L527.5,709.6 L531.7,708.9 L535.9,708.9 L540.1,706.1 L544.4,703.3 L550.0,704.7 L555.6,701.9 L561.2,699.1 L566.9,695.5 L572.5,692.7 L578.1,689.2 L582.3,686.4 L579.5,683.6 L583.7,680.8 L586.5,677.3 L592.2,674.4 L596.9,673.3 L604.1,675.6 L611.2,673.7 L618.3,678.0 L627.8,685.1 L634.9,689.9 L640.8,697.0 L644.4,706.5 L650.3,711.2 L656.3,713.6 L657.4,723.1 L663.4,730.2 L670.5,737.3 L674.0,742.7 L676.0,746.3 L678.5,747.2 L679.7,751.2 L681.9,752.9 L682.5,756.0 L684.2,756.3 L689.9,756.8 L696.7,757.4 L701.2,757.4 L700.6,761.4 L702.3,761.9 L703.5,765.9 L704.6,766.5 L705.7,772.1 L708.0,776.7 L711.4,780.1 L714.2,782.3 L713.7,788.0 L712.5,792.5 L712.5,806.0Z" fill="#00466c" stroke="#000" stroke-width="1" stroke-linejoin="round" shape-rendering="crispEdges"/>
<path d="M342.4,653.1 L350.7,651.9 L357.8,647.2 L361.3,643.6 L363.7,647.2 L359.0,651.9 L369.6,649.5 L374.4,646.0 L377.9,640.1 L375.6,632.9 L379.1,634.1 L381.5,637.7 L386.3,631.8 L389.8,632.9 L388.6,638.9 L393.4,642.4 L399.3,644.8 L393.4,647.2 L383.9,649.1 L376.8,651.0 L364.9,653.8 L353.0,656.2 L343.5,657.9Z M417.1,646.0 L419.5,642.4 L426.6,638.9 L431.3,640.1 L436.1,642.0 L443.2,640.1 L450.3,638.9 L455.1,644.8 L453.9,648.4 L446.7,646.0 L440.8,647.2 L436.1,650.0 L426.6,647.6Z M474.0,665.0 L472.8,657.9 L480.0,655.5 L485.9,657.9 L493.0,654.3 L497.8,653.1 L494.2,657.9 L489.5,661.4 L483.5,663.8 L482.3,667.3 L485.9,672.1 L491.8,670.9 L497.8,675.6 L504.9,678.0 L507.2,680.4 L503.7,682.8 L498.9,681.6 L500.1,685.1 L493.0,679.2 L485.9,673.3 L481.2,669.7Z M806.0,582.2 L803.5,588.3 L801.7,596.9 L804.1,600.6 L802.5,609.3 L803.3,619.1 L804.5,629.0 L803.3,638.8 L805.1,646.2 L806.5,646.2 L806.5,582.2Z M784.4,654.3 L786.7,661.4 L785.6,670.9 L789.1,680.4 L791.5,687.5 L792.7,694.6 L795.0,704.1 L791.5,711.2 L787.9,716.0 L789.1,720.7 L785.6,724.3 L784.4,730.2 L786.7,730.2 L787.9,725.0 L791.5,721.2 L790.3,716.5 L793.9,711.7 L797.4,704.1 L795.0,694.6 L793.9,687.5 L791.5,680.4 L788.2,670.9 L789.1,661.4 L787.2,654.3Z" fill="#00466c" stroke="#000" stroke-width="1" shape-rendering="crispEdges"/>
<path d="M15.0,719.3 L20.6,717.7 L26.1,716.1 L31.6,719.3 L37.2,720.9 L39.6,721.6 L37.2,724.0 L34.0,727.2 L30.1,729.6 L26.1,728.0 L22.2,724.8 L18.2,722.4Z" fill="#5d4f4a" stroke="#000" stroke-width="1" shape-rendering="crispEdges"/>
<path d="M507.8,689.2 L506.4,694.8 L507.1,701.9 L509.2,708.9 L511.3,713.1 L514.1,712.0 L516.0,710.3 L514.1,709.6 L512.0,710.3 L510.3,707.5 L508.9,701.9 L508.5,695.5 L509.9,691.3Z M521.9,711.4 L530.3,712.0 L532.0,715.9 L527.5,714.5Z M335.2,659.0 L329.0,660.2 L321.7,661.7 L313.1,662.9 L312.4,663.9 L321.7,662.9 L329.0,661.4 L335.2,660.2Z" fill="#5d4f4a" stroke="#000" stroke-width="1" shape-rendering="crispEdges"/>
<path d="M530.3,715.9 L533.8,720.1 L538.7,718.0 L544.4,715.2 L550.0,712.4 L555.6,708.9 L560.5,704.7 M562.6,702.6 L566.9,700.5 L569.7,698.3 M270.0,663.1 L277.4,663.9 L286.0,664.7" fill="none" stroke="#000" stroke-width="1.2" shape-rendering="crispEdges"/>
<path d="M13,701h1v1h-1zM18,700h1v1h-1zM24,700h2v1h-2zM27,698h1v1h-1zM28,700h1v1h-1zM34,706h1v1h-1zM34,707h1v1h-1zM36,707h1v1h-1zM41,705h2v2h-2zM43,706h1v2h-1zM45,704h2v1h-2zM46,706h1v1h-1zM44,708h1v1h-1zM46,715h1v1h-1zM44,716h1v1h-1zM46,715h2v2h-2zM49,716h2v1h-2zM51,720h2v1h-2zM50,721h2v1h-2zM55,724h2v1h-2zM57,724h1v1h-1zM60,724h2v1h-2zM62,725h1v2h-1zM65,729h1v2h-1zM72,728h1v2h-1zM70,729h1v1h-1zM75,737h1v1h-1zM81,745h1v1h-1zM83,750h2v2h-2zM92,742h1v1h-1zM93,745h1v1h-1zM94,744h1v1h-1zM96,748h1v1h-1zM100,747h1v2h-1zM103,749h2v2h-2zM104,751h1v1h-1zM107,754h2v1h-2zM111,755h2v1h-2zM112,754h1v1h-1zM115,752h2v1h-2zM116,748h1v1h-1zM117,748h2v2h-2zM120,746h2v1h-2zM122,743h2v1h-2zM123,742h2v1h-2zM128,743h1v2h-1zM128,742h1v1h-1zM132,740h2v2h-2zM138,744h1v1h-1zM139,746h1v2h-1zM146,750h1v1h-1zM145,752h1v1h-1zM150,754h2v1h-2zM155,754h1v1h-1zM157,756h1v2h-1zM157,755h2v1h-2zM157,752h1v1h-1zM155,749h2v2h-2zM157,748h1v1h-1zM158,747h1v2h-1zM159,743h1v1h-1zM159,741h1v1h-1zM159,741h2v1h-2zM153,730h1v1h-1zM153,728h1v1h-1zM152,729h1v2h-1zM150,724h1v1h-1zM152,720h1v2h-1zM155,715h1v1h-1zM156,717h1v1h-1zM162,723h2v2h-2zM171,729h1v1h-1zM172,731h2v1h-2zM187,735h1v2h-1zM189,739h1v1h-1zM192,740h1v1h-1zM193,741h2v2h-2zM198,745h1v2h-1zM198,745h1v1h-1zM202,747h2v2h-2zM205,747h2v1h-2zM208,749h2v1h-2zM210,751h1v2h-1zM214,754h1v2h-1zM240,757h1v1h-1zM240,756h1v2h-1zM238,753h2v1h-2zM236,755h1v1h-1zM234,753h1v2h-1zM228,747h1v1h-1zM224,742h1v1h-1zM223,742h1v1h-1zM219,741h1v1h-1zM218,740h1v1h-1zM217,736h1v1h-1zM216,739h2v1h-2zM210,737h1v2h-1zM207,739h1v2h-1zM202,736h1v2h-1zM202,736h1v1h-1zM193,732h1v2h-1zM184,723h2v1h-2zM185,720h1v1h-1zM184,718h1v1h-1zM189,711h1v1h-1zM192,707h1v1h-1zM191,707h1v1h-1zM191,705h1v1h-1zM199,700h1v1h-1zM203,696h2v1h-2zM204,695h2v1h-2zM204,693h1v1h-1zM197,685h1v2h-1zM195,688h2v1h-2zM195,690h1v2h-1zM191,695h1v2h-1zM186,690h1v1h-1zM175,681h1v1h-1zM179,681h1v1h-1zM182,680h2v1h-2zM183,677h1v1h-1zM184,680h1v2h-1zM190,672h1v1h-1zM192,671h1v1h-1zM192,670h1v1h-1zM203,668h1v1h-1zM202,668h1v2h-1zM209,664h2v2h-2zM215,658h1v1h-1zM213,652h1v1h-1zM215,651h1v2h-1zM217,650h2v1h-2zM220,653h1v1h-1zM222,653h2v1h-2zM224,654h2v1h-2zM228,652h1v2h-1zM230,652h1v1h-1zM232,652h1v2h-1zM237,649h2v1h-2zM244,647h1v1h-1zM244,644h1v2h-1zM252,644h1v1h-1zM256,646h1v2h-1zM258,650h1v1h-1zM264,650h1v1h-1zM272,649h1v2h-1zM278,654h1v1h-1zM281,651h1v1h-1zM282,652h2v1h-2zM286,649h1v2h-1zM291,650h1v2h-1zM291,650h1v1h-1zM293,650h1v2h-1zM301,654h1v1h-1zM304,651h1v1h-1zM307,644h1v1h-1zM307,632h1v1h-1zM309,630h1v1h-1zM310,626h1v1h-1zM311,624h1v1h-1zM312,620h1v1h-1zM316,622h1v1h-1zM319,625h1v2h-1zM320,631h1v1h-1zM321,641h2v1h-2zM322,641h1v1h-1zM320,644h1v1h-1zM323,648h1v2h-1zM326,649h2v1h-2zM333,658h2v2h-2zM338,657h2v2h-2zM341,659h1v1h-1zM346,658h2v1h-2zM350,657h1v1h-1zM353,655h2v1h-2zM354,655h1v2h-1zM361,653h1v1h-1zM362,654h1v1h-1zM365,652h1v1h-1zM364,653h2v1h-2zM367,653h2v2h-2zM374,650h1v1h-1zM374,650h1v1h-1zM382,650h1v2h-1zM390,649h1v1h-1zM394,648h1v1h-1zM396,648h1v1h-1zM400,648h1v1h-1zM404,645h1v1h-1zM408,645h1v1h-1zM411,645h1v1h-1zM413,645h2v1h-2zM417,647h1v2h-1zM428,647h2v1h-2zM428,649h1v1h-1zM431,650h2v2h-2zM436,648h2v2h-2zM439,651h1v1h-1zM448,651h2v1h-2zM450,654h1v1h-1zM458,655h2v1h-2zM460,658h1v1h-1zM463,659h1v2h-1zM466,659h1v1h-1zM470,661h1v1h-1zM471,663h1v2h-1zM479,667h2v1h-2zM490,675h1v1h-1zM490,678h2v1h-2zM498,683h2v1h-2zM501,683h2v2h-2zM500,686h2v1h-2zM503,687h2v2h-2zM507,691h1v1h-1zM510,696h1v2h-1zM510,695h2v1h-2zM511,695h1v2h-1zM513,699h1v1h-1zM513,700h1v1h-1zM515,709h1v1h-1zM524,712h2v1h-2zM534,709h1v1h-1zM534,709h1v2h-1zM538,708h1v2h-1zM540,706h1v1h-1zM540,705h1v2h-1zM542,705h1v1h-1zM551,705h1v2h-1zM550,702h1v1h-1zM553,701h2v1h-2zM556,701h2v2h-2zM559,700h1v2h-1zM564,695h2v2h-2zM565,694h1v1h-1zM569,693h2v1h-2zM573,693h1v1h-1zM575,692h1v1h-1zM581,687h1v1h-1zM583,686h1v1h-1zM579,683h2v1h-2zM584,682h2v2h-2zM586,675h1v1h-1zM591,676h1v1h-1zM591,674h1v2h-1zM594,674h2v2h-2zM595,671h1v1h-1zM604,676h1v1h-1zM605,675h1v1h-1zM608,674h2v1h-2zM608,675h1v2h-1zM611,674h1v1h-1zM617,676h1v2h-1zM622,682h2v1h-2zM625,682h1v1h-1zM626,682h1v1h-1zM628,686h2v2h-2zM633,687h1v1h-1zM634,688h1v1h-1zM637,689h2v1h-2zM637,695h1v1h-1zM641,694h1v1h-1zM641,695h1v2h-1zM641,698h1v1h-1zM643,700h1v2h-1zM641,702h1v1h-1zM645,706h1v2h-1zM649,709h1v2h-1zM650,709h1v1h-1zM653,713h1v2h-1zM657,712h2v2h-2zM655,717h2v1h-2zM655,716h1v1h-1zM656,722h2v1h-2zM658,722h1v1h-1zM659,725h1v2h-1zM660,726h2v1h-2zM661,728h2v2h-2zM662,730h1v2h-1zM665,730h2v1h-2zM667,736h1v1h-1zM668,737h1v2h-1zM670,735h1v2h-1zM672,738h2v2h-2zM673,741h1v1h-1zM686,756h1v1h-1zM689,758h1v1h-1zM689,758h1v2h-1zM690,756h1v1h-1zM694,755h2v1h-2zM698,757h2v1h-2zM701,760h1v2h-1zM699,760h1v2h-1zM703,762h1v2h-1zM704,766h2v1h-2zM704,770h2v1h-2zM706,775h1v1h-1zM709,779h1v1h-1zM711,778h1v1h-1zM713,783h1v1h-1zM713,788h2v1h-2zM714,791h1v2h-1zM711,794h2v2h-2zM713,801h1v2h-1zM341,654h2v1h-2zM354,648h1v2h-1zM355,646h2v2h-2zM356,648h1v1h-1zM361,644h2v1h-2zM359,651h1v1h-1zM364,651h1v2h-1zM368,651h1v2h-1zM371,648h2v1h-2zM371,649h2v1h-2zM372,645h2v1h-2zM375,645h1v1h-1zM378,641h1v1h-1zM376,641h2v1h-2zM378,638h2v2h-2zM375,633h1v1h-1zM376,633h2v1h-2zM378,635h1v1h-1zM380,637h1v1h-1zM387,637h1v1h-1zM387,638h1v1h-1zM392,643h1v1h-1zM396,642h2v1h-2zM392,647h1v1h-1zM392,648h1v1h-1zM390,648h1v1h-1zM386,649h2v1h-2zM375,650h2v1h-2zM374,650h1v1h-1zM368,652h1v1h-1zM368,652h1v1h-1zM362,652h2v1h-2zM360,655h2v1h-2zM361,654h1v1h-1zM355,655h1v2h-1zM354,655h1v1h-1zM353,655h2v2h-2zM344,656h2v1h-2zM344,657h2v2h-2zM342,655h1v1h-1zM342,654h1v1h-1zM415,645h2v1h-2zM420,642h1v1h-1zM421,642h1v1h-1zM429,638h1v1h-1zM438,640h1v1h-1zM446,640h2v2h-2zM446,638h1v2h-1zM438,648h1v1h-1zM431,649h2v1h-2zM429,648h1v2h-1zM420,647h1v1h-1zM473,659h1v1h-1zM491,655h2v1h-2zM493,652h2v1h-2zM496,653h1v2h-1zM488,661h1v2h-1zM485,664h2v1h-2zM489,670h1v2h-1zM492,670h1v2h-1zM496,673h1v2h-1zM500,677h1v1h-1zM506,680h2v1h-2zM505,682h2v1h-2zM502,683h2v1h-2zM499,682h1v2h-1zM499,681h1v2h-1zM499,682h2v2h-2zM495,682h1v1h-1zM493,677h1v1h-1zM490,676h1v2h-1zM484,672h2v1h-2zM481,668h2v1h-2zM476,665h1v2h-1z" fill="#000" shape-rendering="crispEdges"/>
<path d="M217,688h1v2h-1zM214,692h1v2h-1zM201,699h1v1h-1zM220,699h3v2h-3zM203,717h3v2h-3zM207,684h2v1h-2zM197,703h1v3h-1zM220,677h1v2h-1zM203,713h2v2h-2zM215,697h1v2h-1zM215,686h3v1h-3zM197,720h1v2h-1zM214,687h1v1h-1zM217,690h2v1h-2zM195,720h2v2h-2zM208,690h2v2h-2zM186,716h2v1h-2zM209,700h3v1h-3zM219,696h2v2h-2zM198,724h1v1h-1zM196,700h1v3h-1zM200,735h1v3h-1zM190,721h1v1h-1zM195,718h2v2h-2zM191,708h1v2h-1zM201,708h2v1h-2zM211,697h3v1h-3zM194,726h2v3h-2zM212,692h2v1h-2zM205,697h1v2h-1zM216,698h2v1h-2zM219,692h2v2h-2zM218,699h1v1h-1zM219,674h2v2h-2zM190,712h3v1h-3zM206,697h1v1h-1zM218,695h2v2h-2zM186,721h1v2h-1zM207,711h2v3h-2zM207,687h2v3h-2zM226,684h2v1h-2zM191,728h2v1h-2zM190,722h1v2h-1zM219,673h1v3h-1zM196,722h2v1h-2zM222,674h1v2h-1zM213,696h2v2h-2zM203,706h1v2h-1zM214,683h1v2h-1zM214,696h1v1h-1zM200,712h1v1h-1zM190,715h2v3h-2zM201,705h1v1h-1zM209,687h2v3h-2zM194,714h2v1h-2zM217,691h1v2h-1zM213,700h1v1h-1zM205,697h1v1h-1zM197,709h2v3h-2zM219,675h2v2h-2zM193,707h3v2h-3zM190,720h2v1h-2zM197,707h2v1h-2zM194,711h3v3h-3zM214,682h3v1h-3zM192,718h2v1h-2zM221,697h3v1h-3zM209,691h1v1h-1zM208,694h2v2h-2zM187,718h2v3h-2zM217,696h1v2h-1zM187,721h2v2h-2zM196,721h3v3h-3zM200,731h2v3h-2zM208,686h2v1h-2zM184,715h1v3h-1zM191,715h3v2h-3zM192,725h3v1h-3zM194,720h1v2h-1zM195,730h2v3h-2zM207,688h2v1h-2zM187,716h1v2h-1zM202,696h1v2h-1zM221,688h1v3h-1zM222,678h2v2h-2zM192,724h2v2h-2zM202,699h1v3h-1zM221,684h1v3h-1zM197,717h3v1h-3zM200,707h2v1h-2zM199,724h1v2h-1zM220,675h2v1h-2zM205,683h2v2h-2zM198,714h2v2h-2zM218,674h1v2h-1zM221,673h1v3h-1zM217,682h2v1h-2zM199,726h3v2h-3zM190,715h2v1h-2zM199,725h3v1h-3zM186,714h3v1h-3zM190,715h2v1h-2zM215,682h1v3h-1zM206,686h2v3h-2zM213,689h3v1h-3zM194,721h1v1h-1zM197,725h2v3h-2zM214,689h2v2h-2zM215,678h2v3h-2zM220,674h1v2h-1zM204,715h2v3h-2zM219,685h1v2h-1zM226,684h1v3h-1zM210,684h2v3h-2zM194,702h2v1h-2zM208,703h1v2h-1zM191,726h2v1h-2zM193,728h1v1h-1zM223,694h2v1h-2zM211,689h2v3h-2zM209,685h2v2h-2zM196,732h1v1h-1zM208,688h3v3h-3zM208,690h2v2h-2zM213,699h1v1h-1zM190,718h1v2h-1zM209,680h2v2h-2zM190,707h2v2h-2zM213,691h1v3h-1zM196,701h1v1h-1zM202,711h1v2h-1zM207,697h2v2h-2zM200,722h3v3h-3zM219,673h2v2h-2zM201,723h1v1h-1zM200,706h1v2h-1zM219,690h2v1h-2zM209,704h1v1h-1zM193,730h3v2h-3zM221,681h1v2h-1zM196,709h2v2h-2zM223,690h1v2h-1zM224,686h3v1h-3zM196,728h3v3h-3zM218,679h1v2h-1zM215,681h3v1h-3zM197,722h1v1h-1zM218,685h1v2h-1zM205,682h1v1h-1zM187,713h1v2h-1zM202,716h1v1h-1zM222,682h2v2h-2zM209,688h2v1h-2zM218,688h2v2h-2zM206,699h1v1h-1zM218,692h3v1h-3zM216,677h1v2h-1zM200,708h1v2h-1zM208,711h2v1h-2zM218,694h2v1h-2zM200,709h1v1h-1zM192,709h1v3h-1zM214,690h1v2h-1zM207,695h1v1h-1zM212,684h1v1h-1zM209,691h1v2h-1zM205,678h2v2h-2zM222,684h1v1h-1zM187,723h2v1h-2zM201,720h2v1h-2zM218,694h2v3h-2zM220,699h1v1h-1zM213,688h1v2h-1zM191,722h2v2h-2zM210,679h2v3h-2zM192,712h1v2h-1zM189,718h3v1h-3zM208,685h2v2h-2zM198,710h1v2h-1zM203,703h1v3h-1zM226,679h1v3h-1zM193,716h3v2h-3zM199,709h1v1h-1zM206,713h1v3h-1zM212,698h2v2h-2zM225,686h1v3h-1zM196,724h1v1h-1zM200,719h1v1h-1zM199,717h1v1h-1zM209,687h2v1h-2zM198,704h2v2h-2zM196,717h3v3h-3zM219,683h2v3h-2zM201,715h2v3h-2zM190,717h2v1h-2zM204,681h1v2h-1zM198,728h1v1h-1zM215,698h3v3h-3zM194,732h1v2h-1zM187,715h3v3h-3zM201,727h1v2h-1zM206,679h2v2h-2zM204,697h1v2h-1zM196,731h3v2h-3zM220,687h1v1h-1zM217,684h1v1h-1zM217,680h2v1h-2zM207,704h1v1h-1zM195,719h2v1h-2zM217,692h2v2h-2zM221,679h3v3h-3zM219,679h2v1h-2zM209,685h2v3h-2zM211,680h2v2h-2zM200,720h3v3h-3zM209,686h2v1h-2zM223,678h1v3h-1zM208,708h1v2h-1zM212,685h2v2h-2zM208,695h1v2h-1zM205,700h2v1h-2zM215,678h3v2h-3zM212,690h2v1h-2zM193,708h1v1h-1zM207,686h3v2h-3zM197,717h2v2h-2zM201,711h1v2h-1zM215,681h1v2h-1zM204,698h1v3h-1zM190,713h1v1h-1zM196,728h3v1h-3zM225,677h2v2h-2zM223,686h2v1h-2zM193,703h3v1h-3zM213,693h3v1h-3zM223,674h3v2h-3zM200,704h3v3h-3zM191,722h3v3h-3zM199,717h3v1h-3zM216,677h3v1h-3zM218,684h2v1h-2zM208,685h1v3h-1zM189,726h1v2h-1zM205,704h1v2h-1zM224,680h2v3h-2zM199,730h2v1h-2zM202,706h1v1h-1zM204,706h1v3h-1zM202,714h2v3h-2zM196,706h3v2h-3zM197,725h1v2h-1zM206,698h1v2h-1zM199,710h2v3h-2zM206,703h1v1h-1zM193,719h3v1h-3zM223,685h3v2h-3zM211,702h1v3h-1zM185,716h1v3h-1zM199,709h3v1h-3zM193,724h1v1h-1zM195,715h1v1h-1zM191,709h1v1h-1zM195,715h3v1h-3zM209,705h3v1h-3zM196,705h2v2h-2zM206,709h2v1h-2zM208,692h1v1h-1zM200,725h2v2h-2zM212,690h1v1h-1zM221,674h3v2h-3zM215,695h1v2h-1zM208,709h1v2h-1zM227,680h2v2h-2zM195,716h2v1h-2zM202,715h2v3h-2zM203,705h1v2h-1zM213,690h2v1h-2zM213,696h2v1h-2zM207,707h2v2h-2zM206,707h2v2h-2zM202,714h1v2h-1zM204,707h2v1h-2zM194,731h3v1h-3zM208,686h3v1h-3zM204,703h1v1h-1zM191,710h2v3h-2zM222,681h3v2h-3zM186,722h2v3h-2zM192,718h1v1h-1zM199,725h1v1h-1zM190,715h1v3h-1zM202,719h1v3h-1zM194,720h2v1h-2zM186,713h3v1h-3zM207,695h3v1h-3zM188,723h3v2h-3zM190,706h3v1h-3zM207,685h1v2h-1zM224,674h2v3h-2zM190,708h2v2h-2zM197,728h1v2h-1zM207,686h2v2h-2zM193,703h2v1h-2zM216,680h2v1h-2zM191,705h1v1h-1zM190,709h3v1h-3zM199,714h2v1h-2zM183,715h1v2h-1zM186,723h2v2h-2zM213,690h3v3h-3zM200,726h3v2h-3zM203,718h2v2h-2zM204,706h1v1h-1zM208,687h2v3h-2zM199,707h2v1h-2zM201,701h2v2h-2zM197,725h1v2h-1zM224,690h1v1h-1zM213,685h1v3h-1zM219,685h2v2h-2zM193,724h3v1h-3zM210,701h2v1h-2zM211,697h2v2h-2zM217,688h2v1h-2zM224,675h2v1h-2zM186,720h1v1h-1zM215,693h1v1h-1zM219,679h1v3h-1zM194,717h2v1h-2zM193,727h2v1h-2zM198,712h2v1h-2zM220,698h2v1h-2zM205,684h1v2h-1zM203,714h2v2h-2zM209,701h2v1h-2zM203,705h1v2h-1zM222,694h3v3h-3zM207,711h1v3h-1zM184,716h1v1h-1zM192,717h1v1h-1zM210,685h1v1h-1zM204,680h3v1h-3zM223,694h1v2h-1zM191,716h3v1h-3zM209,686h3v3h-3zM209,682h2v1h-2zM197,718h1v1h-1zM208,692h1v3h-1zM218,702h2v3h-2zM200,734h2v1h-2zM207,684h2v2h-2zM202,700h3v3h-3zM212,686h2v2h-2zM196,729h1v2h-1zM219,704h2v3h-2zM217,693h2v3h-2zM193,712h3v1h-3zM194,705h1v1h-1zM200,703h1v3h-1zM193,722h1v1h-1zM223,684h2v1h-2zM218,696h2v1h-2zM214,692h2v2h-2zM223,677h3v3h-3zM194,728h3v2h-3zM211,701h3v1h-3zM193,715h2v1h-2zM194,703h2v2h-2zM196,702h3v2h-3zM215,695h3v1h-3zM205,707h1v1h-1zM183,715h2v1h-2zM199,713h2v2h-2zM200,698h2v1h-2zM212,695h2v3h-2zM205,679h2v1h-2zM192,717h2v2h-2zM203,711h1v2h-1zM195,722h1v1h-1zM216,681h1v2h-1zM194,714h2v1h-2zM216,684h2v2h-2zM219,689h2v1h-2zM224,678h1v3h-1zM220,683h2v3h-2zM203,706h2v3h-2zM199,725h3v1h-3zM217,689h1v1h-1zM212,697h1v3h-1zM202,702h1v3h-1zM187,723h3v2h-3zM199,722h1v2h-1zM211,683h3v1h-3zM200,712h3v2h-3zM223,683h1v2h-1zM198,715h1v2h-1zM192,705h3v3h-3zM187,714h1v2h-1zM214,690h1v1h-1zM207,709h1v3h-1zM204,682h2v2h-2zM192,711h3v2h-3zM207,688h3v2h-3zM191,706h1v1h-1zM209,689h1v2h-1zM211,696h3v2h-3zM208,708h2v2h-2zM188,716h1v1h-1zM221,681h2v3h-2zM203,713h1v2h-1zM192,727h2v2h-2zM195,728h1v2h-1zM207,710h2v2h-2zM192,713h3v3h-3zM210,702h2v1h-2zM216,677h1v3h-1zM188,709h2v2h-2zM190,729h2v2h-2zM215,689h1v1h-1zM196,725h3v2h-3zM195,717h3v1h-3zM193,710h2v2h-2zM203,714h3v2h-3zM206,681h2v2h-2zM220,681h2v3h-2zM207,680h1v1h-1zM189,726h1v2h-1zM198,733h1v1h-1zM222,695h2v2h-2zM215,684h1v3h-1zM190,718h1v3h-1zM207,678h1v2h-1zM219,689h2v1h-2zM225,688h3v1h-3zM188,715h2v1h-2zM192,708h1v2h-1zM204,709h3v2h-3zM201,698h1v1h-1zM220,703h2v2h-2zM216,691h1v1h-1zM188,728h1v2h-1zM191,716h2v1h-2zM213,679h1v3h-1zM195,719h2v1h-2zM202,705h1v1h-1zM195,720h2v1h-2zM213,678h1v2h-1zM187,726h2v1h-2zM216,680h2v3h-2zM220,689h2v1h-2zM202,707h2v1h-2zM222,688h2v1h-2zM223,674h1v1h-1zM192,711h3v2h-3zM189,728h1v2h-1zM194,729h2v3h-2zM194,712h2v2h-2zM215,690h3v3h-3zM210,686h1v2h-1zM203,707h1v3h-1zM188,713h1v3h-1zM204,717h1v3h-1zM211,692h1v2h-1zM188,726h1v2h-1zM202,715h1v1h-1zM205,685h1v1h-1zM206,682h2v3h-2zM223,681h2v3h-2zM219,689h3v1h-3zM222,695h3v1h-3zM217,703h1v2h-1zM211,693h1v2h-1zM199,715h3v3h-3zM205,706h1v1h-1zM204,708h3v1h-3zM196,727h1v1h-1zM208,706h2v1h-2zM187,718h1v2h-1zM215,677h1v2h-1zM186,725h3v1h-3zM210,703h1v2h-1zM201,722h2v2h-2zM202,717h1v1h-1zM215,698h3v3h-3zM219,680h2v2h-2zM210,700h1v2h-1zM193,712h2v1h-2zM216,693h1v1h-1zM226,681h1v2h-1zM224,676h1v2h-1zM197,719h2v1h-2zM219,693h3v3h-3zM225,688h2v1h-2zM219,697h3v1h-3zM216,696h2v2h-2zM200,703h1v1h-1zM195,720h3v1h-3zM205,683h2v3h-2zM222,695h2v1h-2zM190,720h3v3h-3zM205,703h1v1h-1zM209,691h3v2h-3zM204,716h3v1h-3zM192,717h3v2h-3zM190,715h2v2h-2zM194,708h3v2h-3zM224,688h1v2h-1zM214,678h2v1h-2zM207,691h2v2h-2zM216,689h1v2h-1zM221,688h3v1h-3zM217,694h3v1h-3zM210,693h1v1h-1zM205,683h2v3h-2zM215,700h2v1h-2zM187,722h2v1h-2zM197,721h2v2h-2zM194,731h2v1h-2zM223,694h2v3h-2zM216,688h3v2h-3zM202,698h2v3h-2zM210,683h2v3h-2zM194,731h1v2h-1zM212,699h1v1h-1zM222,679h3v2h-3zM224,684h1v1h-1zM204,715h1v1h-1zM216,686h1v1h-1zM215,685h1v2h-1zM223,676h2v2h-2zM205,696h2v3h-2zM210,698h2v2h-2zM212,678h2v2h-2zM217,693h1v1h-1zM200,707h1v3h-1zM206,709h1v1h-1zM220,702h1v1h-1zM197,715h1v2h-1zM220,694h1v2h-1zM208,698h2v2h-2zM195,702h1v2h-1zM206,687h2v2h-2zM200,702h1v1h-1zM210,682h2v2h-2zM201,704h1v3h-1zM191,726h1v2h-1zM223,694h2v3h-2zM218,685h3v1h-3zM199,716h3v3h-3zM210,701h1v3h-1zM189,716h1v1h-1zM205,710h1v2h-1zM200,709h2v2h-2zM194,708h2v2h-2zM193,718h2v2h-2zM217,683h1v1h-1zM220,693h2v2h-2zM201,715h1v1h-1zM206,679h1v3h-1zM211,704h2v3h-2zM204,682h3v3h-3zM194,725h2v2h-2zM196,720h2v2h-2zM211,690h2v2h-2zM202,707h1v3h-1zM196,725h2v1h-2zM191,724h2v1h-2zM211,690h1v1h-1zM204,696h1v3h-1zM199,699h1v1h-1zM191,723h1v2h-1zM194,720h1v1h-1zM195,729h3v2h-3zM187,720h3v1h-3zM208,700h1v1h-1zM215,682h3v1h-3zM222,690h1v2h-1zM222,695h1v1h-1zM209,691h2v2h-2zM187,723h1v3h-1zM213,688h1v1h-1zM201,705h3v1h-3zM221,694h1v1h-1zM217,694h3v2h-3zM194,715h1v2h-1zM188,714h1v1h-1zM207,707h1v2h-1zM209,680h3v1h-3zM222,693h1v2h-1zM222,692h2v1h-2zM194,709h3v2h-3zM208,697h2v1h-2zM221,675h1v1h-1zM210,695h3v3h-3zM193,729h3v2h-3zM225,677h2v2h-2zM205,706h2v2h-2zM207,691h2v2h-2zM207,687h1v1h-1zM201,713h2v2h-2zM222,686h2v2h-2zM218,684h2v3h-2zM213,682h2v1h-2zM184,718h3v2h-3zM196,708h3v1h-3zM197,723h2v3h-2zM224,692h2v1h-2zM195,713h2v1h-2zM206,704h2v1h-2zM219,704h2v2h-2zM218,680h2v2h-2zM201,718h3v1h-3zM196,724h3v2h-3zM203,712h1v1h-1zM211,690h1v1h-1zM224,677h2v1h-2zM199,731h2v3h-2zM222,691h2v1h-2zM215,676h1v2h-1zM199,727h2v2h-2zM209,709h1v2h-1zM197,725h2v3h-2zM218,679h2v1h-2zM198,712h1v2h-1zM211,686h1v1h-1zM184,720h2v3h-2zM191,711h2v3h-2zM215,698h1v1h-1zM200,727h1v2h-1zM224,687h2v3h-2zM209,688h1v2h-1zM218,682h3v2h-3zM217,702h3v1h-3zM200,709h3v2h-3zM193,703h2v2h-2zM197,724h2v1h-2zM196,727h1v2h-1zM220,694h1v2h-1zM217,690h3v2h-3zM208,701h3v1h-3zM188,728h2v1h-2zM207,685h1v2h-1zM219,690h2v2h-2zM190,714h3v3h-3zM215,684h1v2h-1zM218,681h3v3h-3zM198,717h1v3h-1zM222,687h3v2h-3zM213,687h1v3h-1zM219,689h2v2h-2zM223,674h2v2h-2zM208,696h2v1h-2zM193,713h2v2h-2zM193,717h2v2h-2zM188,719h2v3h-2zM187,711h1v2h-1zM217,679h2v3h-2zM210,695h1v1h-1zM208,709h2v2h-2zM221,696h3v2h-3zM207,691h1v3h-1zM186,720h2v3h-2zM189,720h2v2h-2zM208,699h1v2h-1zM190,726h1v1h-1zM203,718h2v3h-2zM195,714h3v2h-3zM215,693h1v2h-1zM216,679h2v2h-2zM190,729h1v2h-1zM223,685h3v2h-3zM198,711h1v2h-1zM192,704h2v2h-2zM221,696h3v1h-3zM221,681h2v1h-2zM196,717h3v1h-3zM195,707h2v1h-2zM200,714h2v1h-2zM221,694h3v3h-3zM219,679h1v1h-1zM187,712h3v3h-3zM193,710h2v3h-2zM218,682h2v1h-2zM218,696h1v2h-1zM194,702h3v2h-3zM219,689h2v1h-2zM193,725h1v1h-1zM190,711h2v2h-2zM208,679h2v2h-2zM198,709h3v2h-3zM190,727h1v2h-1zM223,675h1v1h-1zM201,719h3v3h-3zM199,709h2v3h-2zM214,691h1v1h-1zM198,718h2v1h-2zM195,707h2v2h-2zM206,707h1v3h-1zM221,690h2v3h-2zM208,694h1v2h-1zM218,685h2v1h-2zM204,703h3v2h-3zM201,716h1v3h-1zM192,720h1v3h-1zM207,691h1v1h-1zM223,685h1v1h-1zM211,684h3v1h-3zM219,692h2v2h-2zM173,731h1v1h-1zM153,727h2v1h-2zM153,730h3v3h-3zM171,735h3v2h-3zM169,730h1v2h-1zM167,742h2v2h-2zM159,729h2v3h-2zM156,730h1v3h-1zM157,718h2v2h-2zM164,730h3v3h-3zM161,734h2v3h-2zM163,724h1v1h-1zM165,727h1v1h-1zM165,736h3v1h-3zM156,726h1v3h-1zM168,743h3v2h-3zM171,731h3v1h-3zM162,745h2v2h-2zM166,747h1v2h-1zM160,730h1v1h-1zM169,743h1v2h-1zM176,736h2v2h-2zM162,742h2v2h-2zM163,733h3v1h-3zM170,737h3v2h-3zM162,734h1v1h-1zM159,737h2v1h-2zM173,732h2v3h-2zM170,737h1v2h-1zM161,746h1v1h-1zM168,739h3v1h-3zM174,732h1v1h-1zM164,731h2v2h-2zM169,739h1v1h-1zM158,749h2v2h-2zM154,725h2v1h-2zM162,726h1v2h-1zM154,721h1v2h-1zM153,725h1v1h-1zM152,724h2v2h-2zM156,731h1v1h-1zM170,730h2v1h-2zM170,731h2v1h-2zM163,727h3v2h-3zM157,747h1v2h-1zM150,725h2v1h-2zM152,727h3v1h-3zM158,750h3v1h-3zM167,739h2v1h-2zM165,739h1v2h-1zM158,746h1v2h-1zM167,742h2v1h-2zM159,726h1v1h-1zM159,724h1v2h-1zM161,731h2v1h-2zM157,720h2v1h-2zM165,748h1v2h-1zM157,726h1v2h-1zM167,734h2v3h-2zM160,745h3v2h-3zM164,744h3v1h-3zM162,724h1v2h-1zM166,740h2v1h-2zM163,747h2v1h-2zM162,731h1v1h-1zM168,727h2v3h-2zM157,718h1v1h-1zM157,729h1v2h-1zM162,751h1v2h-1zM152,725h1v3h-1zM168,734h2v1h-2zM174,738h2v2h-2zM163,743h2v2h-2zM163,736h3v2h-3zM165,749h2v1h-2zM160,749h1v2h-1zM166,739h1v2h-1zM166,730h1v1h-1zM166,741h1v2h-1zM163,743h1v1h-1zM164,731h2v3h-2zM161,748h1v1h-1zM158,747h3v2h-3zM167,727h1v2h-1zM160,746h1v2h-1zM156,721h1v3h-1zM160,740h2v3h-2zM164,737h1v2h-1zM160,742h3v2h-3zM159,731h2v2h-2zM165,746h3v2h-3zM163,726h2v1h-2zM177,735h2v2h-2zM161,746h1v1h-1zM169,744h1v1h-1zM152,721h1v1h-1zM169,728h3v3h-3zM169,730h1v3h-1zM159,723h3v1h-3zM165,731h1v2h-1zM177,733h2v2h-2zM160,747h1v3h-1zM160,744h2v3h-2zM163,735h2v1h-2zM153,725h3v1h-3zM166,731h2v3h-2zM164,738h1v1h-1zM156,722h2v1h-2zM150,723h1v2h-1zM161,749h1v3h-1zM161,734h2v2h-2zM166,726h1v1h-1zM162,735h1v1h-1zM159,720h1v1h-1zM161,749h1v2h-1zM152,724h2v3h-2zM154,723h1v2h-1zM167,741h2v1h-2zM154,731h3v1h-3zM163,734h2v2h-2zM169,739h1v1h-1zM161,748h1v2h-1zM160,734h1v1h-1zM174,737h3v2h-3zM176,736h2v2h-2zM152,720h3v3h-3zM163,729h2v3h-2zM159,722h3v2h-3zM173,731h1v2h-1zM163,743h3v1h-3zM153,724h1v3h-1zM162,725h3v1h-3zM166,733h3v2h-3zM168,731h2v3h-2zM171,730h1v1h-1zM167,743h1v2h-1zM160,736h1v2h-1zM159,724h2v2h-2zM164,746h2v1h-2zM157,717h1v3h-1zM156,732h3v2h-3zM171,739h3v2h-3zM159,732h2v3h-2zM165,736h1v1h-1zM168,735h2v3h-2zM153,720h2v1h-2zM158,723h2v2h-2zM158,731h2v2h-2zM164,727h2v3h-2zM161,748h1v1h-1zM166,737h3v3h-3zM157,747h2v2h-2zM159,719h2v3h-2zM174,731h2v3h-2zM161,743h2v1h-2zM161,750h1v3h-1zM163,734h1v1h-1zM170,740h1v1h-1zM159,724h1v1h-1zM166,744h2v1h-2zM152,726h2v1h-2zM160,727h1v2h-1zM173,737h2v1h-2zM169,737h3v2h-3zM173,735h2v2h-2zM168,734h2v2h-2zM162,727h1v2h-1zM165,737h2v1h-2zM164,729h1v1h-1zM168,735h1v3h-1zM165,731h2v1h-2zM156,722h2v2h-2zM161,728h1v2h-1zM158,729h2v1h-2zM166,746h3v2h-3zM164,739h1v2h-1zM155,731h1v3h-1zM160,743h2v1h-2zM159,744h1v2h-1zM167,739h1v3h-1zM158,753h1v3h-1zM171,735h1v1h-1zM176,732h2v2h-2zM90,747h3v2h-3zM93,749h2v1h-2zM97,752h2v3h-2zM88,745h2v2h-2zM100,753h2v3h-2zM94,746h1v2h-1zM86,741h2v3h-2zM98,753h1v2h-1zM85,746h2v3h-2zM84,742h1v2h-1zM98,755h1v2h-1zM103,751h2v2h-2zM97,746h2v2h-2zM96,747h1v1h-1zM82,747h1v2h-1zM101,754h1v1h-1zM94,745h2v1h-2zM84,750h1v2h-1zM98,752h3v3h-3zM87,754h3v3h-3zM93,745h2v2h-2zM99,747h2v1h-2zM100,752h1v1h-1zM91,755h2v1h-2zM98,747h3v1h-3zM90,750h1v3h-1zM88,743h2v3h-2zM93,745h1v2h-1zM92,743h1v1h-1zM89,753h2v1h-2zM99,753h1v3h-1zM90,747h2v3h-2zM84,745h2v3h-2zM92,751h2v2h-2zM98,748h1v2h-1zM88,744h2v1h-2zM96,755h1v2h-1zM91,748h1v2h-1zM82,747h3v1h-3zM98,748h1v1h-1zM90,744h1v1h-1zM101,751h2v3h-2zM90,754h3v2h-3zM101,753h1v2h-1zM93,751h2v2h-2zM102,749h2v2h-2zM86,742h1v1h-1zM83,744h2v1h-2zM82,749h2v3h-2zM95,748h1v3h-1zM95,745h3v2h-3zM83,749h1v1h-1zM92,746h1v1h-1zM95,745h3v3h-3zM91,756h1v3h-1zM92,745h2v2h-2zM90,745h2v1h-2zM88,754h1v3h-1zM100,749h1v2h-1zM97,755h1v3h-1zM86,743h1v2h-1zM86,752h2v2h-2zM85,752h1v1h-1zM85,746h2v3h-2zM86,744h1v1h-1zM90,748h3v1h-3zM99,755h1v1h-1zM88,744h1v1h-1zM88,751h2v1h-2zM85,742h2v2h-2zM89,742h3v1h-3zM82,744h1v3h-1zM92,748h1v1h-1zM92,747h1v2h-1zM93,743h2v2h-2zM84,745h3v3h-3zM100,751h2v2h-2zM83,744h1v2h-1zM96,753h1v1h-1zM90,742h3v3h-3zM100,748h1v1h-1zM88,743h1v1h-1zM92,748h1v2h-1zM98,749h2v3h-2zM88,744h2v2h-2zM98,752h1v2h-1zM90,752h2v3h-2zM92,750h1v1h-1zM91,741h1v1h-1zM83,743h2v1h-2zM86,749h1v2h-1zM86,745h1v1h-1zM94,748h1v1h-1zM92,753h1v1h-1zM85,745h2v3h-2zM85,754h1v3h-1zM87,742h1v1h-1zM101,750h2v1h-2zM102,752h2v2h-2zM87,751h2v3h-2zM90,748h3v1h-3zM87,753h1v2h-1zM87,752h1v1h-1zM100,755h2v2h-2zM96,749h2v2h-2zM102,753h1v3h-1zM82,743h2v3h-2zM80,746h1v2h-1zM100,753h1v3h-1zM97,747h1v1h-1zM84,749h3v2h-3zM93,753h3v1h-3zM99,755h1v1h-1zM81,743h3v1h-3zM91,748h2v1h-2zM95,750h2v1h-2zM84,749h2v1h-2zM89,743h1v1h-1zM92,753h1v2h-1zM85,742h2v2h-2zM90,746h2v2h-2zM103,750h2v1h-2zM90,754h2v2h-2zM94,756h2v2h-2zM90,753h3v2h-3zM101,754h1v2h-1zM87,752h2v2h-2zM98,756h2v2h-2zM90,749h2v2h-2zM88,754h2v1h-2zM88,747h2v2h-2zM89,754h2v3h-2zM84,742h2v1h-2zM93,743h3v2h-3zM84,746h1v2h-1zM88,743h1v3h-1zM97,748h1v1h-1zM101,750h1v2h-1zM88,746h3v1h-3zM81,744h2v3h-2zM91,750h1v3h-1zM101,750h2v2h-2zM96,748h2v2h-2zM82,750h2v3h-2zM87,748h1v2h-1zM86,747h2v2h-2zM100,749h1v1h-1zM88,746h3v1h-3zM99,751h1v1h-1zM90,747h2v2h-2zM92,755h2v2h-2zM93,744h1v3h-1zM89,751h3v1h-3zM81,747h1v1h-1zM87,747h1v2h-1zM118,756h2v1h-2zM120,751h3v1h-3zM117,750h1v2h-1zM122,745h1v2h-1zM138,746h1v3h-1zM127,753h1v1h-1zM131,757h1v1h-1zM127,752h3v3h-3zM125,756h2v3h-2zM134,753h1v2h-1zM126,755h2v1h-2zM127,743h3v3h-3zM129,741h1v1h-1zM126,745h2v2h-2zM127,750h1v1h-1zM132,752h1v2h-1zM130,744h1v2h-1zM136,754h2v2h-2zM124,754h3v2h-3zM134,750h1v2h-1zM125,751h1v1h-1zM130,756h3v2h-3zM144,756h3v2h-3zM129,742h1v3h-1zM144,752h2v1h-2zM140,753h3v1h-3zM118,752h2v3h-2zM125,743h2v1h-2zM125,744h1v1h-1zM144,755h2v2h-2zM119,751h2v3h-2zM132,750h2v1h-2zM136,745h1v2h-1zM122,750h1v2h-1zM136,750h3v2h-3zM123,752h2v2h-2zM141,752h2v3h-2zM147,752h3v2h-3zM131,750h2v1h-2zM145,751h1v2h-1zM129,753h3v2h-3zM134,756h2v2h-2zM127,745h1v1h-1zM129,750h2v3h-2zM119,749h1v3h-1zM139,750h2v1h-2zM116,751h1v2h-1zM142,755h2v3h-2zM132,741h2v2h-2zM117,751h1v1h-1zM130,751h3v1h-3zM122,752h1v1h-1zM134,745h3v2h-3zM137,749h1v2h-1zM118,756h1v1h-1zM144,750h2v3h-2zM130,743h2v1h-2zM127,743h3v2h-3zM138,757h2v3h-2zM143,751h1v2h-1zM143,755h3v2h-3zM120,747h1v2h-1zM126,743h2v2h-2zM145,754h1v2h-1zM116,753h1v2h-1zM137,752h2v3h-2zM146,753h3v3h-3zM118,753h3v2h-3zM130,743h2v3h-2zM125,754h2v2h-2zM126,755h1v2h-1zM136,756h1v3h-1zM124,750h2v2h-2zM127,746h2v2h-2zM137,752h1v2h-1zM132,754h3v3h-3zM137,745h3v2h-3zM141,753h2v2h-2zM143,753h1v2h-1zM133,752h3v3h-3zM126,755h1v1h-1zM116,752h2v1h-2zM131,754h1v2h-1zM119,746h3v2h-3zM132,744h3v2h-3zM139,746h3v3h-3zM139,756h1v2h-1zM128,749h2v1h-2zM123,749h1v1h-1zM133,750h1v2h-1zM127,750h2v2h-2zM136,746h2v2h-2zM125,751h2v1h-2zM118,754h2v1h-2zM139,755h1v2h-1zM129,751h1v1h-1zM126,754h1v2h-1zM135,745h2v1h-2zM127,745h2v1h-2zM128,749h1v1h-1zM115,750h2v1h-2zM127,757h2v1h-2zM131,741h3v2h-3zM119,754h1v1h-1zM116,750h3v2h-3zM126,751h1v1h-1zM133,743h2v1h-2zM145,754h3v1h-3zM140,746h1v1h-1zM124,756h2v3h-2zM130,750h2v2h-2zM130,751h1v1h-1zM137,757h1v2h-1zM122,756h3v2h-3zM131,744h3v3h-3zM127,749h2v1h-2zM131,752h2v2h-2zM141,747h1v1h-1zM131,744h2v1h-2zM129,751h1v2h-1zM141,756h2v3h-2zM117,754h3v2h-3zM143,752h1v3h-1zM142,748h1v3h-1zM126,753h1v2h-1zM120,756h1v2h-1zM141,757h3v1h-3zM119,755h2v2h-2zM135,747h3v1h-3zM123,743h1v1h-1zM124,752h3v3h-3zM130,744h2v2h-2zM136,756h3v2h-3zM130,755h3v1h-3zM135,754h1v1h-1zM128,742h1v2h-1zM132,745h1v3h-1zM124,747h2v3h-2zM127,757h2v2h-2zM120,753h2v1h-2zM136,752h2v1h-2zM132,750h2v2h-2zM143,749h1v2h-1zM134,747h3v3h-3zM132,756h2v2h-2zM125,754h1v2h-1zM128,745h2v2h-2zM138,752h1v1h-1zM129,754h1v1h-1zM118,755h1v1h-1zM137,747h3v1h-3zM137,752h1v3h-1zM146,750h1v2h-1zM134,746h2v1h-2zM134,748h2v1h-2zM138,754h1v2h-1zM142,754h2v2h-2zM134,745h2v1h-2zM138,754h2v2h-2zM128,743h1v1h-1zM126,753h2v2h-2zM121,751h2v1h-2zM130,742h3v1h-3zM119,747h2v2h-2zM142,748h1v2h-1zM125,744h2v1h-2zM137,747h2v2h-2zM143,756h2v1h-2zM139,756h1v1h-1zM130,741h2v1h-2zM141,749h1v1h-1zM135,749h1v3h-1zM141,754h1v2h-1zM128,748h3v2h-3zM131,749h1v1h-1zM120,754h2v2h-2zM139,752h3v1h-3zM128,751h2v2h-2zM137,745h2v3h-2zM123,751h2v2h-2zM131,750h1v1h-1zM129,756h2v1h-2zM127,743h3v2h-3zM127,747h1v1h-1zM123,751h2v2h-2zM121,745h1v2h-1zM133,751h2v1h-2zM134,753h1v1h-1zM133,744h1v3h-1zM136,749h3v1h-3zM123,748h1v2h-1zM142,751h3v1h-3zM139,750h1v2h-1zM141,747h3v3h-3zM122,756h2v2h-2zM129,749h1v1h-1zM144,751h3v1h-3zM136,753h1v2h-1zM138,753h2v3h-2zM143,753h2v3h-2zM133,748h1v1h-1zM141,751h1v3h-1zM134,752h1v3h-1zM138,754h2v3h-2zM121,751h1v2h-1zM132,752h3v3h-3zM141,750h1v2h-1zM142,754h2v3h-2zM132,749h2v2h-2zM125,749h2v2h-2zM124,756h1v2h-1zM127,756h2v2h-2zM134,747h1v2h-1zM128,747h2v2h-2zM125,742h1v2h-1zM140,746h1v2h-1zM136,745h2v3h-2zM117,754h2v3h-2zM124,753h1v3h-1zM132,752h3v1h-3zM134,746h2v1h-2zM136,745h2v2h-2zM799,645h3v3h-3zM803,623h2v2h-2zM801,585h3v1h-3zM802,636h1v1h-1zM798,653h2v3h-2zM799,618h2v2h-2zM798,649h2v3h-2zM800,579h1v1h-1zM805,633h3v2h-3zM803,606h2v2h-2zM805,592h1v3h-1zM800,654h3v2h-3zM804,604h1v3h-1zM801,594h1v2h-1zM797,648h2v1h-2zM802,648h1v1h-1zM796,584h2v2h-2zM797,618h1v1h-1zM798,628h1v2h-1zM804,603h1v3h-1zM803,601h3v1h-3zM800,613h1v1h-1zM799,619h2v3h-2zM803,589h3v2h-3zM802,654h2v1h-2zM800,624h2v2h-2zM805,635h2v2h-2zM801,593h1v3h-1zM799,634h2v1h-2zM799,644h3v3h-3zM800,644h2v1h-2zM805,613h1v3h-1zM798,602h1v1h-1zM804,635h3v2h-3zM801,622h3v2h-3zM797,613h2v2h-2zM798,631h2v2h-2zM800,651h2v1h-2zM798,643h1v1h-1zM798,627h1v3h-1zM805,591h3v1h-3zM803,626h2v1h-2zM805,654h1v3h-1zM799,635h1v3h-1zM801,591h3v2h-3zM799,578h2v2h-2zM803,655h1v1h-1zM800,643h2v2h-2zM797,645h3v2h-3zM804,572h2v2h-2zM804,608h3v1h-3zM799,580h3v2h-3zM801,581h1v2h-1zM802,598h1v3h-1zM798,591h3v1h-3zM800,614h2v2h-2zM804,617h1v1h-1zM797,614h2v1h-2zM799,613h3v2h-3zM801,631h2v1h-2zM802,632h2v2h-2zM802,641h2v3h-2zM803,589h3v2h-3zM804,581h2v1h-2zM799,628h3v1h-3zM802,621h2v2h-2zM802,577h1v2h-1zM798,648h1v2h-1zM800,606h2v1h-2zM802,601h3v1h-3zM805,613h2v1h-2zM803,628h2v3h-2zM803,622h2v3h-2zM800,573h1v1h-1zM798,634h1v1h-1zM799,640h2v3h-2zM803,633h3v2h-3zM804,611h2v1h-2zM800,618h1v3h-1zM799,611h2v3h-2zM800,584h2v2h-2zM804,632h3v1h-3zM801,583h2v2h-2zM800,596h2v2h-2zM802,579h1v1h-1zM803,645h1v1h-1zM801,651h3v2h-3zM800,647h1v1h-1zM805,572h2v2h-2zM803,607h3v1h-3zM800,586h1v2h-1zM802,641h1v3h-1zM802,600h1v1h-1zM805,587h2v2h-2zM804,595h1v1h-1zM797,581h1v1h-1zM800,580h3v2h-3zM803,593h2v1h-2zM804,592h2v2h-2zM805,642h1v2h-1zM802,584h1v2h-1zM805,573h3v3h-3zM798,598h3v2h-3zM799,639h1v1h-1zM802,651h2v3h-2zM801,598h3v3h-3zM805,649h1v1h-1zM800,650h1v3h-1zM799,588h1v1h-1zM805,590h2v1h-2zM801,606h2v3h-2zM801,584h3v2h-3zM798,645h2v2h-2zM801,637h2v1h-2zM803,620h2v2h-2zM805,581h1v1h-1zM799,642h2v3h-2zM802,655h2v2h-2zM799,642h1v3h-1zM802,616h2v2h-2zM803,607h1v3h-1zM803,587h2v1h-2zM800,621h1v1h-1zM802,573h1v3h-1zM802,600h3v3h-3zM805,613h3v2h-3zM798,580h1v1h-1zM803,649h1v3h-1zM805,655h2v1h-2zM803,578h2v3h-2zM805,575h1v2h-1zM803,641h1v1h-1zM801,576h2v1h-2zM800,619h3v1h-3zM803,601h1v3h-1zM805,598h3v3h-3zM800,625h1v2h-1zM804,626h1v3h-1zM804,588h1v2h-1zM805,628h2v1h-2zM799,588h2v2h-2zM805,631h3v3h-3zM798,599h1v1h-1zM804,606h1v3h-1zM800,587h1v2h-1zM805,629h2v2h-2zM800,595h3v2h-3zM801,646h2v1h-2zM803,581h1v1h-1zM802,655h2v2h-2zM799,623h3v3h-3zM805,652h3v3h-3zM800,599h2v2h-2zM800,620h2v3h-2zM799,620h2v2h-2zM804,590h3v3h-3zM800,623h3v2h-3zM800,620h2v1h-2zM805,594h3v2h-3zM799,623h1v1h-1zM803,628h3v2h-3zM799,624h1v1h-1zM799,655h1v1h-1zM802,628h3v2h-3zM803,616h1v2h-1zM801,589h1v1h-1zM803,655h3v2h-3zM805,640h2v1h-2zM802,583h2v2h-2zM799,650h2v1h-2zM799,608h2v2h-2zM798,610h1v3h-1zM800,652h1v1h-1zM803,654h1v1h-1zM805,656h1v2h-1zM801,583h1v1h-1zM802,633h1v1h-1zM803,641h1v1h-1zM801,644h2v2h-2zM798,598h1v1h-1zM804,577h1v1h-1zM798,617h2v1h-2zM800,620h2v3h-2zM800,603h2v2h-2zM803,621h1v2h-1zM805,619h2v2h-2zM800,642h1v3h-1zM802,635h3v1h-3zM804,601h3v2h-3zM799,617h3v1h-3zM801,587h3v1h-3zM801,653h2v3h-2zM800,605h1v1h-1zM798,616h1v1h-1zM797,598h2v1h-2zM804,604h2v1h-2zM798,645h2v1h-2zM803,578h3v2h-3zM801,612h1v1h-1zM802,623h3v2h-3zM798,613h1v2h-1zM802,588h1v1h-1zM800,576h1v1h-1zM803,654h1v1h-1zM805,644h3v2h-3zM797,597h1v1h-1zM797,584h1v3h-1zM805,609h3v2h-3zM801,598h2v1h-2zM801,655h2v2h-2zM804,577h1v1h-1zM805,612h2v1h-2zM798,628h3v2h-3zM803,640h1v1h-1zM798,646h2v3h-2zM805,597h1v1h-1zM801,595h1v2h-1zM801,588h2v2h-2zM800,615h2v1h-2zM802,618h2v2h-2zM805,626h2v1h-2zM805,596h1v2h-1zM802,620h3v3h-3zM800,625h3v1h-3zM798,619h2v3h-2zM802,614h2v2h-2zM800,612h1v1h-1zM805,625h1v1h-1zM804,630h3v2h-3zM801,580h1v1h-1zM798,647h1v2h-1zM803,615h2v1h-2zM800,605h2v1h-2zM805,604h1v1h-1zM801,612h2v3h-2zM800,626h3v1h-3zM803,605h2v2h-2zM799,583h1v1h-1zM804,580h3v2h-3zM798,640h1v1h-1zM799,588h1v2h-1zM798,654h2v1h-2zM803,618h1v1h-1zM803,603h1v1h-1zM800,606h1v2h-1zM804,611h1v1h-1zM800,584h3v2h-3zM805,612h1v3h-1zM802,614h1v3h-1zM805,647h1v1h-1zM798,630h2v2h-2zM799,594h1v1h-1zM799,595h1v2h-1zM798,589h3v2h-3zM800,596h1v2h-1zM800,604h2v2h-2zM800,614h2v1h-2zM799,637h2v2h-2zM802,647h3v1h-3zM798,580h2v1h-2zM803,649h1v1h-1zM805,607h1v1h-1zM801,577h1v2h-1zM801,645h1v2h-1zM799,620h1v2h-1zM799,634h1v3h-1zM804,633h1v2h-1zM802,619h3v2h-3zM802,597h2v1h-2zM805,589h1v1h-1zM802,613h1v1h-1zM800,637h1v2h-1zM804,576h3v3h-3zM798,606h3v1h-3zM798,589h1v2h-1zM805,627h3v2h-3zM802,637h2v2h-2zM805,647h3v2h-3zM801,617h2v1h-2zM803,643h2v2h-2zM796,645h2v3h-2zM800,646h3v2h-3zM801,579h2v2h-2zM804,580h2v1h-2zM804,581h3v1h-3zM803,578h1v2h-1zM805,623h3v1h-3zM803,586h1v2h-1zM800,591h1v1h-1zM804,635h1v2h-1zM804,585h1v2h-1zM797,626h3v1h-3zM802,609h2v2h-2zM802,601h2v1h-2zM804,594h1v1h-1zM803,617h2v3h-2zM801,601h2v1h-2zM799,627h2v2h-2zM798,612h2v1h-2zM805,628h3v3h-3zM802,608h1v1h-1zM803,576h2v2h-2zM801,643h3v1h-3zM798,602h2v2h-2zM801,641h3v2h-3zM800,638h3v3h-3zM802,604h3v1h-3zM802,636h3v3h-3zM798,654h1v2h-1zM803,626h2v2h-2zM801,585h2v1h-2zM803,579h2v2h-2zM800,581h1v2h-1zM798,596h2v2h-2zM804,621h1v2h-1zM802,614h1v2h-1zM804,605h1v3h-1zM802,644h3v1h-3zM803,646h2v3h-2zM798,623h3v3h-3zM803,641h1v3h-1zM805,629h2v3h-2zM802,628h3v2h-3zM800,572h1v1h-1zM801,654h1v1h-1zM799,615h2v2h-2zM800,612h1v2h-1zM797,603h2v2h-2zM798,634h1v1h-1zM800,580h3v1h-3zM802,593h1v2h-1zM801,621h1v1h-1zM801,625h2v2h-2zM798,625h1v3h-1zM800,626h2v1h-2zM804,597h1v2h-1zM803,612h1v2h-1zM800,574h2v2h-2zM801,641h1v3h-1zM801,645h3v2h-3zM802,619h2v2h-2zM802,633h3v3h-3zM803,641h1v2h-1zM800,639h2v1h-2zM801,651h2v2h-2zM803,584h3v1h-3zM800,635h2v2h-2zM804,636h1v2h-1zM799,627h3v1h-3zM803,634h2v1h-2zM803,635h1v3h-1zM802,613h3v3h-3zM800,630h1v1h-1zM802,642h1v2h-1zM800,626h3v3h-3zM802,652h1v1h-1zM797,615h3v1h-3zM799,643h1v1h-1zM801,583h2v1h-2zM802,585h2v1h-2zM799,643h2v2h-2zM803,578h2v2h-2zM805,641h3v1h-3zM801,593h2v2h-2zM802,610h2v1h-2zM798,585h1v2h-1zM803,620h2v2h-2zM800,641h1v3h-1zM232,754h3v2h-3zM226,747h1v2h-1zM233,755h2v1h-2zM221,745h3v3h-3zM225,744h2v1h-2zM230,752h2v3h-2zM231,755h2v3h-2zM226,745h2v1h-2zM219,748h1v2h-1zM228,750h1v2h-1zM212,740h2v3h-2zM238,754h1v1h-1zM226,750h2v2h-2zM218,741h2v2h-2zM213,740h3v3h-3zM211,741h3v2h-3zM225,744h2v1h-2zM235,757h2v3h-2zM226,748h1v1h-1zM216,744h2v1h-2zM222,748h1v2h-1zM212,741h2v1h-2zM217,745h1v1h-1zM227,746h3v2h-3zM218,745h1v2h-1zM229,757h2v2h-2zM230,754h2v3h-2zM222,747h1v1h-1zM235,755h1v1h-1zM230,755h1v2h-1zM230,755h1v2h-1zM217,742h2v1h-2zM219,742h1v3h-1zM240,757h3v1h-3zM221,744h2v1h-2zM229,751h2v1h-2zM215,743h2v1h-2zM237,757h1v1h-1zM216,739h2v2h-2zM226,750h1v3h-1zM229,750h1v2h-1zM216,745h2v1h-2zM234,756h2v1h-2zM229,752h1v1h-1zM217,741h1v3h-1zM225,749h1v1h-1zM222,746h3v2h-3zM237,757h1v2h-1zM231,753h2v2h-2z" fill="#000" shape-rendering="crispEdges"/>
<path d="M198,720h1v1h-1zM205,711h1v1h-1zM187,722h1v1h-1zM218,681h1v1h-1zM210,681h1v1h-1zM197,712h1v1h-1zM195,721h1v1h-1zM220,679h1v1h-1zM195,724h1v1h-1zM217,681h1v1h-1zM197,730h1v1h-1zM188,726h1v1h-1zM210,696h1v1h-1zM214,682h1v1h-1zM186,720h1v1h-1zM209,699h1v1h-1zM196,708h1v1h-1zM207,679h1v1h-1zM218,678h1v1h-1zM192,706h1v1h-1zM190,719h1v1h-1zM195,704h1v1h-1zM200,711h1v1h-1zM206,684h1v1h-1zM192,727h1v1h-1zM191,719h1v1h-1zM195,713h1v1h-1zM221,687h1v1h-1zM194,710h1v1h-1zM195,715h1v1h-1zM191,711h1v1h-1zM195,715h1v1h-1zM196,706h1v1h-1zM196,730h1v1h-1zM213,685h1v1h-1zM210,700h1v1h-1zM205,697h1v1h-1zM216,696h1v1h-1zM207,703h1v1h-1zM207,705h1v1h-1zM184,716h1v1h-1zM223,686h1v1h-1zM191,715h1v1h-1zM194,705h1v1h-1zM210,701h1v1h-1zM214,681h1v1h-1zM208,705h1v1h-1zM224,682h1v1h-1zM199,712h1v1h-1zM215,690h1v1h-1zM195,729h1v1h-1zM192,709h1v1h-1zM208,684h1v1h-1zM193,713h1v1h-1zM196,705h1v1h-1zM200,705h1v1h-1zM186,714h1v1h-1zM216,683h1v1h-1zM218,693h1v1h-1zM213,680h1v1h-1zM193,704h1v1h-1zM193,708h1v1h-1zM198,716h1v1h-1zM200,713h1v1h-1zM208,692h1v1h-1zM198,731h1v1h-1zM186,718h1v1h-1zM209,702h1v1h-1zM201,707h1v1h-1zM220,675h1v1h-1zM213,692h1v1h-1zM217,681h1v1h-1zM200,711h1v1h-1zM205,701h1v1h-1zM217,678h1v1h-1zM207,706h1v1h-1zM210,686h1v1h-1zM194,718h1v1h-1zM192,715h1v1h-1zM211,697h1v1h-1zM223,689h1v1h-1zM224,681h1v1h-1zM185,718h1v1h-1zM198,711h1v1h-1zM216,693h1v1h-1zM217,700h1v1h-1zM197,706h1v1h-1zM194,721h1v1h-1zM193,704h1v1h-1zM212,700h1v1h-1zM200,713h1v1h-1zM214,693h1v1h-1zM220,686h1v1h-1zM202,716h1v1h-1zM216,688h1v1h-1zM224,685h1v1h-1zM194,717h1v1h-1zM222,690h1v1h-1zM217,695h1v1h-1zM213,683h1v1h-1zM211,681h1v1h-1zM208,680h1v1h-1zM188,719h1v1h-1zM155,725h1v1h-1zM168,731h1v1h-1zM161,734h1v1h-1zM151,723h1v1h-1zM169,733h1v1h-1zM165,731h1v1h-1zM168,731h1v1h-1zM160,743h1v1h-1zM163,728h1v1h-1zM162,732h1v1h-1zM163,728h1v1h-1zM161,730h1v1h-1zM159,747h1v1h-1zM170,739h1v1h-1zM160,721h1v1h-1zM168,741h1v1h-1zM159,721h1v1h-1zM165,740h1v1h-1zM168,734h1v1h-1zM164,732h1v1h-1zM160,725h1v1h-1zM161,742h1v1h-1zM165,733h1v1h-1zM90,748h1v1h-1zM90,746h1v1h-1zM97,749h1v1h-1zM100,748h1v1h-1zM86,743h1v1h-1zM84,746h1v1h-1zM94,748h1v1h-1zM92,755h1v1h-1zM91,746h1v1h-1zM97,750h1v1h-1zM93,746h1v1h-1zM93,745h1v1h-1zM92,744h1v1h-1zM87,752h1v1h-1zM92,755h1v1h-1zM130,752h1v1h-1zM142,752h1v1h-1zM136,749h1v1h-1zM133,756h1v1h-1zM128,744h1v1h-1zM140,749h1v1h-1zM122,749h1v1h-1zM139,748h1v1h-1zM125,752h1v1h-1zM134,745h1v1h-1zM132,750h1v1h-1zM124,746h1v1h-1zM121,752h1v1h-1zM129,746h1v1h-1zM129,755h1v1h-1zM128,749h1v1h-1zM120,753h1v1h-1zM132,743h1v1h-1zM803,582h1v1h-1zM801,583h1v1h-1zM801,646h1v1h-1zM803,577h1v1h-1zM798,584h1v1h-1zM803,613h1v1h-1zM800,605h1v1h-1zM803,640h1v1h-1zM802,629h1v1h-1zM803,599h1v1h-1zM800,599h1v1h-1zM801,616h1v1h-1zM799,585h1v1h-1zM803,630h1v1h-1zM800,653h1v1h-1zM803,653h1v1h-1zM803,630h1v1h-1zM801,585h1v1h-1zM800,626h1v1h-1zM799,597h1v1h-1zM803,647h1v1h-1zM801,577h1v1h-1zM803,602h1v1h-1zM801,577h1v1h-1zM803,593h1v1h-1zM801,643h1v1h-1zM803,630h1v1h-1zM799,599h1v1h-1zM798,645h1v1h-1zM801,598h1v1h-1zM800,630h1v1h-1zM802,643h1v1h-1zM799,610h1v1h-1zM799,647h1v1h-1zM802,578h1v1h-1zM803,590h1v1h-1zM804,652h1v1h-1zM801,583h1v1h-1zM803,589h1v1h-1zM801,648h1v1h-1zM801,614h1v1h-1zM804,641h1v1h-1zM801,609h1v1h-1zM802,575h1v1h-1zM803,595h1v1h-1zM228,754h1v1h-1zM224,750h1v1h-1z" fill="#00466c" shape-rendering="crispEdges"/>
<path d="M206,713h1v1h-1zM198,714h1v1h-1zM196,723h1v1h-1zM218,683h1v1h-1zM197,710h1v1h-1zM208,681h1v1h-1zM207,686h1v1h-1zM196,715h1v1h-1zM222,689h1v1h-1zM195,712h1v1h-1zM196,717h1v1h-1zM197,708h1v1h-1zM197,732h1v1h-1zM211,702h1v1h-1zM217,698h1v1h-1zM211,703h1v1h-1zM225,684h1v1h-1zM196,731h1v1h-1zM199,718h1v1h-1zM225,687h1v1h-1zM223,692h1v1h-1zM209,682h1v1h-1zM161,723h1v1h-1zM169,743h1v1h-1zM91,750h1v1h-1zM91,748h1v1h-1zM87,745h1v1h-1zM95,750h1v1h-1zM93,757h1v1h-1zM92,748h1v1h-1zM94,747h1v1h-1zM123,751h1v1h-1zM126,754h1v1h-1zM125,748h1v1h-1zM122,754h1v1h-1zM130,757h1v1h-1zM804,615h1v1h-1zM801,607h1v1h-1zM802,645h1v1h-1zM802,600h1v1h-1zM804,591h1v1h-1zM229,756h1v1h-1z" fill="#7a6a62" shape-rendering="crispEdges"/>
<path d="M789.7,575.4 L792.8,576.0 L796.5,576.6 M796.5,578.5 L799.6,583.4 L802.6,587.1 L805.1,582.2 M786.6,595.7 L790.9,595.1 L795.2,595.7 L799.6,596.9 L802.3,595.7 M795.9,586.5 L798.9,589.6 L800.8,593.3 M791.6,606.8 L795.9,608.0 L798.9,605.6 L801.4,601.9 M796.5,602.5 L799.6,600.6 M787.2,617.9 L791.6,618.5 L795.9,619.1 L799.6,620.3 L801.4,617.9 M796.5,614.2 L799.6,616.7 M795.9,621.6 L798.9,625.3 L799.6,629.0 M791.6,633.9 L795.2,635.1 L798.9,636.4 L802.3,635.1 M796.5,630.2 L799.6,633.9 M794.6,638.8 L798.9,640.0 L802.3,641.3 M788.5,646.2 L792.2,646.2 L796.5,647.4 L800.2,646.2 L803.3,645.0 M789.7,653.6 L792.8,651.1 L796.5,651.7 L800.2,649.9 L804.5,648.7 M802.6,577.2 L800.2,584.6 L801.4,592.0 L800.2,600.6 L800.8,609.3 L799.6,617.9 L800.8,626.5 L799.6,635.1 L801.4,643.7 L803.3,651.1" fill="none" stroke="#000" stroke-width="2" stroke-linejoin="round" shape-rendering="crispEdges"/>
<path d="M806.0,582.2 L803.5,588.3 L801.7,596.9 L804.1,600.6 L802.5,609.3 L803.3,619.1 L804.5,629.0 L803.3,638.8 L805.1,646.2 L806.5,646.2 L806.5,582.2Z" fill="#00466c" shape-rendering="crispEdges"/>
<path d="M248.9,678.4 L252.1,681.6 L254.0,688.0 L253.7,696.1 L251.3,703.3 L247.3,708.9" fill="none" stroke="#000" stroke-width="1" stroke-dasharray="7 3 3 2" shape-rendering="crispEdges"/>
<path d="M245.7,710.5 L242.5,714.5 L238.5,717.7 M236.1,722.5 L233.7,724.9 M228.1,728.1 L224.1,731.0 M242.5,699.3 L245.7,695.3 L250.5,692.9 M228.1,664.0 L234.5,662.1 M241.7,664.8 L248.9,662.4 M257.7,660.8 L266.5,662.1 L276.1,664.0 L284.9,665.3 M226.5,668.8 L223.3,672.0" fill="none" stroke="#000" stroke-width="1.2" shape-rendering="crispEdges"/>
<path d="M181.5,6.6 L189.8,14.2 L195.7,26.1 L200.5,40.3 L201.2,59.3 L200.5,78.3 L199.3,90.2 L194.5,102.0 L188.6,110.3 L187.4,123.4 L181.5,136.4 L175.6,147.1 L175.1,156.6 L168.4,166.1 L161.3,176.7 L153.0,191.9 L154.2,192.0 L148.3,199.1 L145.9,208.6 L151.8,222.8 M240.8,6.6 L233.7,13.0 L228.9,21.4 L227.8,38.0 L226.6,52.2 L223.0,59.3 L213.5,67.6 L201.7,71.2 M240.8,6.6 L246.7,14.2 L251.5,23.7 L261.0,33.2 L264.5,47.4 L270.0,58.1 L270.0,59.3 L286.6,60.5 L293.7,55.8 L305.6,53.4 L316.3,58.1 L334.1,68.8 L350.7,81.9 L364.9,91.3 L372.0,102.0 L381.5,110.3 L395.7,117.4 L405.2,128.1 L405.2,132.9 M220.6,191.9 L234.9,182.7 L251.5,177.9 L270.0,174.4 L270.0,172.7 L293.7,166.1 L317.4,160.1 L341.2,151.8 L364.9,147.1 L383.9,142.3 L405.2,132.9 L421.8,134.0 L436.1,131.7 L459.8,132.9 L483.5,137.6 L516.7,136.4 L526.2,142.3 L540.0,151.8 L540.0,153.0 L554.2,157.8 L570.8,156.6 L582.7,160.1 L599.3,156.6 L615.9,149.5 L621.9,147.1 L639.6,149.9 L658.6,143.5 L672.9,135.2 L691.8,125.7 L713.2,112.7 L741.7,96.1 L763.0,85.4 L786.7,75.9 L806.0,71.2 M473.6,6.6 L472.8,21.4 L466.9,42.7 L455.1,54.6 L436.1,59.3 L429.0,73.5 L421.8,91.3 L412.3,106.8 L408.8,116.3 L410.0,123.4 L405.2,132.9 L401.7,147.1 L400.5,166.1 L396.9,180.3 L395.7,191.9 L396.9,192.0 L399.3,215.7 L398.1,238.3 L393.4,253.7 L396.2,275.0 L395.3,298.8 L399.3,322.5 L400.5,343.8 L403.5,360.0 L401.5,367.0 L402.1,372.9 L405.0,381.1 L403.5,386.9 L404.2,395.1 L408.0,403.9 L409.7,412.7 L415.0,423.2 L419.7,430.2 L423.8,441.9 L427.9,455.0 L431.3,459.9 L439.6,471.8 L433.7,486.0 L424.2,507.4 L412.3,526.3 L400.5,545.3 L383.9,561.9 L367.3,575.9 L366.1,576.0 L353.0,585.5 L338.8,593.8 L322.2,599.7 L310.3,606.8 L305.6,618.7 L305.6,627.0 M405.2,132.9 L412.3,144.7 L426.6,157.8 L436.1,169.6 L445.6,185.1 L455.1,191.9 L455.1,192.0 L466.9,206.2 L478.8,222.8 L490.6,233.5 L504.9,239.4 M366.1,132.9 L368.5,147.1 L376.8,159.0 L388.6,164.9 L402.9,164.9 L417.1,162.5 L429.0,156.6 L434.9,140.0 L437.3,123.4 L433.7,110.3 L421.8,103.2 L407.6,99.6 L393.4,99.6 L381.5,106.8 L372.0,118.6 L366.1,132.9 M588.6,6.6 L586.3,19.0 L591.0,33.2 L602.9,42.7 L604.5,59.3 L599.3,75.9 L604.1,94.9 L591.0,110.3 L596.9,125.7 L608.8,137.6 L615.9,149.5 M599.3,156.6 L593.4,159.0 L585.1,170.8 L575.6,182.7 L568.5,191.9 L568.5,192.0 L566.1,194.4 L559.0,203.9 L549.5,215.7 L540.0,225.2 L540.0,225.2 L526.2,231.1 L514.4,235.9 L504.9,239.4 L497.8,251.3 L490.6,270.3 L478.8,291.6 L466.9,310.6 L457.4,327.2 L440.8,336.7 L424.2,351.0 L416.2,360.0 L413.2,367.0 L410.3,374.0 L405.0,381.1 M658.6,143.5 L668.1,151.8 L672.9,163.7 L682.3,170.8 L687.1,183.9 L696.6,188.6 L715.6,189.8 L729.8,185.1 L753.5,181.5 L777.2,175.6 L796.2,173.2 L806.0,175.6 M5.9,256.5 L35.6,255.6 L64.1,250.1 L94.9,240.6 L113.9,234.7 L137.6,225.2 L151.8,222.8 L161.3,225.2 M161.3,225.2 L164.9,221.7 L172.0,221.7 L175.6,226.4 L174.4,230.4 L166.1,231.1 L161.3,230.0 L161.3,225.2 M175.6,225.2 L189.8,215.7 L206.4,206.2 L218.3,197.9 L221.8,192.0 M163.7,231.1 L167.3,246.6 L168.9,267.9 L172.7,286.9 L171.3,310.6 L175.6,329.6 L179.1,353.3 L183.9,367.6 L183.9,383.9 L182.7,384.0 L180.3,393.5 L170.8,412.5 L163.7,426.7 L161.3,440.9 L156.6,459.9 L154.2,469.4 L147.1,478.9 L154.2,480.1 L144.7,490.8 L137.6,507.4 L132.9,526.3 L130.5,545.3 L130.0,575.9 L130.5,576.0 L128.1,595.0 L125.7,614.0 L128.1,630.6 L132.9,647.2 L135.2,656.7 L132.9,670.9 L132.9,674.5 M5.9,460.4 L23.7,462.8 L47.4,465.1 L66.4,467.5 L85.4,474.2 L94.9,476.5 L104.4,473.7 L123.4,473.7 L140.0,474.6 L147.1,478.9 L154.2,481.3 L177.9,479.4 L201.7,476.5 L225.4,475.3 L249.1,474.2 L270.0,471.3 L270.0,469.4 L284.2,464.7 L293.7,455.2 L305.6,440.9 L319.8,426.7 L334.1,412.5 L343.5,403.0 L360.2,400.6 L367.0,399.8 L374.0,397.4 L384.0,389.8 L388.1,385.5 L393.9,386.3 L399.8,384.0 L405.0,381.1 M401.0,368.2 L397.4,370.5 L393.9,372.9 L391.0,378.7 L388.1,385.5 M147.1,478.9 L148.3,473.0 L154.2,469.4 L155.4,475.3 L151.8,481.3 M258.6,474.2 L251.5,486.0 L246.7,500.3 L237.2,516.9 L234.9,526.3 L227.8,535.8 L218.3,547.7 L214.7,561.9 L214.7,575.9 L214.7,576.0 L211.2,590.2 L204.0,604.5 L199.3,618.7 L192.2,632.9 L188.6,644.8 L189.8,656.7 M411.5,371.7 L415.0,368.8 L420.8,367.0 L430.2,364.7 L441.9,362.6 L455.0,362.1 L459.8,364.0 L483.5,361.6 L507.2,356.9 L526.2,353.3 L540.0,352.1 L540.0,352.1 L563.7,348.6 L583.9,349.8 L583.9,353.3 L606.4,355.7 L634.9,362.8 L663.4,367.6 L691.8,371.1 L720.3,373.5 L748.8,373.5 L760.6,368.7 L777.2,360.4 L791.5,351.0 L806.0,339.1 M514.4,235.9 L521.5,239.4 L531.0,245.4 L540.0,256.1 L540.0,270.3 L542.4,275.0 L549.5,291.6 L556.6,310.6 L568.5,324.9 L575.6,336.7 L583.9,349.8 M568.5,324.9 L573.2,310.6 L578.0,298.8 L583.9,294.0 M583.9,349.8 L593.4,335.5 L608.8,323.7 L630.2,315.4 L651.5,301.1 L672.9,289.3 L687.1,282.2 L706.1,275.0 L725.1,263.2 L741.7,251.3 L758.3,240.6 L777.2,232.3 L806.0,222.4 M575.6,334.3 L585.1,332.0 L594.6,336.7 L595.8,351.0 L593.4,361.6 L583.9,364.0 L575.6,360.4 L574.4,346.2 L575.6,334.3 M583.9,353.3 L589.8,365.2 L596.9,377.1 L599.3,383.9 L602.9,384.0 L606.4,395.9 L613.5,407.7 L623.0,417.2 L627.8,422.0 L631.3,431.4 L632.1,440.9 L629.7,462.3 L630.2,483.6 L629.7,500.3 L632.5,516.9 L639.6,531.1 L646.8,545.3 L649.1,561.9 L651.5,575.9 L652.7,576.0 L656.3,590.2 L661.0,604.5 L668.1,618.7 L677.6,630.6 L687.1,640.1 L696.6,649.5 L703.7,659.0 L710.8,668.5 L716.7,680.4 L720.3,694.6 L727.4,708.9 L736.9,723.1 L744.0,737.3 L747.6,751.6 L748.3,767.9 L748.8,763.1 L752.2,774.4 L754.4,783.5 L755.0,792.5 M580.3,358.1 L568.5,367.6 L559.0,379.4 L556.6,383.9 L555.4,384.0 L550.7,395.9 L544.7,407.7 L540.0,411.3 L540.0,411.3 L533.3,417.2 L526.2,426.7 L519.1,436.2 L509.6,448.1 L495.4,457.5 L478.8,464.7 L462.2,471.8 L450.3,473.7 L439.6,471.8 M717.9,192.0 L725.1,203.9 L734.5,214.5 L744.0,218.1 L753.5,227.6 L760.6,241.8 L765.4,260.8 L770.1,279.8 M739.3,254.9 L741.7,263.2 L753.5,270.3 L770.1,281.0 L784.4,291.6 L801.0,303.5 L806.0,308.3 M627.8,422.0 L634.9,424.3 L639.6,430.3 L634.9,435.0 L631.3,431.4 M639.6,430.3 L646.8,440.9 L658.6,449.2 L672.9,456.4 L687.1,461.1 L706.1,465.9 L729.8,468.2 L758.3,473.0 L777.2,480.1 L798.6,486.5 L806.0,494.3 M806.0,535.8 L802.9,545.3 L802.2,554.8 L802.9,564.3 L801.0,575.9 L801.7,560.0 L799.5,567.4 L795.1,576.3 L789.2,586.6 L785.5,595.5 L784.7,607.3 L785.5,619.2 L787.7,629.5 L788.4,639.9 L786.2,648.8 L786.2,654.7 L792.1,660.6 L795.1,669.5 L798.0,680.1 L798.6,675.6 L803.3,687.5 L806.0,694.6 M778.8,648.8 L781.8,644.3 L787.0,642.8 M778.8,648.8 L777.3,656.2 L778.8,663.6 L784.7,666.5 L792.1,669.5 M5.9,660.9 L23.7,656.7 L47.4,647.2 L66.4,643.6 L80.7,644.8 L90.2,654.3 L99.6,666.2 L113.9,672.1 L132.9,674.5 L147.1,680.4 L159.0,685.1 L166.1,678.0 L175.6,668.5 L182.7,656.7 L187.4,647.2 M80.7,644.8 L99.6,641.2 L123.4,640.1 L147.1,640.5 L166.1,647.2 L180.3,654.3 L189.8,656.7 L204.0,655.5 L213.5,651.9 L227.8,647.2 L244.4,643.6 L258.6,643.6 L270.0,647.2 L270.0,644.8 L284.2,640.1 L296.1,634.1 L305.6,627.0 L312.7,622.3 L324.6,624.6 L341.2,627.0 L355.4,632.9 L364.9,637.7 L374.4,638.9 L383.9,636.5 L393.4,628.2 L405.2,621.1 L421.8,618.7 L443.2,616.8 L455.1,621.1 L466.9,618.7 L478.8,615.1 L497.8,617.5 L516.7,615.9 L531.0,621.1 L540.0,627.0 L540.0,625.8 L554.2,630.6 L568.5,636.5 L587.4,640.1 L611.2,640.1 L634.9,643.6 L658.6,647.2 L672.9,651.9 L687.1,653.1 L701.3,657.9 L715.6,661.4 L739.3,661.4 L758.3,657.9 L777.2,655.5 L786.7,654.3 M5.9,616.3 L11.9,625.8 L13.0,637.7 L11.9,649.5 L15.4,660.9" fill="none" stroke="#7f6b12" stroke-width="1" stroke-linejoin="round" shape-rendering="crispEdges"/>
<path d="M5.9,104.6 L155.4,105.1 L156.6,111.5 L161.3,115.1 L160.1,123.4 L155.4,130.0 L149.5,136.4 L143.5,143.5 L137.6,149.5 L187.4,149.5 M200.3,7.1 L201.8,8.6 L203.8,9.8 L204.8,11.3 L203.9,13.4 L203.9,15.1 L206.5,15.6 L206.9,17.1 L205.7,19.4 L206.4,20.3 L208.5,21.9 L208.1,23.7 L207.3,25.6 L208.2,27.2 L208.2,29.8 L205.8,29.1 L203.5,28.7 L202.8,30.3 L203.0,31.9 L202.4,34.0 L201.7,36.1 L203.5,37.4 L204.6,38.5 L204.5,40.5 L204.2,42.7 L206.8,42.6 L209.5,43.3 L207.9,45.4 L206.7,47.3 L209.8,47.9 L210.3,49.3 L209.2,51.7 L210.3,52.7 L212.6,52.8 L214.2,53.4 L214.1,55.5 L213.8,58.1 L216.4,58.0 L218.3,58.7 L220.0,61.1 L221.3,59.9 L220.5,56.8 L222.5,56.5 L224.3,56.0 L225.9,55.4 L225.9,53.4 L228.1,53.9 L229.0,55.3 L227.6,58.2 L228.8,59.4 L231.5,59.6 L232.0,61.6 L230.1,63.6 L231.9,65.2 L233.0,66.9 L231.5,68.5 L230.5,69.9 L230.6,72.1 L230.5,74.1 L228.4,74.7 L227.4,76.6 L228.9,77.8 L231.3,78.7 L230.8,80.9 L228.5,81.7 L227.9,83.1 L228.7,84.9 L229.3,86.7 L228.4,88.2 L226.1,88.8 L225.6,90.5 L226.5,93.0 L224.9,93.9 L222.9,95.1 L222.3,96.6 L222.9,99.1 L221.2,99.2 L220.1,96.8 L218.5,97.1 L215.9,96.8 L216.1,94.3 L214.0,92.4 L213.5,94.4 L213.6,96.9 L211.0,97.2 L209.3,98.5 L211.1,100.8 L210.8,102.6 L208.5,103.7 L208.5,104.7 L207.0,107.3 L204.3,106.8 L205.4,105.1 L205.4,103.6 L202.8,102.5 L203.0,101.3 L203.7,98.6 L202.1,97.9 L201.0,98.0 L199.4,99.0 L196.7,99.9 L197.6,101.4 L200.2,102.2 L198.8,104.6 L198.7,106.3 L200.3,107.4 L202.0,108.5 L202.4,110.6 L199.7,111.3 L199.7,113.0 L200.5,115.0 L200.0,117.8 L197.6,116.9 L195.3,116.2 L194.1,118.8 L196.8,119.4 L195.5,121.7 L194.6,123.7 L196.8,124.3 L195.9,126.5 L194.1,126.8 L191.9,126.2 L190.2,127.0 L189.0,127.8 L189.9,129.6 L189.9,132.1 L191.7,133.4 L194.4,133.1 L195.4,134.8 L196.1,135.8 L194.3,136.0 L193.9,138.4 L192.9,139.9 L191.9,140.3 L189.3,141.0 L189.4,142.8 L190.2,144.8 L189.2,146.1 L186.5,147.2 L186.9,149.6 L189.2,150.7 L189.4,152.3 L188.0,155.1 L190.4,155.4 L192.9,157.6 L190.1,157.1 L188.0,157.6 L188.1,160.8 L187.1,162.2 L184.2,161.6 L183.3,164.9 L185.4,164.6 L187.4,164.5 L188.7,166.3 L186.6,166.1 L185.2,167.2 L184.7,169.7 L183.0,171.1 L181.0,168.7 L179.6,169.8 L178.5,171.8 L176.9,171.1 L174.5,169.6 L173.4,171.1 L172.7,173.6 L171.8,173.4 L170.7,174.8 L168.8,176.0 L169.5,178.3 L171.5,177.5 L173.1,177.9 L173.7,180.6 L175.5,180.3 L175.6,182.9 L172.7,183.0 L171.1,183.7 L170.7,186.4 L169.4,187.7 L166.3,186.5 L165.4,188.0 L165.3,190.2 L165.2,191.0 L164.2,192.3 L161.2,192.7 L161.4,194.8 L162.1,198.0 L160.2,198.2 L158.1,198.1 L156.3,198.5 L155.6,200.2 L157.8,201.1 L157.8,203.1 L158.4,206.3 L159.7,205.0 L160.3,202.1 L162.9,202.8 L160.7,203.7 L161.7,205.8 L161.8,207.5 L160.3,208.8 L157.4,208.2 L157.5,211.7 L156.3,211.8 L156.0,213.7 L154.8,215.8 L156.9,216.7 L158.9,217.7 L158.7,219.5 L158.0,221.5 L158.4,223.0 L160.4,224.5 L159.3,225.9 L157.5,226.3 L155.1,225.8 L153.9,227.3 L153.7,229.4 L152.6,230.7 L150.2,230.6 L149.0,231.9 L148.8,234.6 L146.6,234.0 L144.4,233.6 L144.0,235.8 L145.8,237.1 L144.1,240.0 L145.3,241.2 L147.5,241.4 L149.6,243.5 L147.2,244.3 L145.8,245.5 L146.5,247.5 L146.3,249.8 L144.3,249.2 L142.3,248.5 L141.5,250.8 L139.6,252.6 L138.3,251.1 L137.1,249.4 L135.3,250.0 L132.9,249.8 L131.3,247.6 L130.4,249.1 L130.9,251.3 L129.9,252.3 L129.1,254.3 L129.1,256.0 L131.6,256.7 L132.4,259.3 L130.3,259.9 L127.5,259.4 L126.8,261.8 L126.9,264.3 L124.7,264.5 L122.5,266.0 L124.1,267.2 L126.3,268.0 L125.5,270.0 L127.7,269.7 L127.8,267.0 L130.3,267.0 L127.7,267.2 L127.8,269.6 L127.6,271.7 L124.8,271.8 L123.2,273.6 L124.1,275.3 L125.4,277.1 L124.1,278.4 L122.2,279.9 L122.1,281.7 L124.3,283.3 L125.3,285.0 L123.0,286.4 L123.2,288.6 L123.0,290.7 L121.2,292.1 L118.7,290.9 L117.2,292.0 L116.6,294.8 L114.7,294.9 L112.4,294.3 L112.3,296.8 L111.3,298.3 L108.7,299.0 L109.7,301.9 L108.0,303.0 L106.0,303.5 L103.2,304.1 L103.4,306.2 L104.2,308.6 L101.7,310.0 L101.0,307.5 L99.3,307.0 L98.4,306.8 L98.7,308.3 L97.3,310.1 L97.1,311.7 L98.5,312.9 L100.3,312.4 L101.7,313.3 L102.5,313.8 L101.5,315.2 L101.2,317.0 L101.1,319.0 L100.1,320.7 L97.5,320.6 L96.5,322.5 L96.4,324.0 L95.5,325.3 L94.2,326.6 L92.8,327.9 L93.8,329.2 L91.9,330.2 L90.5,329.1 L88.2,327.6 L87.7,329.5 L87.7,331.9 L85.4,331.9 L86.1,334.5 L88.4,333.2 L90.1,333.1 L92.0,334.7 L90.7,336.0 L88.9,337.1 L90.1,339.6 L88.4,340.8 L86.7,341.9 L86.9,343.4 L88.4,344.8 L88.7,347.6 L90.9,346.5 L90.1,348.8 L88.4,349.5 L87.4,348.3 L84.9,349.3 L83.0,349.0 L81.4,347.5 L81.0,349.1 L82.5,350.3 L84.3,351.5 L82.8,353.8 L84.2,354.9 L86.4,354.4 L88.4,357.0 L85.9,355.8 L83.9,355.9 L82.4,359.2 L81.3,357.6 L81.0,354.8 L78.7,355.2 L78.0,355.0 L76.4,356.1 L74.7,357.3 L74.4,359.7 L76.8,359.9 L78.6,360.7 L79.0,362.6 L77.1,363.6 L78.0,365.7 L79.2,367.9 L77.5,369.0 L75.4,369.9 L75.1,371.7 L75.1,372.7 L76.9,373.0 L77.5,375.8 L79.8,377.2 L81.3,376.5 L82.3,373.7 L84.6,374.5 L83.7,376.9 L85.4,378.0 L87.7,380.5 L85.2,380.5 L83.3,380.8 L83.2,383.2 L83.2,383.8 L82.7,385.7 L81.1,387.8 L83.1,389.3 L83.6,390.0 L84.3,392.5 L85.8,393.4 L87.8,393.5 L87.7,395.8 L84.3,394.7 L83.7,396.7 L84.1,399.4 L80.8,399.4 L80.7,401.8 L80.3,404.0 L76.7,403.8 L76.9,406.7 L79.0,407.6 L79.3,409.8 L79.1,411.7 L80.1,413.1 L82.2,414.3 L82.7,417.2 L79.6,416.4 L78.2,417.7 L77.6,419.7 L78.4,421.6 L75.9,422.6 L76.5,425.8 L77.3,423.4 L78.4,421.9 L80.3,422.4 L80.3,423.1 L82.8,423.7 L85.5,424.2 L85.2,426.6 L84.0,427.8 L83.8,429.8 L83.6,431.7 L82.4,432.8 L80.2,433.7 L80.6,435.4 L81.2,437.2 L80.3,438.4 L78.5,440.5 L79.8,442.0 L82.2,442.6 L83.8,442.9 L84.6,445.3 L85.7,447.1 L87.0,447.1 L89.9,448.0 L89.0,449.9 L87.9,450.2 L87.7,453.2 L86.4,454.8 L84.1,455.2 L82.2,456.7 L84.8,458.9 L84.0,460.6 L83.6,463.7 L84.7,462.2 L85.8,460.5 L86.9,459.2 L88.1,460.4 L88.9,462.0 L91.7,462.3 L91.7,464.3 L91.5,466.8 L93.1,467.7 L96.3,466.8 L96.1,469.4 L96.2,471.7 L98.3,471.9 L101.6,473.4 L100.1,474.8 L97.9,475.9 L98.2,476.8 L97.1,479.0 L95.3,478.5 L92.1,478.1 L92.5,480.3 L93.9,482.9 L91.4,483.7 L89.3,483.6 L87.7,484.2 L86.8,486.5 L85.4,487.6 L83.3,487.3 L80.7,487.8 L81.7,490.3 L81.6,492.2 L79.4,493.4 L80.6,494.9 L82.8,494.5 L83.0,493.9 L85.6,494.1 L88.5,494.6 L88.5,492.1 L89.9,493.4 L90.4,495.0 L89.5,495.8 L88.5,497.8 L87.7,500.0 L84.9,499.9 L83.1,501.0 L83.5,503.8 L82.5,505.7 L80.7,506.3 L78.9,506.8 L78.2,508.5 L78.3,510.6 L76.0,511.4 L75.1,512.2 L74.6,514.8 L73.7,516.9 L70.4,515.8 L69.3,517.7 L68.9,520.4 L66.2,520.3 L64.0,521.2 L65.5,523.9 L64.3,524.6 L65.3,526.5 L66.7,527.1 L68.8,526.2 L70.3,527.9 L68.3,528.2 L66.5,528.8 L66.0,532.5 L64.4,530.0 L61.1,529.8 L62.2,531.6 L63.2,533.4 L62.0,534.9 L60.1,536.4 L61.2,538.4 L59.4,539.7 L57.6,537.4 L55.0,537.7 L55.6,540.7 L53.7,540.3 L54.9,541.9 L56.1,543.7 L57.6,543.6 L60.2,544.1 L58.6,544.5 L56.6,544.4 L54.8,544.6 L54.5,546.6 L55.2,547.3 L54.4,549.0 L52.9,550.9 L52.5,552.5 L55.1,554.4 L53.6,555.7 L50.8,555.3 L49.5,557.0 L49.4,559.5 L47.4,560.9 L49.4,561.6 L51.4,560.6 L54.1,560.4 L54.4,562.2 L53.4,564.7 L56.4,566.4 L54.3,566.9 L52.0,567.1 L51.4,569.9 L50.0,571.1 L47.6,570.2 L45.4,571.0 L45.7,573.1 L45.4,574.8 L44.9,575.9 L44.1,575.9 L43.5,578.0 L44.8,579.1 L46.7,579.9 L47.0,581.6 L46.6,583.4 L46.5,585.0 L48.5,585.9 L50.1,587.0 L49.2,588.8 L49.0,589.3 L48.2,590.7 L48.0,592.9 L47.3,594.5 L45.1,594.3 M208.8,104.6 L270.0,104.6 L270.0,104.6 L311.5,104.6 L312.2,94.9 L309.1,89.0 L324.6,91.3 L364.9,90.9 L421.8,90.9 L483.5,93.7 L540.0,94.4 L540.0,94.4 L573.2,96.1 L634.9,96.6 L706.1,96.1 L786.7,94.9 L806.0,97.7 M225.9,53.4 L231.3,46.3 L237.2,40.3 L244.4,39.1 L251.5,42.7 L261.0,46.3 L270.0,49.8 L270.0,51.0 L274.7,54.1 L280.7,52.2 L283.0,46.3 L278.3,39.1 L277.1,32.0 L281.9,24.9 L292.5,21.4 L303.2,19.0 L309.1,15.4 L308.0,9.5 L305.1,6.6 M634.9,96.6 L644.4,91.3 L658.6,86.6 L676.4,83.0 L678.8,75.9 L694.2,70.0 L697.8,60.5 L706.1,55.8 L708.4,48.6 L720.3,42.7 L741.7,33.2 L753.5,21.4 L763.0,14.2 M748.8,6.6 L753.5,10.7 L763.0,11.9 L765.4,15.4 L763.0,20.2 L767.8,26.1 L773.7,32.0 L779.6,38.0 L786.7,42.2 L797.4,40.3 L806.0,35.6 M786.7,94.9 L783.2,102.0 L782.0,110.3 L779.6,116.3 L782.0,118.6 L773.7,118.6 L765.4,125.7 L761.8,134.0 L755.9,138.8 L748.8,136.4 L744.0,135.2 L736.9,137.6 L729.8,142.3 L725.1,150.7 L717.9,151.8 L715.6,147.1 L714.4,143.5 L709.6,145.9 L703.7,151.8 L699.0,155.4 L694.2,154.2 L691.8,161.3 L688.3,168.4 L682.3,167.3 L676.4,168.4 L669.3,175.6 L661.0,180.3 L651.5,186.2 L642.0,187.4 L630.2,188.6 L623.0,191.9 L623.0,192.0 L615.9,196.7 L611.2,202.7 L610.0,211.0 L605.2,215.3 L595.8,214.5 L591.0,218.1 L589.8,227.6 L588.6,239.4 M144.7,238.7 L270.0,238.7 L270.0,238.7 L299.7,237.6 L398.1,237.8 L471.7,238.7 L493.0,239.4 L540.0,239.4 L540.0,239.4 L588.6,239.4 L658.6,238.7 L678.8,238.3 M678.8,238.3 L691.8,233.5 L703.7,231.1 L710.8,227.6 L720.3,224.0 L729.8,221.7 L733.4,220.5 L741.7,220.5 L777.2,221.7 L806.0,222.8 M678.8,238.3 L676.4,244.2 L669.3,248.9 L663.4,254.9 L660.5,263.2 L665.7,269.1 L675.2,275.0 L682.3,282.2 L688.3,284.5 L694.2,284.1 L697.8,289.3 L701.3,296.4 L704.9,304.7 L706.1,310.6 L710.8,317.7 L716.7,327.2 L722.7,333.2 L729.8,337.9 L736.9,343.8 L742.8,351.0 L746.4,359.3 L753.5,364.0 L760.6,368.7 L766.6,375.9 L767.3,383.9 L765.4,384.0 L771.3,388.7 L774.9,394.7 L779.6,398.2 L778.4,403.0 L784.4,405.4 L790.3,408.9 L796.2,413.7 L798.1,419.6 L801.0,426.7 L803.8,433.8 L804.5,440.9 L806.0,444.5 M299.7,237.6 L303.2,243.0 L307.5,247.8 L305.6,270.3 L300.8,315.4 L296.1,358.1 L292.5,383.9 L292.5,384.0 L289.0,419.6 L285.4,455.2 L280.7,490.8 L279.5,514.5 L280.7,550.1 L283.0,575.9 L283.0,576.0 L284.2,611.6 L285.4,647.2 M493.0,239.4 L498.9,272.7 L504.9,305.9 L509.6,334.3 L514.4,362.8 L517.9,383.9 L517.9,384.0 L521.5,403.0 L525.0,424.3 L529.8,440.9 L533.3,452.8 L536.9,459.9 L540.0,468.2 L538.1,476.5 L540.0,483.6 L536.9,490.8 L533.3,495.5 L532.2,502.6 L529.8,507.4 L532.2,513.3 L531.0,520.4 L534.5,525.2 L533.3,529.9 L534.5,535.8 L533.3,538.2 L534.5,550.1 L532.2,564.3 L531.0,575.9 L529.8,576.0 L533.3,585.5 L538.1,594.3 L540.0,599.7 M5.9,415.3 L79.5,415.3 M45.1,594.3 L186.2,594.3 L183.9,602.1 L180.3,611.6 L177.9,621.1 L180.3,630.6 L183.9,637.7 L189.8,642.4 L191.0,649.5 L194.5,656.7 L196.9,665.0 M361.3,644.8 L357.8,643.6 L355.4,637.7 L359.7,630.6 L359.0,623.4 L351.9,618.7 L347.1,612.8 L341.2,605.7 L344.7,594.3 L538.1,594.3 M547.1,619.9 L634.9,624.6 L744.0,632.2 L745.2,642.4 L748.8,650.7 L757.1,651.4 L758.3,644.8 L759.5,635.3 L757.1,623.4 L759.5,614.0 L765.4,609.7 L772.5,611.6 L779.6,614.0 L786.7,617.5 L795.0,618.7" fill="none" stroke="#000" stroke-width="1" stroke-linejoin="round" shape-rendering="crispEdges"/>
<path d="M416.50,247.78 A159.5,159.5 0 1 1 395.00,247.95 M416.50,127.66 A279.5,279.5 0 1 1 395.00,127.76 M416.50,7.61 A399.5,399.5 0 1 1 395.00,7.68" fill="none" stroke="#d6d0cd" stroke-width="1" shape-rendering="crispEdges"/>
<circle cx="407" cy="407" r="39.5" fill="none" stroke="#ff0000" stroke-width="1" shape-rendering="crispEdges"/>
<path d="M393,369h1v1h-1zM385,374h1v1h-1zM380,378h1v1h-1zM377,381h1v1h-1zM374,385h1v1h-1zM369,393h1v1h-1zM367,401h1v1h-1zM428,374h1v1h-1zM432,376h1v1h-1zM437,381h1v1h-1zM444,393h1v1h-1zM446,401h1v1h-1z" fill="#f0e8e8" shape-rendering="crispEdges"/>
<text x="405.7" y="11" text-anchor="middle" font-family="DejaVu Sans Mono, Liberation Mono, monospace" font-size="9.6" letter-spacing="1.3" fill="#ffff80">313</text>
<text x="405.7" y="131" text-anchor="middle" font-family="DejaVu Sans Mono, Liberation Mono, monospace" font-size="9.6" letter-spacing="1.3" fill="#ffff80">219</text>
<text x="405.7" y="251" text-anchor="middle" font-family="DejaVu Sans Mono, Liberation Mono, monospace" font-size="9.6" letter-spacing="1.3" fill="#ffff80">125</text>
<text x="405.7" y="371" text-anchor="middle" font-family="DejaVu Sans Mono, Liberation Mono, monospace" font-size="9.6" letter-spacing="1.3" fill="#ffff80">31</text>
<path d="M345,568.5 h7 M348.5,565 v7" stroke="#ffff00" stroke-width="1" fill="none" shape-rendering="crispEdges"/>
<path d="M496,790.5 h7 M499.5,787 v7" stroke="#e06010" stroke-width="1" fill="none" shape-rendering="crispEdges"/>
</svg>
<div class="panel" style="left:812px;top:8px;width:320px;height:320px;"></div>
<div class="panel" style="left:812px;top:333px;width:320px;height:115px;"></div>
<div class="panel" style="left:812px;top:453px;width:320px;height:350px;"></div>
<div class="box" style="left:819px;top:16px;width:58px;height:18px;background:#5a0000;border:1px solid #b0b0b0;"></div>
<div class="box" style="left:883px;top:16px;width:58px;height:18px;background:#303030;border:1px solid #b0b0b0;"></div>
<div class="box" style="left:994px;top:16px;width:128px;height:18px;background:#343434;border:1px solid #b0b0b0;"></div>
<div class="box" style="left:821px;top:64px;width:82px;height:16px;background:#505050;border:1px solid #a8a8a8;"></div>
<div class="box" style="left:931px;top:64px;width:82px;height:16px;background:#505050;border:1px solid #a8a8a8;"></div>
<div class="box" style="left:1041px;top:64px;width:82px;height:16px;background:#505050;border:1px solid #a8a8a8;"></div>
<div class="box" style="left:821px;top:217px;width:303px;height:1px;background:#a0a0a0;"></div>
<div class="box" style="left:821px;top:358px;width:302px;height:1px;background:#a0a0a0;"></div>
<div class="box bar" style="left:925px;top:227px;width:51px;height:11px;border:1px solid #a0a0a0;border-radius:2px;"><div style="width:8px;height:9px;background:#ff0000"></div></div>
<div class="box bar" style="left:1028px;top:227px;width:51px;height:11px;border:1px solid #a0a0a0;border-radius:2px;"><div style="width:17px;height:9px;background:#99ccff"></div></div>
<div class="box bar" style="left:925px;top:281px;width:51px;height:11px;border:1px solid #a0a0a0;border-radius:2px;"><div style="width:11px;height:9px;background:#ee66aa"></div></div>
<div class="box bar" style="left:1028px;top:281px;width:51px;height:11px;border:1px solid #a0a0a0;border-radius:2px;"><div style="width:12px;height:9px;background:#00ff00"></div></div>
<div class="box" style="left:8px;top:758px;width:245px;height:46px;background:#000;"></div>
<div class="box" style="left:9px;top:759px;width:243px;height:44px;border:1px solid #a8a8a8;"></div>
<div class="box" style="left:685px;top:792px;width:121px;height:14px;background:#000;"></div>
<svg style="position:absolute;left:8px;top:757px" width="245" height="47" viewBox="8 757 245 47">
<g fill="none" stroke="#00e0e0" stroke-width="1">
<circle cx="60.5" cy="780.5" r="4"/><path d="M58,780.5 h5"/>
<path d="M82,780.5 h7"/>
<circle cx="110.5" cy="780.5" r="4"/><path d="M108,780.5 h5 M110.5,778 v5"/>
<path d="M132,780.5 h7 M135.5,777 v7"/>
</g>
<g fill="none" stroke="#ffff00" stroke-width="1">
<circle cx="60.5" cy="793.5" r="4"/><path d="M58,793.5 h5"/>
<path d="M82,793.5 h7"/>
<circle cx="110.5" cy="793.5" r="4"/><path d="M108,793.5 h5 M110.5,791 v5"/>
<path d="M132,793.5 h7 M135.5,790 v7"/>
</g>
</svg>

<span class="t" style='left:824.50px;top:19.00px;font:bold 12px "DejaVu Sans", "Liberation Sans", sans-serif;color:#e0d0d0;letter-spacing:-0.005px;'>STRIKE</span><span class="t" style='left:890.85px;top:19.00px;font:bold 12px "DejaVu Sans", "Liberation Sans", sans-serif;color:#b8b8b8;letter-spacing:0.347px;'>NOISE</span><span class="t" style='left:998.00px;top:19.00px;font:bold 12px "DejaVu Sans", "Liberation Sans", sans-serif;color:#ffffff;letter-spacing:0.061px;'>Bng 160°</span><span class="t" style='left:1075.00px;top:19.00px;font:bold 12px "DejaVu Sans", "Liberation Sans", sans-serif;color:#00f000;letter-spacing:0.266px;'>351mi</span><span class="t" style='left:829.00px;top:65.00px;font:normal 12px "DejaVu Sans", "Liberation Sans", sans-serif;color:#ffffff;letter-spacing:-0.129px;'>Strikes/min</span><span class="t" style='left:943.00px;top:65.00px;font:normal 12px "DejaVu Sans", "Liberation Sans", sans-serif;color:#ffffff;letter-spacing:-0.153px;'>Close/min</span><span class="t" style='left:1051.00px;top:65.00px;font:normal 12px "DejaVu Sans", "Liberation Sans", sans-serif;color:#ffffff;letter-spacing:-0.422px;'>Noises/min</span><span class="t" style='left:883.31px;top:85.00px;font:bold 29px "DejaVu Sans", "Liberation Sans", sans-serif;color:#ffffff;'>0</span><span class="t" style='left:993.31px;top:85.00px;font:bold 29px "DejaVu Sans", "Liberation Sans", sans-serif;color:#ffffff;'>0</span><span class="t" style='left:1103.31px;top:85.00px;font:bold 29px "DejaVu Sans", "Liberation Sans", sans-serif;color:#c0c0c0;'>0</span><span class="t" style='left:827.00px;top:132.00px;font:normal 12px "DejaVu Sans", "Liberation Sans", sans-serif;color:#ffffff;letter-spacing:0.262px;'>Total Strikes</span><span class="t" style='left:945.00px;top:132.00px;font:normal 12px "DejaVu Sans", "Liberation Sans", sans-serif;color:#ffffff;letter-spacing:0.315px;'>Total Close</span><span class="t" style='left:1048.00px;top:132.00px;font:normal 12px "DejaVu Sans", "Liberation Sans", sans-serif;color:#c8c8c8;letter-spacing:0.301px;'>Total Noises</span><span class="t" style='left:880.09px;top:150.00px;font:normal 12px "DejaVu Sans", "Liberation Sans", sans-serif;color:#ffffff;'>263</span><span class="t" style='left:1005.36px;top:150.00px;font:normal 12px "DejaVu Sans", "Liberation Sans", sans-serif;color:#ffffff;'>0</span><span class="t" style='left:1107.72px;top:150.00px;font:normal 12px "DejaVu Sans", "Liberation Sans", sans-serif;color:#ffffff;'>54</span><span class="t" style='left:821.00px;top:204.00px;font:normal 12px "DejaVu Sans", "Liberation Sans", sans-serif;color:#d0d0d0;letter-spacing:0.225px;'>Lightning type distribution</span><span class="t" style='left:821.00px;top:226.00px;font:bold 12px "DejaVu Sans Condensed", "DejaVu Sans", "Liberation Sans", sans-serif;color:#ffffff;letter-spacing:0.124px;'>Cloud-ground</span><span class="t" style='left:912.00px;top:226.00px;font:normal 12px "DejaVu Sans", "Liberation Sans", sans-serif;color:#ffffff;'>+</span><span class="t" style='left:980.00px;top:226.00px;font:bold 12px "DejaVu Sans Condensed", "DejaVu Sans", "Liberation Sans", sans-serif;color:#ffffff;letter-spacing:0.719px;'>17%</span><span class="t" style='left:1015.00px;top:226.00px;font:bold 12px "DejaVu Sans", "Liberation Sans", sans-serif;color:#ffffff;'>−</span><span class="t" style='left:1082.00px;top:226.00px;font:bold 12px "DejaVu Sans Condensed", "DejaVu Sans", "Liberation Sans", sans-serif;color:#ffffff;letter-spacing:1.552px;'>35%</span><span class="t" style='left:821.00px;top:250.00px;font:normal 12px "DejaVu Sans", "Liberation Sans", sans-serif;color:#d0d0d0;letter-spacing:0.472px;'>Count</span><span class="t" style='left:925.00px;top:250.00px;font:bold 12px "DejaVu Sans Condensed", "DejaVu Sans", "Liberation Sans", sans-serif;color:#ffffff;letter-spacing:0.484px;'>45</span><span class="t" style='left:1028.00px;top:250.00px;font:bold 12px "DejaVu Sans Condensed", "DejaVu Sans", "Liberation Sans", sans-serif;color:#ffffff;letter-spacing:0.484px;'>93</span><span class="t" style='left:821.00px;top:280.00px;font:bold 12px "DejaVu Sans Condensed", "DejaVu Sans", "Liberation Sans", sans-serif;color:#ffffff;letter-spacing:0.159px;'>Intracloud</span><span class="t" style='left:912.00px;top:280.00px;font:normal 12px "DejaVu Sans", "Liberation Sans", sans-serif;color:#ffffff;'>+</span><span class="t" style='left:980.00px;top:280.00px;font:bold 12px "DejaVu Sans Condensed", "DejaVu Sans", "Liberation Sans", sans-serif;color:#ffffff;letter-spacing:0.719px;'>22%</span><span class="t" style='left:1015.00px;top:280.00px;font:bold 12px "DejaVu Sans", "Liberation Sans", sans-serif;color:#ffffff;'>−</span><span class="t" style='left:1082.00px;top:280.00px;font:bold 12px "DejaVu Sans Condensed", "DejaVu Sans", "Liberation Sans", sans-serif;color:#ffffff;letter-spacing:1.552px;'>25%</span><span class="t" style='left:821.00px;top:304.00px;font:normal 12px "DejaVu Sans", "Liberation Sans", sans-serif;color:#d0d0d0;letter-spacing:0.472px;'>Count</span><span class="t" style='left:925.00px;top:304.00px;font:bold 12px "DejaVu Sans Condensed", "DejaVu Sans", "Liberation Sans", sans-serif;color:#ffffff;letter-spacing:0.484px;'>58</span><span class="t" style='left:1028.00px;top:304.00px;font:bold 12px "DejaVu Sans Condensed", "DejaVu Sans", "Liberation Sans", sans-serif;color:#ffffff;letter-spacing:0.484px;'>67</span><span class="t" style='left:821.00px;top:337.00px;font:bold 17px "DejaVu Sans", "Liberation Sans", sans-serif;color:#00f400;letter-spacing:-0.369px;'>2/1/2026 10:24:56 AM</span><span class="t" style='left:821.40px;top:377.00px;font:normal 12px "DejaVu Sans", "Liberation Sans", sans-serif;color:#ffffff;letter-spacing:0.091px;'>Squelch</span><span class="t" style='left:909.30px;top:377.00px;font:normal 12px "DejaVu Sans", "Liberation Sans", sans-serif;color:#ffffff;'>0</span><span class="t" style='left:981.20px;top:377.00px;font:normal 12px "DejaVu Sans", "Liberation Sans", sans-serif;color:#ffffff;letter-spacing:0.276px;'>Upload</span><span class="t" style='left:1060.80px;top:377.00px;font:normal 12px "DejaVu Sans", "Liberation Sans", sans-serif;color:#c8c8c8;letter-spacing:0.232px;'>Disabled</span><span class="t" style='left:821.40px;top:397.00px;font:normal 12px "DejaVu Sans", "Liberation Sans", sans-serif;color:#ffffff;letter-spacing:0.324px;'>Persistence</span><span class="t" style='left:909.30px;top:397.00px;font:normal 12px "DejaVu Sans", "Liberation Sans", sans-serif;color:#ffffff;letter-spacing:-0.070px;'>90 min</span><span class="t" style='left:981.20px;top:397.00px;font:normal 12px "DejaVu Sans", "Liberation Sans", sans-serif;color:#ffffff;letter-spacing:0.397px;'>Capture</span><span class="t" style='left:1060.80px;top:397.00px;font:normal 12px "DejaVu Sans", "Liberation Sans", sans-serif;color:#00f000;letter-spacing:-0.054px;'>Active</span><span class="t" style='left:821.40px;top:417.00px;font:normal 12px "DejaVu Sans", "Liberation Sans", sans-serif;color:#ffffff;letter-spacing:0.291px;'>Range</span><span class="t" style='left:909.30px;top:417.00px;font:normal 12px "DejaVu Sans", "Liberation Sans", sans-serif;color:#ffffff;letter-spacing:-0.075px;'>313 mi</span><span class="t" style='left:981.20px;top:417.00px;font:normal 12px "DejaVu Sans", "Liberation Sans", sans-serif;color:#ffffff;letter-spacing:0.085px;'>Receiver</span><span class="t" style='left:1060.80px;top:417.00px;font:normal 12px "DejaVu Sans", "Liberation Sans", sans-serif;color:#00f000;letter-spacing:0.357px;'>Enabled</span><span class="t" style='left:821.40px;top:464.00px;font:normal 12px "DejaVu Sans", "Liberation Sans", sans-serif;color:#c8c8c8;letter-spacing:-0.086px;'>Uptime</span><span class="t" style='left:909.30px;top:464.00px;font:normal 12px "DejaVu Sans", "Liberation Sans", sans-serif;color:#ffffff;letter-spacing:0.347px;'>478:10</span><span class="t" style='left:981.20px;top:464.00px;font:normal 12px "DejaVu Sans", "Liberation Sans", sans-serif;color:#c8c8c8;letter-spacing:0.231px;'>Peak time</span><span class="t" style='left:1060.80px;top:464.00px;font:normal 12px "DejaVu Sans", "Liberation Sans", sans-serif;color:#c8c8c8;letter-spacing:0.444px;'>Plot</span><span class="t" style='left:821.40px;top:487.00px;font:normal 12px "DejaVu Sans", "Liberation Sans", sans-serif;color:#c8c8c8;letter-spacing:0.401px;'>Peak rate</span><span class="t" style='left:909.30px;top:487.00px;font:normal 12px "DejaVu Sans", "Liberation Sans", sans-serif;color:#ffffff;letter-spacing:-0.022px;'>6/min</span><span class="t" style='left:981.70px;top:487.00px;font:normal 12px "DejaVu Sans", "Liberation Sans", sans-serif;color:#ffffff;letter-spacing:0.079px;'>12:27 AM</span><span class="t" style='left:1060.80px;top:487.00px;font:normal 12px "DejaVu Sans", "Liberation Sans", sans-serif;color:#ffffff;letter-spacing:0.183px;'>Strike</span><span class="t" style='left:13.00px;top:762.00px;font:normal 10px "DejaVu Sans Condensed", "DejaVu Sans", "Liberation Sans", sans-serif;color:#d8dce8;letter-spacing:-0.315px;'>Symbols</span><span class="t" style='left:52.00px;top:762.00px;font:normal 10px "DejaVu Sans Condensed", "DejaVu Sans", "Liberation Sans", sans-serif;color:#d8dce8;letter-spacing:0.495px;'>-CG</span><span class="t" style='left:78.00px;top:762.00px;font:normal 10px "DejaVu Sans Condensed", "DejaVu Sans", "Liberation Sans", sans-serif;color:#d8dce8;letter-spacing:0.604px;'>-IC</span><span class="t" style='left:99.00px;top:762.00px;font:normal 10px "DejaVu Sans Condensed", "DejaVu Sans", "Liberation Sans", sans-serif;color:#d8dce8;letter-spacing:0.068px;'>+CG</span><span class="t" style='left:123.00px;top:762.00px;font:normal 10px "DejaVu Sans Condensed", "DejaVu Sans", "Liberation Sans", sans-serif;color:#d8dce8;letter-spacing:0.505px;'>+IC</span><span class="t" style='left:153.00px;top:762.00px;font:normal 10px "DejaVu Sans Condensed", "DejaVu Sans", "Liberation Sans", sans-serif;color:#d8dce8;letter-spacing:-0.441px;'>Strike age color codes</span><span class="t" style='left:13.00px;top:775.00px;font:normal 10px "DejaVu Sans Condensed", "DejaVu Sans", "Liberation Sans", sans-serif;color:#d8dce8;letter-spacing:-0.344px;'>Recent</span><span class="t" style='left:13.00px;top:788.00px;font:normal 10px "DejaVu Sans Condensed", "DejaVu Sans", "Liberation Sans", sans-serif;color:#d8dce8;letter-spacing:-0.432px;'>Old</span><span class="t" style='left:153.00px;top:775.00px;font:normal 10px "DejaVu Sans Condensed", "DejaVu Sans", "Liberation Sans", sans-serif;color:#e8e000;letter-spacing:-0.661px;'>15+</span><span class="t" style='left:188.00px;top:775.00px;font:normal 10px "DejaVu Sans Condensed", "DejaVu Sans", "Liberation Sans", sans-serif;color:#e0a800;letter-spacing:-0.661px;'>30+</span><span class="t" style='left:223.00px;top:775.00px;font:normal 10px "DejaVu Sans Condensed", "DejaVu Sans", "Liberation Sans", sans-serif;color:#e09000;letter-spacing:-0.661px;'>45+</span><span class="t" style='left:153.00px;top:788.00px;font:normal 10px "DejaVu Sans Condensed", "DejaVu Sans", "Liberation Sans", sans-serif;color:#e07800;letter-spacing:-0.661px;'>60+</span><span class="t" style='left:188.00px;top:788.00px;font:normal 10px "DejaVu Sans Condensed", "DejaVu Sans", "Liberation Sans", sans-serif;color:#e05800;letter-spacing:-0.661px;'>75+</span><span class="t" style='left:223.00px;top:788.00px;font:normal 10px "DejaVu Sans Condensed", "DejaVu Sans", "Liberation Sans", sans-serif;color:#e03800;letter-spacing:-0.661px;'>90+</span><span class="t" style='left:689.00px;top:794.00px;font:normal 10px "DejaVu Sans Condensed", "DejaVu Sans", "Liberation Sans", sans-serif;color:#f0f0f0;letter-spacing:-0.441px;'>©2005 Astrogenic Systems</span>
</body></html>
